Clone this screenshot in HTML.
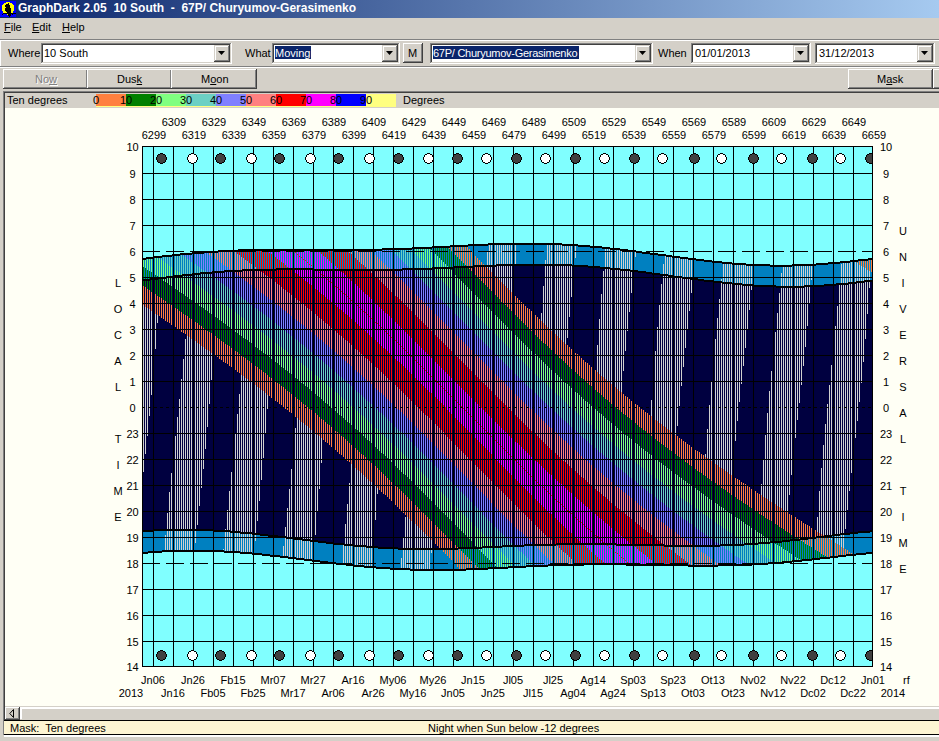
<!DOCTYPE html><html><head><meta charset="utf-8"><style>
html,body{margin:0;padding:0;width:939px;height:741px;overflow:hidden;background:#d4d0c8}
.c{width:40px;text-align:center}
.t{position:absolute;font-family:"Liberation Sans", sans-serif;font-size:11px;line-height:11px;white-space:nowrap}
u{text-decoration:underline}
</style></head><body>
<div style="position:absolute;left:0;top:0;width:939px;height:741px;background:#d4d0c8"></div><div style="position:absolute;left:0;top:0;width:939px;height:18px;background:linear-gradient(to right,#0a246a,#a6caf0)"></div><svg style="position:absolute;left:0;top:0" width="16" height="18" shape-rendering="crispEdges"><rect y="1" width="16" height="16" fill="#0000ff"/><path fill="#ffff00" d="M6 2h4v1h-4zM4 3h8v1h-8zM3 4h10v1h-10zM2 5h12v1h-12zM2 6h12v1h-12zM2 7h12v1h-12zM2 8h12v1h-12zM2 9h12v1h-12zM2 10h12v1h-12zM3 11h10v1h-10zM3 12h10v1h-10zM7 14h1v1h-1z"/><path fill="#000" d="M8 3h1v1h-1zM6 4h3v1h-3zM5 5h5v1h-5zM5 6h5v1h-5zM6 7h4v1h-4zM5 8h6v1h-6zM5 9h6v1h-6zM5 10h6v1h-6zM6 11h5v1h-5zM7 12h4v1h-4zM3 13h13v1h-13zM2 14h1v1h-1zM8 14h3v1h-3zM12 14h1v1h-1zM8 15h3v1h-3zM9 16h1v1h-1z"/></svg><div class="t" style="left:18px;top:3px;font-size:12px;color:#fff;font-weight:bold;">GraphDark 2.05&nbsp; 10 South&nbsp; -&nbsp; 67P/ Churyumov-Gerasimenko</div><div class="t" style="left:4px;top:22px;font-size:11px;color:#000;font-weight:normal;"><u>F</u>ile</div><div class="t" style="left:32px;top:22px;font-size:11px;color:#000;font-weight:normal;"><u>E</u>dit</div><div class="t" style="left:62px;top:22px;font-size:11px;color:#000;font-weight:normal;"><u>H</u>elp</div><div style="position:absolute;left:0px;top:39px;width:939px;height:1px;background:#808080;"></div><div style="position:absolute;left:0px;top:40px;width:939px;height:1px;background:#ffffff;"></div><div style="position:absolute;left:0px;top:41px;width:1px;height:25px;background:#ffffff;"></div><div class="t" style="left:8px;top:48px;font-size:11px;color:#000;font-weight:normal;">Where</div><div style="position:absolute;left:41px;top:43px;width:191px;height:21px;background:#fff;"></div><div style="position:absolute;left:41px;top:43px;width:191px;height:1px;background:#808080;"></div><div style="position:absolute;left:41px;top:43px;width:1px;height:21px;background:#808080;"></div><div style="position:absolute;left:42px;top:44px;width:189px;height:1px;background:#404040;"></div><div style="position:absolute;left:42px;top:44px;width:1px;height:19px;background:#404040;"></div><div style="position:absolute;left:41px;top:63px;width:191px;height:1px;background:#ffffff;"></div><div style="position:absolute;left:231px;top:43px;width:1px;height:21px;background:#ffffff;"></div><div style="position:absolute;left:42px;top:62px;width:189px;height:1px;background:#d4d0c8;"></div><div style="position:absolute;left:230px;top:44px;width:1px;height:19px;background:#d4d0c8;"></div><div style="position:absolute;left:214px;top:45px;width:16px;height:17px;background:#d4d0c8;"></div><div style="position:absolute;left:214px;top:45px;width:16px;height:1px;background:#d4d0c8;"></div><div style="position:absolute;left:214px;top:45px;width:1px;height:17px;background:#d4d0c8;"></div><div style="position:absolute;left:215px;top:46px;width:14px;height:1px;background:#ffffff;"></div><div style="position:absolute;left:215px;top:46px;width:1px;height:15px;background:#ffffff;"></div><div style="position:absolute;left:214px;top:61px;width:16px;height:1px;background:#404040;"></div><div style="position:absolute;left:229px;top:45px;width:1px;height:17px;background:#404040;"></div><div style="position:absolute;left:215px;top:60px;width:14px;height:1px;background:#808080;"></div><div style="position:absolute;left:228px;top:46px;width:1px;height:15px;background:#808080;"></div><svg style="position:absolute;left:218px;top:51px" width="7" height="4"><path d="M0 0h7l-3.5 4z" fill="#000"/></svg><div class="t" style="left:44px;top:48px;font-size:11px;color:#000;font-weight:normal;">10 South</div><div class="t" style="left:245px;top:48px;font-size:11px;color:#000;font-weight:normal;">What</div><div style="position:absolute;left:272px;top:43px;width:128px;height:21px;background:#fff;"></div><div style="position:absolute;left:272px;top:43px;width:128px;height:1px;background:#808080;"></div><div style="position:absolute;left:272px;top:43px;width:1px;height:21px;background:#808080;"></div><div style="position:absolute;left:273px;top:44px;width:126px;height:1px;background:#404040;"></div><div style="position:absolute;left:273px;top:44px;width:1px;height:19px;background:#404040;"></div><div style="position:absolute;left:272px;top:63px;width:128px;height:1px;background:#ffffff;"></div><div style="position:absolute;left:399px;top:43px;width:1px;height:21px;background:#ffffff;"></div><div style="position:absolute;left:273px;top:62px;width:126px;height:1px;background:#d4d0c8;"></div><div style="position:absolute;left:398px;top:44px;width:1px;height:19px;background:#d4d0c8;"></div><div style="position:absolute;left:382px;top:45px;width:16px;height:17px;background:#d4d0c8;"></div><div style="position:absolute;left:382px;top:45px;width:16px;height:1px;background:#d4d0c8;"></div><div style="position:absolute;left:382px;top:45px;width:1px;height:17px;background:#d4d0c8;"></div><div style="position:absolute;left:383px;top:46px;width:14px;height:1px;background:#ffffff;"></div><div style="position:absolute;left:383px;top:46px;width:1px;height:15px;background:#ffffff;"></div><div style="position:absolute;left:382px;top:61px;width:16px;height:1px;background:#404040;"></div><div style="position:absolute;left:397px;top:45px;width:1px;height:17px;background:#404040;"></div><div style="position:absolute;left:383px;top:60px;width:14px;height:1px;background:#808080;"></div><div style="position:absolute;left:396px;top:46px;width:1px;height:15px;background:#808080;"></div><svg style="position:absolute;left:386px;top:51px" width="7" height="4"><path d="M0 0h7l-3.5 4z" fill="#000"/></svg><div style="position:absolute;left:275px;top:46px;width:36px;height:13px;background:#0a246a;"></div><div class="t" style="left:275px;top:48px;font-size:11px;color:#fff;font-weight:normal;">Moving</div><div style="position:absolute;left:403px;top:43px;width:20px;height:20px;background:#d4d0c8;"></div><div style="position:absolute;left:403px;top:43px;width:20px;height:1px;background:#ffffff;"></div><div style="position:absolute;left:403px;top:43px;width:1px;height:20px;background:#ffffff;"></div><div style="position:absolute;left:404px;top:44px;width:18px;height:1px;background:#d4d0c8;"></div><div style="position:absolute;left:404px;top:44px;width:1px;height:18px;background:#d4d0c8;"></div><div style="position:absolute;left:403px;top:62px;width:20px;height:1px;background:#404040;"></div><div style="position:absolute;left:422px;top:43px;width:1px;height:20px;background:#404040;"></div><div style="position:absolute;left:404px;top:61px;width:18px;height:1px;background:#808080;"></div><div style="position:absolute;left:421px;top:44px;width:1px;height:18px;background:#808080;"></div><div class="t" style="left:408px;top:48px;font-size:11px;color:#000;font-weight:normal;">M</div><div style="position:absolute;left:430px;top:43px;width:223px;height:21px;background:#fff;"></div><div style="position:absolute;left:430px;top:43px;width:223px;height:1px;background:#808080;"></div><div style="position:absolute;left:430px;top:43px;width:1px;height:21px;background:#808080;"></div><div style="position:absolute;left:431px;top:44px;width:221px;height:1px;background:#404040;"></div><div style="position:absolute;left:431px;top:44px;width:1px;height:19px;background:#404040;"></div><div style="position:absolute;left:430px;top:63px;width:223px;height:1px;background:#ffffff;"></div><div style="position:absolute;left:652px;top:43px;width:1px;height:21px;background:#ffffff;"></div><div style="position:absolute;left:431px;top:62px;width:221px;height:1px;background:#d4d0c8;"></div><div style="position:absolute;left:651px;top:44px;width:1px;height:19px;background:#d4d0c8;"></div><div style="position:absolute;left:635px;top:45px;width:16px;height:17px;background:#d4d0c8;"></div><div style="position:absolute;left:635px;top:45px;width:16px;height:1px;background:#d4d0c8;"></div><div style="position:absolute;left:635px;top:45px;width:1px;height:17px;background:#d4d0c8;"></div><div style="position:absolute;left:636px;top:46px;width:14px;height:1px;background:#ffffff;"></div><div style="position:absolute;left:636px;top:46px;width:1px;height:15px;background:#ffffff;"></div><div style="position:absolute;left:635px;top:61px;width:16px;height:1px;background:#404040;"></div><div style="position:absolute;left:650px;top:45px;width:1px;height:17px;background:#404040;"></div><div style="position:absolute;left:636px;top:60px;width:14px;height:1px;background:#808080;"></div><div style="position:absolute;left:649px;top:46px;width:1px;height:15px;background:#808080;"></div><svg style="position:absolute;left:639px;top:51px" width="7" height="4"><path d="M0 0h7l-3.5 4z" fill="#000"/></svg><div style="position:absolute;left:433px;top:46px;width:146px;height:13px;background:#0a246a;"></div><div class="t" style="left:433px;top:48px;font-size:11px;color:#fff;font-weight:normal;letter-spacing:-0.26px">67P/ Churyumov-Gerasimenko</div><div class="t" style="left:658px;top:48px;font-size:11px;color:#000;font-weight:normal;">When</div><div style="position:absolute;left:691px;top:43px;width:120px;height:21px;background:#fff;"></div><div style="position:absolute;left:691px;top:43px;width:120px;height:1px;background:#808080;"></div><div style="position:absolute;left:691px;top:43px;width:1px;height:21px;background:#808080;"></div><div style="position:absolute;left:692px;top:44px;width:118px;height:1px;background:#404040;"></div><div style="position:absolute;left:692px;top:44px;width:1px;height:19px;background:#404040;"></div><div style="position:absolute;left:691px;top:63px;width:120px;height:1px;background:#ffffff;"></div><div style="position:absolute;left:810px;top:43px;width:1px;height:21px;background:#ffffff;"></div><div style="position:absolute;left:692px;top:62px;width:118px;height:1px;background:#d4d0c8;"></div><div style="position:absolute;left:809px;top:44px;width:1px;height:19px;background:#d4d0c8;"></div><div style="position:absolute;left:793px;top:45px;width:16px;height:17px;background:#d4d0c8;"></div><div style="position:absolute;left:793px;top:45px;width:16px;height:1px;background:#d4d0c8;"></div><div style="position:absolute;left:793px;top:45px;width:1px;height:17px;background:#d4d0c8;"></div><div style="position:absolute;left:794px;top:46px;width:14px;height:1px;background:#ffffff;"></div><div style="position:absolute;left:794px;top:46px;width:1px;height:15px;background:#ffffff;"></div><div style="position:absolute;left:793px;top:61px;width:16px;height:1px;background:#404040;"></div><div style="position:absolute;left:808px;top:45px;width:1px;height:17px;background:#404040;"></div><div style="position:absolute;left:794px;top:60px;width:14px;height:1px;background:#808080;"></div><div style="position:absolute;left:807px;top:46px;width:1px;height:15px;background:#808080;"></div><svg style="position:absolute;left:797px;top:51px" width="7" height="4"><path d="M0 0h7l-3.5 4z" fill="#000"/></svg><div class="t" style="left:695px;top:48px;font-size:11px;color:#000;font-weight:normal;">01/01/2013</div><div style="position:absolute;left:815px;top:43px;width:120px;height:21px;background:#fff;"></div><div style="position:absolute;left:815px;top:43px;width:120px;height:1px;background:#808080;"></div><div style="position:absolute;left:815px;top:43px;width:1px;height:21px;background:#808080;"></div><div style="position:absolute;left:816px;top:44px;width:118px;height:1px;background:#404040;"></div><div style="position:absolute;left:816px;top:44px;width:1px;height:19px;background:#404040;"></div><div style="position:absolute;left:815px;top:63px;width:120px;height:1px;background:#ffffff;"></div><div style="position:absolute;left:934px;top:43px;width:1px;height:21px;background:#ffffff;"></div><div style="position:absolute;left:816px;top:62px;width:118px;height:1px;background:#d4d0c8;"></div><div style="position:absolute;left:933px;top:44px;width:1px;height:19px;background:#d4d0c8;"></div><div style="position:absolute;left:917px;top:45px;width:16px;height:17px;background:#d4d0c8;"></div><div style="position:absolute;left:917px;top:45px;width:16px;height:1px;background:#d4d0c8;"></div><div style="position:absolute;left:917px;top:45px;width:1px;height:17px;background:#d4d0c8;"></div><div style="position:absolute;left:918px;top:46px;width:14px;height:1px;background:#ffffff;"></div><div style="position:absolute;left:918px;top:46px;width:1px;height:15px;background:#ffffff;"></div><div style="position:absolute;left:917px;top:61px;width:16px;height:1px;background:#404040;"></div><div style="position:absolute;left:932px;top:45px;width:1px;height:17px;background:#404040;"></div><div style="position:absolute;left:918px;top:60px;width:14px;height:1px;background:#808080;"></div><div style="position:absolute;left:931px;top:46px;width:1px;height:15px;background:#808080;"></div><svg style="position:absolute;left:921px;top:51px" width="7" height="4"><path d="M0 0h7l-3.5 4z" fill="#000"/></svg><div class="t" style="left:819px;top:48px;font-size:11px;color:#000;font-weight:normal;">31/12/2013</div><div style="position:absolute;left:0px;top:66px;width:939px;height:1px;background:#808080;"></div><div style="position:absolute;left:0px;top:67px;width:939px;height:1px;background:#ffffff;"></div><div style="position:absolute;left:3px;top:69px;width:85px;height:20px;background:#d4d0c8;"></div><div style="position:absolute;left:3px;top:69px;width:85px;height:1px;background:#ffffff;"></div><div style="position:absolute;left:3px;top:69px;width:1px;height:20px;background:#ffffff;"></div><div style="position:absolute;left:4px;top:70px;width:83px;height:1px;background:#d4d0c8;"></div><div style="position:absolute;left:4px;top:70px;width:1px;height:18px;background:#d4d0c8;"></div><div style="position:absolute;left:3px;top:88px;width:85px;height:1px;background:#404040;"></div><div style="position:absolute;left:87px;top:69px;width:1px;height:20px;background:#404040;"></div><div style="position:absolute;left:4px;top:87px;width:83px;height:1px;background:#808080;"></div><div style="position:absolute;left:86px;top:70px;width:1px;height:18px;background:#808080;"></div><div class="t" style="left:35px;top:74px;font-size:11px;color:#808080;font-weight:normal;text-shadow:1px 1px 0 #fff">No<span style="text-decoration:underline">w</span></div><div style="position:absolute;left:87px;top:69px;width:85px;height:20px;background:#d4d0c8;"></div><div style="position:absolute;left:87px;top:69px;width:85px;height:1px;background:#ffffff;"></div><div style="position:absolute;left:87px;top:69px;width:1px;height:20px;background:#ffffff;"></div><div style="position:absolute;left:88px;top:70px;width:83px;height:1px;background:#d4d0c8;"></div><div style="position:absolute;left:88px;top:70px;width:1px;height:18px;background:#d4d0c8;"></div><div style="position:absolute;left:87px;top:88px;width:85px;height:1px;background:#404040;"></div><div style="position:absolute;left:171px;top:69px;width:1px;height:20px;background:#404040;"></div><div style="position:absolute;left:88px;top:87px;width:83px;height:1px;background:#808080;"></div><div style="position:absolute;left:170px;top:70px;width:1px;height:18px;background:#808080;"></div><div class="t" style="left:117px;top:74px;font-size:11px;color:#000;font-weight:normal;">Dus<u>k</u></div><div style="position:absolute;left:171px;top:69px;width:86px;height:20px;background:#d4d0c8;"></div><div style="position:absolute;left:171px;top:69px;width:86px;height:1px;background:#ffffff;"></div><div style="position:absolute;left:171px;top:69px;width:1px;height:20px;background:#ffffff;"></div><div style="position:absolute;left:172px;top:70px;width:84px;height:1px;background:#d4d0c8;"></div><div style="position:absolute;left:172px;top:70px;width:1px;height:18px;background:#d4d0c8;"></div><div style="position:absolute;left:171px;top:88px;width:86px;height:1px;background:#404040;"></div><div style="position:absolute;left:256px;top:69px;width:1px;height:20px;background:#404040;"></div><div style="position:absolute;left:172px;top:87px;width:84px;height:1px;background:#808080;"></div><div style="position:absolute;left:255px;top:70px;width:1px;height:18px;background:#808080;"></div><div class="t" style="left:201px;top:74px;font-size:11px;color:#000;font-weight:normal;">M<u>o</u>on</div><div style="position:absolute;left:848px;top:69px;width:85px;height:20px;background:#d4d0c8;"></div><div style="position:absolute;left:848px;top:69px;width:85px;height:1px;background:#ffffff;"></div><div style="position:absolute;left:848px;top:69px;width:1px;height:20px;background:#ffffff;"></div><div style="position:absolute;left:849px;top:70px;width:83px;height:1px;background:#d4d0c8;"></div><div style="position:absolute;left:849px;top:70px;width:1px;height:18px;background:#d4d0c8;"></div><div style="position:absolute;left:848px;top:88px;width:85px;height:1px;background:#404040;"></div><div style="position:absolute;left:932px;top:69px;width:1px;height:20px;background:#404040;"></div><div style="position:absolute;left:849px;top:87px;width:83px;height:1px;background:#808080;"></div><div style="position:absolute;left:931px;top:70px;width:1px;height:18px;background:#808080;"></div><div class="t" style="left:877px;top:74px;font-size:11px;color:#000;font-weight:normal;">M<u>a</u>sk</div><div style="position:absolute;left:933px;top:69px;width:85px;height:20px;background:#d4d0c8;"></div><div style="position:absolute;left:933px;top:69px;width:85px;height:1px;background:#ffffff;"></div><div style="position:absolute;left:933px;top:69px;width:1px;height:20px;background:#ffffff;"></div><div style="position:absolute;left:934px;top:70px;width:83px;height:1px;background:#d4d0c8;"></div><div style="position:absolute;left:934px;top:70px;width:1px;height:18px;background:#d4d0c8;"></div><div style="position:absolute;left:933px;top:88px;width:85px;height:1px;background:#404040;"></div><div style="position:absolute;left:1017px;top:69px;width:1px;height:20px;background:#404040;"></div><div style="position:absolute;left:934px;top:87px;width:83px;height:1px;background:#808080;"></div><div style="position:absolute;left:1016px;top:70px;width:1px;height:18px;background:#808080;"></div><div style="position:absolute;left:3px;top:91px;width:936px;height:1px;background:#808080;"></div><div style="position:absolute;left:3px;top:91px;width:1px;height:644px;background:#808080;"></div><div style="position:absolute;left:4px;top:92px;width:935px;height:1px;background:#404040;"></div><div style="position:absolute;left:4px;top:92px;width:1px;height:642px;background:#404040;"></div><div style="position:absolute;left:5px;top:93px;width:934px;height:14px;background:#d4d0c8;"></div><div class="t" style="left:7px;top:95px;font-size:11px;color:#000;font-weight:normal;">Ten degrees</div><div style="position:absolute;left:96px;top:94px;width:30px;height:12px;background:#ff8040;"></div><div style="position:absolute;left:126px;top:94px;width:30px;height:12px;background:#008000;"></div><div style="position:absolute;left:156px;top:94px;width:30px;height:12px;background:#80ff80;"></div><div style="position:absolute;left:186px;top:94px;width:30px;height:12px;background:#6cd0c4;"></div><div style="position:absolute;left:216px;top:94px;width:30px;height:12px;background:#8080ff;"></div><div style="position:absolute;left:246px;top:94px;width:30px;height:12px;background:#ff8080;"></div><div style="position:absolute;left:276px;top:94px;width:30px;height:12px;background:#ff0000;"></div><div style="position:absolute;left:306px;top:94px;width:30px;height:12px;background:#ff00ff;"></div><div style="position:absolute;left:336px;top:94px;width:30px;height:12px;background:#0000ff;"></div><div style="position:absolute;left:366px;top:94px;width:30px;height:12px;background:#ffff80;"></div><div style="position:absolute;left:96px;top:106px;width:300px;height:1px;background:#ffff80;"></div><div class="t" style="left:93px;top:95px;font-size:11px;color:#000;font-weight:normal;">0</div><div class="t" style="left:120px;top:95px;font-size:11px;color:#000;font-weight:normal;">10</div><div class="t" style="left:150px;top:95px;font-size:11px;color:#000;font-weight:normal;">20</div><div class="t" style="left:180px;top:95px;font-size:11px;color:#000;font-weight:normal;">30</div><div class="t" style="left:210px;top:95px;font-size:11px;color:#000;font-weight:normal;">40</div><div class="t" style="left:240px;top:95px;font-size:11px;color:#000;font-weight:normal;">50</div><div class="t" style="left:270px;top:95px;font-size:11px;color:#000;font-weight:normal;">60</div><div class="t" style="left:300px;top:95px;font-size:11px;color:#000;font-weight:normal;">70</div><div class="t" style="left:330px;top:95px;font-size:11px;color:#000;font-weight:normal;">80</div><div class="t" style="left:360px;top:95px;font-size:11px;color:#000;font-weight:normal;">90</div><div class="t" style="left:403px;top:95px;font-size:11px;color:#000;font-weight:normal;">Degrees</div><div style="position:absolute;left:5px;top:108px;width:934px;height:598px;background:#fffff5;"></div><svg style="position:absolute;left:142px;top:146px" width="731" height="521" shape-rendering="crispEdges"><rect x="0" y="0" width="730" height="520" fill="#80ffff"/><path fill="#000000" d="M0 27h11v1h-11zM12 27h19v1h-19zM32 27h19v1h-19zM52 27h19v1h-19zM72 27h19v1h-19zM92 27h19v1h-19zM112 27h19v1h-19zM132 27h19v1h-19zM152 27h19v1h-19zM172 27h19v1h-19zM192 27h19v1h-19zM212 27h19v1h-19zM232 27h19v1h-19zM252 27h19v1h-19zM272 27h19v1h-19zM292 27h19v1h-19zM312 27h19v1h-19zM332 27h19v1h-19zM352 27h19v1h-19zM372 27h19v1h-19zM392 27h19v1h-19zM412 27h19v1h-19zM432 27h19v1h-19zM452 27h19v1h-19zM472 27h19v1h-19zM492 27h19v1h-19zM512 27h19v1h-19zM532 27h19v1h-19zM552 27h19v1h-19zM572 27h19v1h-19zM592 27h19v1h-19zM612 27h19v1h-19zM632 27h19v1h-19zM652 27h19v1h-19zM672 27h19v1h-19zM692 27h19v1h-19zM712 27h18v1h-18zM0 53h11v1h-11zM12 53h19v1h-19zM32 53h19v1h-19zM52 53h19v1h-19zM72 53h19v1h-19zM92 53h19v1h-19zM112 53h19v1h-19zM132 53h19v1h-19zM152 53h19v1h-19zM172 53h19v1h-19zM192 53h19v1h-19zM212 53h19v1h-19zM232 53h19v1h-19zM252 53h19v1h-19zM272 53h19v1h-19zM292 53h19v1h-19zM312 53h19v1h-19zM332 53h19v1h-19zM352 53h19v1h-19zM372 53h19v1h-19zM392 53h19v1h-19zM412 53h19v1h-19zM432 53h19v1h-19zM452 53h19v1h-19zM472 53h19v1h-19zM492 53h19v1h-19zM512 53h19v1h-19zM532 53h19v1h-19zM552 53h19v1h-19zM572 53h19v1h-19zM592 53h19v1h-19zM612 53h19v1h-19zM632 53h19v1h-19zM652 53h19v1h-19zM672 53h19v1h-19zM692 53h19v1h-19zM712 53h18v1h-18zM0 79h11v1h-11zM12 79h19v1h-19zM32 79h19v1h-19zM52 79h19v1h-19zM72 79h19v1h-19zM92 79h19v1h-19zM112 79h19v1h-19zM132 79h19v1h-19zM152 79h19v1h-19zM172 79h19v1h-19zM192 79h19v1h-19zM212 79h19v1h-19zM232 79h19v1h-19zM252 79h19v1h-19zM272 79h19v1h-19zM292 79h19v1h-19zM312 79h19v1h-19zM332 79h19v1h-19zM352 79h19v1h-19zM372 79h19v1h-19zM392 79h19v1h-19zM412 79h19v1h-19zM432 79h19v1h-19zM452 79h19v1h-19zM472 79h19v1h-19zM492 79h19v1h-19zM512 79h19v1h-19zM532 79h19v1h-19zM552 79h19v1h-19zM572 79h19v1h-19zM592 79h19v1h-19zM612 79h19v1h-19zM632 79h19v1h-19zM652 79h19v1h-19zM672 79h19v1h-19zM692 79h19v1h-19zM712 79h18v1h-18zM0 105h11v1h-11zM12 105h6v1h-6zM24 105h7v1h-7zM32 105h10v1h-10zM48 105h2v1h-2zM240 105h11v1h-11zM252 105h6v1h-6zM264 105h7v1h-7zM272 105h10v1h-10zM288 105h3v1h-3zM292 105h14v1h-14zM312 105h18v1h-18zM336 105h15v1h-15zM352 105h2v1h-2zM360 105h11v1h-11zM372 105h6v1h-6zM384 105h7v1h-7zM392 105h10v1h-10zM408 105h3v1h-3zM412 105h14v1h-14zM432 105h18v1h-18zM456 105h15v1h-15zM472 105h2v1h-2zM508 105h3v1h-3zM512 105h10v1h-10zM528 105h3v1h-3zM532 105h14v1h-14zM552 105h18v1h-18zM576 105h15v1h-15zM592 105h2v1h-2zM600 105h11v1h-11zM612 105h6v1h-6zM624 105h7v1h-7zM632 105h10v1h-10zM648 105h3v1h-3zM652 105h14v1h-14zM672 105h18v1h-18zM696 105h15v1h-15zM712 105h2v1h-2zM720 105h10v1h-10zM0 112h4v2h-4zM546 112h5v2h-5zM552 112h2v2h-2zM726 112h4v2h-4zM0 131h8v1h-8zM40 131h11v1h-11zM52 131h19v1h-19zM72 131h19v1h-19zM92 131h19v1h-19zM112 131h19v1h-19zM132 131h19v1h-19zM152 131h19v1h-19zM172 131h19v1h-19zM192 131h19v1h-19zM212 131h19v1h-19zM232 131h19v1h-19zM252 131h19v1h-19zM272 131h19v1h-19zM292 131h19v1h-19zM312 131h19v1h-19zM332 131h19v1h-19zM352 131h19v1h-19zM372 131h19v1h-19zM392 131h19v1h-19zM412 131h19v1h-19zM432 131h19v1h-19zM452 131h19v1h-19zM472 131h19v1h-19zM492 131h19v1h-19zM512 131h14v1h-14zM556 131h15v1h-15zM572 131h19v1h-19zM592 131h19v1h-19zM612 131h19v1h-19zM632 131h19v1h-19zM652 131h19v1h-19zM672 131h19v1h-19zM692 131h19v1h-19zM712 131h18v1h-18zM0 133h8v2h-8zM556 133h6v2h-6zM0 157h11v1h-11zM12 157h19v1h-19zM32 157h19v1h-19zM52 157h19v1h-19zM72 157h19v1h-19zM92 157h19v1h-19zM112 157h19v1h-19zM132 157h19v1h-19zM152 157h19v1h-19zM172 157h19v1h-19zM192 157h19v1h-19zM212 157h19v1h-19zM232 157h19v1h-19zM252 157h19v1h-19zM272 157h19v1h-19zM292 157h19v1h-19zM312 157h19v1h-19zM332 157h19v1h-19zM352 157h19v1h-19zM372 157h19v1h-19zM392 157h19v1h-19zM412 157h19v1h-19zM432 157h19v1h-19zM452 157h19v1h-19zM472 157h19v1h-19zM492 157h19v1h-19zM512 157h19v1h-19zM532 157h19v1h-19zM552 157h19v1h-19zM572 157h19v1h-19zM592 157h19v1h-19zM612 157h19v1h-19zM632 157h19v1h-19zM652 157h19v1h-19zM672 157h19v1h-19zM692 157h19v1h-19zM712 157h18v1h-18zM0 183h11v1h-11zM12 183h19v1h-19zM32 183h19v1h-19zM52 183h19v1h-19zM72 183h19v1h-19zM92 183h19v1h-19zM112 183h19v1h-19zM132 183h19v1h-19zM152 183h19v1h-19zM172 183h19v1h-19zM192 183h19v1h-19zM212 183h19v1h-19zM232 183h19v1h-19zM252 183h19v1h-19zM272 183h19v1h-19zM292 183h19v1h-19zM312 183h19v1h-19zM332 183h19v1h-19zM352 183h19v1h-19zM372 183h19v1h-19zM392 183h19v1h-19zM412 183h19v1h-19zM432 183h19v1h-19zM452 183h19v1h-19zM472 183h19v1h-19zM492 183h19v1h-19zM512 183h19v1h-19zM532 183h19v1h-19zM552 183h19v1h-19zM572 183h19v1h-19zM592 183h19v1h-19zM612 183h19v1h-19zM632 183h19v1h-19zM652 183h19v1h-19zM672 183h19v1h-19zM692 183h19v1h-19zM712 183h18v1h-18zM0 209h11v1h-11zM12 209h19v1h-19zM32 209h19v1h-19zM52 209h19v1h-19zM72 209h19v1h-19zM92 209h19v1h-19zM112 209h19v1h-19zM132 209h19v1h-19zM152 209h19v1h-19zM172 209h19v1h-19zM192 209h19v1h-19zM212 209h19v1h-19zM232 209h19v1h-19zM252 209h19v1h-19zM272 209h19v1h-19zM292 209h19v1h-19zM312 209h19v1h-19zM332 209h19v1h-19zM352 209h19v1h-19zM372 209h19v1h-19zM392 209h19v1h-19zM412 209h19v1h-19zM432 209h19v1h-19zM452 209h19v1h-19zM472 209h19v1h-19zM492 209h19v1h-19zM512 209h19v1h-19zM532 209h19v1h-19zM552 209h19v1h-19zM572 209h19v1h-19zM592 209h19v1h-19zM612 209h19v1h-19zM632 209h19v1h-19zM652 209h19v1h-19zM672 209h19v1h-19zM692 209h19v1h-19zM712 209h18v1h-18zM0 235h11v1h-11zM12 235h19v1h-19zM32 235h19v1h-19zM52 235h19v1h-19zM72 235h19v1h-19zM92 235h19v1h-19zM112 235h19v1h-19zM132 235h19v1h-19zM152 235h19v1h-19zM172 235h19v1h-19zM192 235h19v1h-19zM212 235h19v1h-19zM232 235h19v1h-19zM252 235h19v1h-19zM272 235h19v1h-19zM292 235h19v1h-19zM312 235h19v1h-19zM332 235h19v1h-19zM352 235h19v1h-19zM372 235h19v1h-19zM392 235h19v1h-19zM412 235h19v1h-19zM432 235h19v1h-19zM452 235h19v1h-19zM472 235h19v1h-19zM492 235h19v1h-19zM512 235h19v1h-19zM532 235h19v1h-19zM552 235h19v1h-19zM572 235h19v1h-19zM592 235h19v1h-19zM612 235h19v1h-19zM632 235h19v1h-19zM652 235h19v1h-19zM672 235h19v1h-19zM692 235h19v1h-19zM712 235h18v1h-18zM0 261h3v1h-3zM6 261h3v1h-3zM12 261h3v1h-3zM18 261h3v1h-3zM24 261h3v1h-3zM30 261h1v1h-1zM32 261h1v1h-1zM36 261h3v1h-3zM42 261h3v1h-3zM48 261h3v1h-3zM54 261h3v1h-3zM60 261h3v1h-3zM66 261h3v1h-3zM72 261h3v1h-3zM78 261h3v1h-3zM84 261h3v1h-3zM90 261h1v1h-1zM92 261h1v1h-1zM96 261h3v1h-3zM102 261h3v1h-3zM108 261h3v1h-3zM114 261h3v1h-3zM120 261h3v1h-3zM126 261h3v1h-3zM132 261h3v1h-3zM138 261h3v1h-3zM144 261h3v1h-3zM150 261h1v1h-1zM152 261h1v1h-1zM156 261h3v1h-3zM162 261h3v1h-3zM168 261h3v1h-3zM174 261h3v1h-3zM180 261h3v1h-3zM186 261h3v1h-3zM192 261h3v1h-3zM198 261h3v1h-3zM204 261h3v1h-3zM210 261h1v1h-1zM212 261h1v1h-1zM216 261h3v1h-3zM222 261h3v1h-3zM228 261h3v1h-3zM234 261h3v1h-3zM240 261h3v1h-3zM246 261h3v1h-3zM252 261h3v1h-3zM258 261h3v1h-3zM264 261h3v1h-3zM270 261h1v1h-1zM272 261h1v1h-1zM276 261h3v1h-3zM282 261h3v1h-3zM288 261h3v1h-3zM294 261h3v1h-3zM300 261h3v1h-3zM306 261h3v1h-3zM312 261h3v1h-3zM318 261h3v1h-3zM324 261h3v1h-3zM330 261h1v1h-1zM332 261h1v1h-1zM336 261h3v1h-3zM342 261h3v1h-3zM348 261h3v1h-3zM354 261h3v1h-3zM360 261h3v1h-3zM366 261h3v1h-3zM372 261h3v1h-3zM378 261h3v1h-3zM384 261h3v1h-3zM390 261h1v1h-1zM392 261h1v1h-1zM396 261h3v1h-3zM402 261h3v1h-3zM408 261h3v1h-3zM414 261h3v1h-3zM420 261h3v1h-3zM426 261h3v1h-3zM432 261h3v1h-3zM438 261h3v1h-3zM444 261h3v1h-3zM450 261h1v1h-1zM452 261h1v1h-1zM456 261h3v1h-3zM462 261h3v1h-3zM468 261h3v1h-3zM474 261h3v1h-3zM480 261h3v1h-3zM486 261h3v1h-3zM492 261h3v1h-3zM498 261h3v1h-3zM504 261h3v1h-3zM510 261h1v1h-1zM512 261h1v1h-1zM516 261h3v1h-3zM522 261h3v1h-3zM528 261h3v1h-3zM534 261h3v1h-3zM540 261h3v1h-3zM546 261h3v1h-3zM552 261h3v1h-3zM558 261h3v1h-3zM564 261h3v1h-3zM570 261h1v1h-1zM572 261h1v1h-1zM576 261h3v1h-3zM582 261h3v1h-3zM588 261h3v1h-3zM594 261h3v1h-3zM600 261h3v1h-3zM606 261h3v1h-3zM612 261h3v1h-3zM618 261h3v1h-3zM624 261h3v1h-3zM630 261h1v1h-1zM632 261h1v1h-1zM636 261h3v1h-3zM642 261h3v1h-3zM648 261h3v1h-3zM654 261h3v1h-3zM660 261h3v1h-3zM666 261h3v1h-3zM672 261h3v1h-3zM678 261h3v1h-3zM684 261h3v1h-3zM690 261h1v1h-1zM692 261h1v1h-1zM696 261h3v1h-3zM702 261h3v1h-3zM708 261h3v1h-3zM714 261h3v1h-3zM720 261h3v1h-3zM726 261h3v1h-3zM0 287h11v1h-11zM12 287h19v1h-19zM32 287h19v1h-19zM52 287h19v1h-19zM72 287h19v1h-19zM92 287h19v1h-19zM112 287h19v1h-19zM132 287h19v1h-19zM152 287h19v1h-19zM172 287h19v1h-19zM192 287h19v1h-19zM212 287h19v1h-19zM232 287h19v1h-19zM252 287h19v1h-19zM272 287h19v1h-19zM292 287h19v1h-19zM312 287h19v1h-19zM332 287h19v1h-19zM352 287h19v1h-19zM372 287h19v1h-19zM392 287h19v1h-19zM412 287h19v1h-19zM432 287h19v1h-19zM452 287h19v1h-19zM472 287h19v1h-19zM492 287h19v1h-19zM512 287h19v1h-19zM532 287h19v1h-19zM552 287h19v1h-19zM572 287h19v1h-19zM592 287h19v1h-19zM612 287h19v1h-19zM632 287h19v1h-19zM652 287h19v1h-19zM672 287h19v1h-19zM692 287h19v1h-19zM712 287h18v1h-18zM0 313h11v1h-11zM12 313h19v1h-19zM32 313h19v1h-19zM52 313h19v1h-19zM72 313h19v1h-19zM92 313h19v1h-19zM112 313h19v1h-19zM132 313h19v1h-19zM152 313h19v1h-19zM172 313h19v1h-19zM192 313h19v1h-19zM212 313h19v1h-19zM232 313h19v1h-19zM252 313h19v1h-19zM272 313h19v1h-19zM292 313h19v1h-19zM312 313h19v1h-19zM332 313h19v1h-19zM352 313h19v1h-19zM372 313h19v1h-19zM392 313h19v1h-19zM412 313h19v1h-19zM432 313h19v1h-19zM452 313h19v1h-19zM472 313h19v1h-19zM492 313h19v1h-19zM512 313h19v1h-19zM532 313h19v1h-19zM552 313h19v1h-19zM572 313h19v1h-19zM592 313h19v1h-19zM612 313h19v1h-19zM632 313h19v1h-19zM652 313h19v1h-19zM672 313h19v1h-19zM692 313h19v1h-19zM712 313h18v1h-18zM0 339h11v1h-11zM12 339h19v1h-19zM32 339h19v1h-19zM52 339h19v1h-19zM72 339h19v1h-19zM92 339h19v1h-19zM112 339h19v1h-19zM132 339h19v1h-19zM152 339h19v1h-19zM172 339h19v1h-19zM192 339h19v1h-19zM212 339h19v1h-19zM232 339h19v1h-19zM252 339h19v1h-19zM272 339h19v1h-19zM292 339h19v1h-19zM312 339h19v1h-19zM332 339h19v1h-19zM352 339h19v1h-19zM372 339h19v1h-19zM392 339h19v1h-19zM412 339h19v1h-19zM432 339h19v1h-19zM452 339h19v1h-19zM472 339h19v1h-19zM492 339h19v1h-19zM512 339h19v1h-19zM532 339h19v1h-19zM552 339h19v1h-19zM572 339h19v1h-19zM592 339h19v1h-19zM612 339h19v1h-19zM632 339h19v1h-19zM652 339h19v1h-19zM672 339h19v1h-19zM692 339h19v1h-19zM712 339h18v1h-18zM0 365h11v1h-11zM12 365h19v1h-19zM32 365h19v1h-19zM52 365h19v1h-19zM72 365h19v1h-19zM92 365h19v1h-19zM112 365h19v1h-19zM132 365h19v1h-19zM152 365h19v1h-19zM172 365h19v1h-19zM192 365h19v1h-19zM212 365h19v1h-19zM232 365h19v1h-19zM252 365h19v1h-19zM272 365h19v1h-19zM292 365h19v1h-19zM312 365h19v1h-19zM332 365h19v1h-19zM352 365h19v1h-19zM372 365h19v1h-19zM392 365h19v1h-19zM412 365h19v1h-19zM432 365h19v1h-19zM452 365h19v1h-19zM472 365h19v1h-19zM492 365h19v1h-19zM512 365h19v1h-19zM532 365h19v1h-19zM552 365h19v1h-19zM572 365h19v1h-19zM592 365h19v1h-19zM612 365h19v1h-19zM632 365h19v1h-19zM652 365h19v1h-19zM672 365h19v1h-19zM692 365h19v1h-19zM712 365h18v1h-18zM0 384h11v2h-11zM72 384h16v2h-16zM728 384h2v2h-2zM0 391h11v1h-11zM12 391h19v1h-19zM32 391h19v1h-19zM52 391h19v1h-19zM72 391h19v1h-19zM92 391h19v1h-19zM112 391h14v1h-14zM160 391h11v1h-11zM172 391h19v1h-19zM192 391h19v1h-19zM212 391h19v1h-19zM232 391h19v1h-19zM252 391h19v1h-19zM272 391h19v1h-19zM292 391h19v1h-19zM312 391h19v1h-19zM332 391h19v1h-19zM352 391h19v1h-19zM372 391h19v1h-19zM392 391h19v1h-19zM412 391h19v1h-19zM432 391h19v1h-19zM452 391h19v1h-19zM472 391h19v1h-19zM492 391h19v1h-19zM512 391h19v1h-19zM532 391h19v1h-19zM552 391h19v1h-19zM572 391h19v1h-19zM592 391h19v1h-19zM612 391h19v1h-19zM632 391h19v1h-19zM652 391h6v1h-6zM690 391h1v1h-1zM692 391h19v1h-19zM712 391h18v1h-18zM0 406h6v2h-6zM98 406h12v2h-12zM724 406h6v2h-6zM0 417h11v1h-11zM12 417h6v1h-6zM24 417h7v1h-7zM32 417h10v1h-10zM48 417h3v1h-3zM52 417h14v1h-14zM72 417h18v1h-18zM96 417h15v1h-15zM112 417h2v1h-2zM120 417h11v1h-11zM132 417h6v1h-6zM144 417h7v1h-7zM152 417h10v1h-10zM168 417h3v1h-3zM172 417h6v1h-6zM216 417h15v1h-15zM232 417h2v1h-2zM240 417h11v1h-11zM252 417h6v1h-6zM264 417h7v1h-7zM272 417h10v1h-10zM288 417h3v1h-3zM292 417h14v1h-14zM312 417h18v1h-18zM336 417h15v1h-15zM352 417h2v1h-2zM360 417h11v1h-11zM372 417h6v1h-6zM384 417h7v1h-7zM392 417h10v1h-10zM552 417h18v1h-18zM650 417h1v1h-1zM652 417h14v1h-14zM672 417h18v1h-18zM696 417h15v1h-15zM712 417h2v1h-2zM720 417h10v1h-10zM0 443h11v1h-11zM12 443h19v1h-19zM32 443h19v1h-19zM52 443h19v1h-19zM72 443h19v1h-19zM92 443h19v1h-19zM112 443h19v1h-19zM132 443h19v1h-19zM152 443h19v1h-19zM172 443h19v1h-19zM192 443h19v1h-19zM212 443h19v1h-19zM232 443h19v1h-19zM252 443h19v1h-19zM272 443h19v1h-19zM292 443h19v1h-19zM312 443h19v1h-19zM332 443h19v1h-19zM352 443h19v1h-19zM372 443h19v1h-19zM392 443h19v1h-19zM412 443h19v1h-19zM432 443h19v1h-19zM452 443h19v1h-19zM472 443h19v1h-19zM492 443h19v1h-19zM512 443h19v1h-19zM532 443h19v1h-19zM552 443h19v1h-19zM572 443h19v1h-19zM592 443h19v1h-19zM612 443h19v1h-19zM632 443h19v1h-19zM652 443h19v1h-19zM672 443h19v1h-19zM692 443h19v1h-19zM712 443h18v1h-18zM0 469h11v1h-11zM12 469h19v1h-19zM32 469h19v1h-19zM52 469h19v1h-19zM72 469h19v1h-19zM92 469h19v1h-19zM112 469h19v1h-19zM132 469h19v1h-19zM152 469h19v1h-19zM172 469h19v1h-19zM192 469h19v1h-19zM212 469h19v1h-19zM232 469h19v1h-19zM252 469h19v1h-19zM272 469h19v1h-19zM292 469h19v1h-19zM312 469h19v1h-19zM332 469h19v1h-19zM352 469h19v1h-19zM372 469h19v1h-19zM392 469h19v1h-19zM412 469h19v1h-19zM432 469h19v1h-19zM452 469h19v1h-19zM472 469h19v1h-19zM492 469h19v1h-19zM512 469h19v1h-19zM532 469h19v1h-19zM552 469h19v1h-19zM572 469h19v1h-19zM592 469h19v1h-19zM612 469h19v1h-19zM632 469h19v1h-19zM652 469h19v1h-19zM672 469h19v1h-19zM692 469h19v1h-19zM712 469h18v1h-18zM0 495h11v1h-11zM12 495h19v1h-19zM32 495h19v1h-19zM52 495h19v1h-19zM72 495h19v1h-19zM92 495h19v1h-19zM112 495h19v1h-19zM132 495h19v1h-19zM152 495h19v1h-19zM172 495h19v1h-19zM192 495h19v1h-19zM212 495h19v1h-19zM232 495h19v1h-19zM252 495h19v1h-19zM272 495h19v1h-19zM292 495h19v1h-19zM312 495h19v1h-19zM332 495h19v1h-19zM352 495h19v1h-19zM372 495h19v1h-19zM392 495h19v1h-19zM412 495h19v1h-19zM432 495h19v1h-19zM452 495h19v1h-19zM472 495h19v1h-19zM492 495h19v1h-19zM512 495h19v1h-19zM532 495h19v1h-19zM552 495h19v1h-19zM572 495h19v1h-19zM592 495h19v1h-19zM612 495h19v1h-19zM632 495h19v1h-19zM652 495h19v1h-19zM672 495h19v1h-19zM692 495h19v1h-19zM712 495h18v1h-18zM4 111h7v2h-7zM538 111h8v2h-8zM6 405h5v2h-5zM12 405h8v2h-8zM82 405h9v2h-9zM92 405h6v2h-6zM8 131h3v3h-3zM12 131h4v3h-4zM548 131h3v3h-3zM552 131h4v3h-4zM11 0h1v520h-1zM31 0h1v520h-1zM71 0h1v520h-1zM91 0h1v520h-1zM131 0h1v520h-1zM151 0h1v520h-1zM191 0h1v520h-1zM211 0h1v520h-1zM251 0h1v520h-1zM271 0h1v520h-1zM291 0h1v520h-1zM331 0h1v520h-1zM351 0h1v520h-1zM391 0h1v520h-1zM411 0h1v520h-1zM451 0h1v520h-1zM471 0h1v520h-1zM511 0h1v520h-1zM531 0h1v520h-1zM571 0h1v520h-1zM591 0h1v520h-1zM631 0h1v520h-1zM651 0h1v520h-1zM691 0h1v520h-1zM711 0h1v520h-1zM12 110h8v2h-8zM530 110h1v2h-1zM532 110h6v2h-6zM12 383h19v2h-19zM32 383h19v2h-19zM52 383h19v2h-19zM14 11h1v3h-1zM24 11h1v3h-1zM45 11h1v3h-1zM55 11h1v3h-1zM73 11h1v3h-1zM83 11h1v3h-1zM104 11h1v3h-1zM114 11h1v3h-1zM132 11h1v3h-1zM142 11h1v3h-1zM163 11h1v3h-1zM173 11h1v3h-1zM201 11h1v3h-1zM222 11h1v3h-1zM232 11h1v3h-1zM261 11h1v3h-1zM281 11h1v3h-1zM310 11h1v3h-1zM320 11h1v3h-1zM339 11h1v3h-1zM349 11h1v3h-1zM369 11h1v3h-1zM379 11h1v3h-1zM398 11h1v3h-1zM408 11h1v3h-1zM428 11h1v3h-1zM438 11h1v3h-1zM457 11h1v3h-1zM467 11h1v3h-1zM487 11h1v3h-1zM497 11h1v3h-1zM515 11h1v3h-1zM525 11h1v3h-1zM547 11h1v3h-1zM557 11h1v3h-1zM574 11h1v3h-1zM584 11h1v3h-1zM606 11h1v3h-1zM616 11h1v3h-1zM634 11h1v3h-1zM644 11h1v3h-1zM665 11h1v3h-1zM675 11h1v3h-1zM693 11h1v3h-1zM703 11h1v3h-1zM723 11h1v3h-1zM14 508h1v3h-1zM24 508h1v3h-1zM45 508h1v3h-1zM55 508h1v3h-1zM73 508h1v3h-1zM83 508h1v3h-1zM104 508h1v3h-1zM114 508h1v3h-1zM132 508h1v3h-1zM142 508h1v3h-1zM163 508h1v3h-1zM173 508h1v3h-1zM201 508h1v3h-1zM222 508h1v3h-1zM232 508h1v3h-1zM261 508h1v3h-1zM281 508h1v3h-1zM310 508h1v3h-1zM320 508h1v3h-1zM339 508h1v3h-1zM349 508h1v3h-1zM369 508h1v3h-1zM379 508h1v3h-1zM398 508h1v3h-1zM408 508h1v3h-1zM428 508h1v3h-1zM438 508h1v3h-1zM457 508h1v3h-1zM467 508h1v3h-1zM487 508h1v3h-1zM497 508h1v3h-1zM515 508h1v3h-1zM525 508h1v3h-1zM547 508h1v3h-1zM557 508h1v3h-1zM574 508h1v3h-1zM584 508h1v3h-1zM606 508h1v3h-1zM616 508h1v3h-1zM634 508h1v3h-1zM644 508h1v3h-1zM665 508h1v3h-1zM675 508h1v3h-1zM693 508h1v3h-1zM703 508h1v3h-1zM723 508h1v3h-1zM15 9h1v2h-1zM23 9h1v2h-1zM46 9h1v2h-1zM54 9h1v2h-1zM74 9h1v2h-1zM82 9h1v2h-1zM105 9h1v2h-1zM113 9h1v2h-1zM133 9h1v2h-1zM141 9h1v2h-1zM164 9h1v2h-1zM172 9h1v2h-1zM192 9h1v2h-1zM200 9h1v2h-1zM223 9h1v2h-1zM252 9h1v2h-1zM260 9h1v2h-1zM282 9h1v2h-1zM290 9h1v2h-1zM319 9h1v2h-1zM340 9h1v2h-1zM348 9h1v2h-1zM370 9h1v2h-1zM378 9h1v2h-1zM399 9h1v2h-1zM407 9h1v2h-1zM429 9h1v2h-1zM437 9h1v2h-1zM458 9h1v2h-1zM466 9h1v2h-1zM488 9h1v2h-1zM496 9h1v2h-1zM516 9h1v2h-1zM524 9h1v2h-1zM548 9h1v2h-1zM556 9h1v2h-1zM575 9h1v2h-1zM583 9h1v2h-1zM607 9h1v2h-1zM615 9h1v2h-1zM635 9h1v2h-1zM643 9h1v2h-1zM666 9h1v2h-1zM674 9h1v2h-1zM694 9h1v2h-1zM702 9h1v2h-1zM724 9h1v2h-1zM15 14h1v2h-1zM23 14h1v2h-1zM46 14h1v2h-1zM54 14h1v2h-1zM74 14h1v2h-1zM82 14h1v2h-1zM105 14h1v2h-1zM113 14h1v2h-1zM133 14h1v2h-1zM141 14h1v2h-1zM164 14h1v2h-1zM172 14h1v2h-1zM192 14h1v2h-1zM200 14h1v2h-1zM223 14h1v2h-1zM252 14h1v2h-1zM260 14h1v2h-1zM282 14h1v2h-1zM290 14h1v2h-1zM319 14h1v2h-1zM340 14h1v2h-1zM348 14h1v2h-1zM370 14h1v2h-1zM378 14h1v2h-1zM399 14h1v2h-1zM407 14h1v2h-1zM429 14h1v2h-1zM437 14h1v2h-1zM458 14h1v2h-1zM466 14h1v2h-1zM488 14h1v2h-1zM496 14h1v2h-1zM516 14h1v2h-1zM524 14h1v2h-1zM548 14h1v2h-1zM556 14h1v2h-1zM575 14h1v2h-1zM583 14h1v2h-1zM607 14h1v2h-1zM615 14h1v2h-1zM635 14h1v2h-1zM643 14h1v2h-1zM666 14h1v2h-1zM674 14h1v2h-1zM694 14h1v2h-1zM702 14h1v2h-1zM724 14h1v2h-1zM15 506h1v2h-1zM23 506h1v2h-1zM46 506h1v2h-1zM54 506h1v2h-1zM74 506h1v2h-1zM82 506h1v2h-1zM105 506h1v2h-1zM113 506h1v2h-1zM133 506h1v2h-1zM141 506h1v2h-1zM164 506h1v2h-1zM172 506h1v2h-1zM192 506h1v2h-1zM200 506h1v2h-1zM223 506h1v2h-1zM252 506h1v2h-1zM260 506h1v2h-1zM282 506h1v2h-1zM290 506h1v2h-1zM319 506h1v2h-1zM340 506h1v2h-1zM348 506h1v2h-1zM370 506h1v2h-1zM378 506h1v2h-1zM399 506h1v2h-1zM407 506h1v2h-1zM429 506h1v2h-1zM437 506h1v2h-1zM458 506h1v2h-1zM466 506h1v2h-1zM488 506h1v2h-1zM496 506h1v2h-1zM516 506h1v2h-1zM524 506h1v2h-1zM548 506h1v2h-1zM556 506h1v2h-1zM575 506h1v2h-1zM583 506h1v2h-1zM607 506h1v2h-1zM615 506h1v2h-1zM635 506h1v2h-1zM643 506h1v2h-1zM666 506h1v2h-1zM674 506h1v2h-1zM694 506h1v2h-1zM702 506h1v2h-1zM724 506h1v2h-1zM15 511h1v2h-1zM23 511h1v2h-1zM46 511h1v2h-1zM54 511h1v2h-1zM74 511h1v2h-1zM82 511h1v2h-1zM105 511h1v2h-1zM113 511h1v2h-1zM133 511h1v2h-1zM141 511h1v2h-1zM164 511h1v2h-1zM172 511h1v2h-1zM192 511h1v2h-1zM200 511h1v2h-1zM223 511h1v2h-1zM252 511h1v2h-1zM260 511h1v2h-1zM282 511h1v2h-1zM290 511h1v2h-1zM319 511h1v2h-1zM340 511h1v2h-1zM348 511h1v2h-1zM370 511h1v2h-1zM378 511h1v2h-1zM399 511h1v2h-1zM407 511h1v2h-1zM429 511h1v2h-1zM437 511h1v2h-1zM458 511h1v2h-1zM466 511h1v2h-1zM488 511h1v2h-1zM496 511h1v2h-1zM516 511h1v2h-1zM524 511h1v2h-1zM548 511h1v2h-1zM556 511h1v2h-1zM575 511h1v2h-1zM583 511h1v2h-1zM607 511h1v2h-1zM615 511h1v2h-1zM635 511h1v2h-1zM643 511h1v2h-1zM666 511h1v2h-1zM674 511h1v2h-1zM694 511h1v2h-1zM702 511h1v2h-1zM724 511h1v2h-1zM16 8h2v1h-2zM21 8h2v1h-2zM47 8h2v1h-2zM52 8h2v1h-2zM75 8h2v1h-2zM80 8h2v1h-2zM106 8h2v1h-2zM112 8h1v1h-1zM134 8h2v1h-2zM139 8h2v1h-2zM165 8h2v1h-2zM170 8h1v1h-1zM193 8h2v1h-2zM198 8h2v1h-2zM224 8h2v1h-2zM229 8h2v1h-2zM253 8h2v1h-2zM258 8h2v1h-2zM283 8h2v1h-2zM288 8h2v1h-2zM312 8h2v1h-2zM317 8h2v1h-2zM341 8h2v1h-2zM346 8h2v1h-2zM372 8h1v1h-1zM376 8h2v1h-2zM400 8h2v1h-2zM405 8h2v1h-2zM430 8h1v1h-1zM435 8h2v1h-2zM459 8h2v1h-2zM464 8h2v1h-2zM489 8h2v1h-2zM494 8h2v1h-2zM517 8h2v1h-2zM522 8h2v1h-2zM549 8h2v1h-2zM554 8h2v1h-2zM576 8h2v1h-2zM581 8h2v1h-2zM608 8h2v1h-2zM613 8h2v1h-2zM636 8h2v1h-2zM641 8h2v1h-2zM667 8h2v1h-2zM672 8h2v1h-2zM695 8h2v1h-2zM700 8h2v1h-2zM725 8h2v1h-2zM16 16h2v1h-2zM21 16h2v1h-2zM47 16h2v1h-2zM52 16h2v1h-2zM75 16h2v1h-2zM80 16h2v1h-2zM106 16h2v1h-2zM112 16h1v1h-1zM134 16h2v1h-2zM139 16h2v1h-2zM165 16h2v1h-2zM170 16h1v1h-1zM193 16h2v1h-2zM198 16h2v1h-2zM224 16h2v1h-2zM229 16h2v1h-2zM253 16h2v1h-2zM258 16h2v1h-2zM283 16h2v1h-2zM288 16h2v1h-2zM312 16h2v1h-2zM317 16h2v1h-2zM341 16h2v1h-2zM346 16h2v1h-2zM372 16h1v1h-1zM376 16h2v1h-2zM400 16h2v1h-2zM405 16h2v1h-2zM430 16h1v1h-1zM435 16h2v1h-2zM459 16h2v1h-2zM464 16h2v1h-2zM489 16h2v1h-2zM494 16h2v1h-2zM517 16h2v1h-2zM522 16h2v1h-2zM549 16h2v1h-2zM554 16h2v1h-2zM576 16h2v1h-2zM581 16h2v1h-2zM608 16h2v1h-2zM613 16h2v1h-2zM636 16h2v1h-2zM641 16h2v1h-2zM667 16h2v1h-2zM672 16h2v1h-2zM695 16h2v1h-2zM700 16h2v1h-2zM725 16h2v1h-2zM16 131h8v2h-8zM540 131h8v2h-8zM16 505h2v1h-2zM21 505h2v1h-2zM47 505h2v1h-2zM52 505h2v1h-2zM75 505h2v1h-2zM80 505h2v1h-2zM106 505h2v1h-2zM112 505h1v1h-1zM134 505h2v1h-2zM139 505h2v1h-2zM165 505h2v1h-2zM170 505h1v1h-1zM193 505h2v1h-2zM198 505h2v1h-2zM224 505h2v1h-2zM229 505h2v1h-2zM253 505h2v1h-2zM258 505h2v1h-2zM283 505h2v1h-2zM288 505h2v1h-2zM312 505h2v1h-2zM317 505h2v1h-2zM341 505h2v1h-2zM346 505h2v1h-2zM372 505h1v1h-1zM376 505h2v1h-2zM400 505h2v1h-2zM405 505h2v1h-2zM430 505h1v1h-1zM435 505h2v1h-2zM459 505h2v1h-2zM464 505h2v1h-2zM489 505h2v1h-2zM494 505h2v1h-2zM517 505h2v1h-2zM522 505h2v1h-2zM549 505h2v1h-2zM554 505h2v1h-2zM576 505h2v1h-2zM581 505h2v1h-2zM608 505h2v1h-2zM613 505h2v1h-2zM636 505h2v1h-2zM641 505h2v1h-2zM667 505h2v1h-2zM672 505h2v1h-2zM695 505h2v1h-2zM700 505h2v1h-2zM725 505h2v1h-2zM16 513h2v1h-2zM21 513h2v1h-2zM47 513h2v1h-2zM52 513h2v1h-2zM75 513h2v1h-2zM80 513h2v1h-2zM106 513h2v1h-2zM112 513h1v1h-1zM134 513h2v1h-2zM139 513h2v1h-2zM165 513h2v1h-2zM170 513h1v1h-1zM193 513h2v1h-2zM198 513h2v1h-2zM224 513h2v1h-2zM229 513h2v1h-2zM253 513h2v1h-2zM258 513h2v1h-2zM283 513h2v1h-2zM288 513h2v1h-2zM312 513h2v1h-2zM317 513h2v1h-2zM341 513h2v1h-2zM346 513h2v1h-2zM372 513h1v1h-1zM376 513h2v1h-2zM400 513h2v1h-2zM405 513h2v1h-2zM430 513h1v1h-1zM435 513h2v1h-2zM459 513h2v1h-2zM464 513h2v1h-2zM489 513h2v1h-2zM494 513h2v1h-2zM517 513h2v1h-2zM522 513h2v1h-2zM549 513h2v1h-2zM554 513h2v1h-2zM576 513h2v1h-2zM581 513h2v1h-2zM608 513h2v1h-2zM613 513h2v1h-2zM636 513h2v1h-2zM641 513h2v1h-2zM667 513h2v1h-2zM672 513h2v1h-2zM695 513h2v1h-2zM700 513h2v1h-2zM725 513h2v1h-2zM18 7h3v1h-3zM49 7h2v1h-2zM77 7h3v1h-3zM108 7h3v1h-3zM136 7h3v1h-3zM167 7h3v1h-3zM195 7h3v1h-3zM226 7h3v1h-3zM255 7h3v1h-3zM285 7h3v1h-3zM314 7h3v1h-3zM343 7h3v1h-3zM373 7h3v1h-3zM402 7h3v1h-3zM432 7h3v1h-3zM461 7h3v1h-3zM492 7h2v1h-2zM519 7h3v1h-3zM552 7h2v1h-2zM578 7h3v1h-3zM610 7h1v1h-1zM612 7h1v1h-1zM638 7h3v1h-3zM669 7h2v1h-2zM697 7h3v1h-3zM727 7h3v1h-3zM18 17h3v1h-3zM49 17h2v1h-2zM77 17h3v1h-3zM108 17h3v1h-3zM136 17h3v1h-3zM167 17h3v1h-3zM195 17h3v1h-3zM226 17h3v1h-3zM255 17h3v1h-3zM285 17h3v1h-3zM314 17h3v1h-3zM343 17h3v1h-3zM373 17h3v1h-3zM402 17h3v1h-3zM432 17h3v1h-3zM461 17h3v1h-3zM492 17h2v1h-2zM519 17h3v1h-3zM552 17h2v1h-2zM578 17h3v1h-3zM610 17h1v1h-1zM612 17h1v1h-1zM638 17h3v1h-3zM669 17h2v1h-2zM697 17h3v1h-3zM727 17h3v1h-3zM18 504h3v1h-3zM49 504h2v1h-2zM77 504h3v1h-3zM108 504h3v1h-3zM136 504h3v1h-3zM167 504h3v1h-3zM195 504h3v1h-3zM226 504h3v1h-3zM255 504h3v1h-3zM285 504h3v1h-3zM314 504h3v1h-3zM343 504h3v1h-3zM373 504h3v1h-3zM402 504h3v1h-3zM432 504h3v1h-3zM461 504h3v1h-3zM492 504h2v1h-2zM519 504h3v1h-3zM552 504h2v1h-2zM578 504h3v1h-3zM610 504h1v1h-1zM612 504h1v1h-1zM638 504h3v1h-3zM669 504h2v1h-2zM697 504h3v1h-3zM727 504h3v1h-3zM18 514h3v1h-3zM49 514h2v1h-2zM77 514h3v1h-3zM108 514h3v1h-3zM136 514h3v1h-3zM167 514h3v1h-3zM195 514h3v1h-3zM226 514h3v1h-3zM255 514h3v1h-3zM285 514h3v1h-3zM314 514h3v1h-3zM343 514h3v1h-3zM373 514h3v1h-3zM402 514h3v1h-3zM432 514h3v1h-3zM461 514h3v1h-3zM492 514h2v1h-2zM519 514h3v1h-3zM552 514h2v1h-2zM578 514h3v1h-3zM610 514h1v1h-1zM612 514h1v1h-1zM638 514h3v1h-3zM669 514h2v1h-2zM697 514h3v1h-3zM727 514h3v1h-3zM20 109h10v2h-10zM524 109h6v2h-6zM20 404h11v2h-11zM32 404h19v2h-19zM52 404h19v2h-19zM72 404h10v2h-10zM24 130h7v2h-7zM532 130h8v2h-8zM30 108h1v2h-1zM32 108h6v2h-6zM516 108h8v2h-8zM32 129h8v3h-8zM526 129h5v3h-5zM38 107h12v2h-12zM508 107h3v2h-3zM512 107h4v2h-4zM40 128h10v2h-10zM518 128h8v2h-8zM50 105h1v3h-1zM52 105h10v3h-10zM504 105h4v3h-4zM50 127h1v2h-1zM52 127h6v2h-6zM510 127h1v2h-1zM512 127h6v2h-6zM51 0h1v8h-1zM491 0h1v8h-1zM551 0h1v8h-1zM611 0h1v8h-1zM671 0h1v8h-1zM51 17h1v488h-1zM491 17h1v488h-1zM551 17h1v488h-1zM611 17h1v488h-1zM671 17h1v488h-1zM51 514h1v6h-1zM491 514h1v6h-1zM551 514h1v6h-1zM611 514h1v6h-1zM671 514h1v6h-1zM58 126h12v2h-12zM504 126h6v2h-6zM62 105h9v2h-9zM72 105h4v2h-4zM494 105h6v2h-6zM70 125h1v2h-1zM72 125h10v2h-10zM496 125h8v2h-8zM76 104h15v2h-15zM92 104h4v2h-4zM486 104h5v2h-5zM492 104h2v2h-2zM82 124h9v2h-9zM92 124h8v2h-8zM488 124h3v2h-3zM492 124h4v2h-4zM88 385h3v2h-3zM92 385h6v2h-6zM716 385h12v2h-12zM96 103h15v3h-15zM112 103h2v3h-2zM120 103h11v3h-11zM132 103h6v3h-6zM144 103h7v3h-7zM152 103h10v3h-10zM168 103h3v3h-3zM172 103h14v3h-14zM192 103h18v3h-18zM216 103h15v3h-15zM232 103h2v3h-2zM480 103h6v3h-6zM98 386h12v2h-12zM708 386h3v2h-3zM712 386h4v2h-4zM100 123h11v2h-11zM112 123h19v2h-19zM132 123h2v2h-2zM172 123h19v2h-19zM192 123h19v2h-19zM212 123h19v2h-19zM232 123h19v2h-19zM252 123h8v2h-8zM478 123h10v2h-10zM110 387h1v2h-1zM112 387h6v2h-6zM698 387h10v2h-10zM110 407h1v2h-1zM112 407h8v2h-8zM714 407h10v2h-10zM111 0h1v9h-1zM171 0h1v9h-1zM371 0h1v9h-1zM431 0h1v9h-1zM111 16h1v490h-1zM171 16h1v490h-1zM371 16h1v490h-1zM431 16h1v490h-1zM111 513h1v7h-1zM171 513h1v7h-1zM371 513h1v7h-1zM431 513h1v7h-1zM114 103h6v2h-6zM138 103h6v2h-6zM162 103h6v2h-6zM186 103h5v2h-5zM210 103h1v2h-1zM212 103h4v2h-4zM234 103h6v2h-6zM478 103h2v2h-2zM118 388h8v2h-8zM690 388h1v2h-1zM692 388h6v2h-6zM120 408h8v2h-8zM704 408h7v2h-7zM712 408h2v2h-2zM126 389h5v3h-5zM132 389h4v3h-4zM682 389h8v3h-8zM128 409h3v2h-3zM132 409h6v2h-6zM696 409h8v2h-8zM134 122h17v2h-17zM152 122h19v2h-19zM260 122h11v2h-11zM272 122h18v2h-18zM468 122h3v2h-3zM472 122h6v2h-6zM136 390h8v2h-8zM674 390h8v2h-8zM138 410h8v2h-8zM688 410h3v2h-3zM692 410h4v2h-4zM144 391h7v2h-7zM666 391h5v2h-5zM672 391h2v2h-2zM146 411h5v2h-5zM152 411h2v2h-2zM678 411h10v2h-10zM152 391h8v3h-8zM658 391h8v3h-8zM154 412h8v2h-8zM670 412h1v2h-1zM672 412h6v2h-6zM160 393h8v2h-8zM648 393h3v2h-3zM652 393h6v2h-6zM162 413h8v2h-8zM660 413h10v2h-10zM168 394h3v2h-3zM172 394h4v2h-4zM640 394h8v2h-8zM170 414h1v2h-1zM172 414h6v2h-6zM650 414h1v2h-1zM652 414h8v2h-8zM176 395h8v2h-8zM628 395h3v2h-3zM632 395h8v2h-8zM178 415h8v3h-8zM640 415h2v3h-2zM648 415h2v3h-2zM184 396h7v2h-7zM616 396h12v2h-12zM186 416h5v2h-5zM192 416h2v2h-2zM626 416h5v2h-5zM632 416h8v2h-8zM192 397h10v2h-10zM414 397h17v2h-17zM432 397h19v2h-19zM452 397h19v2h-19zM472 397h2v2h-2zM602 397h9v2h-9zM612 397h4v2h-4zM194 417h10v2h-10zM442 417h9v2h-9zM452 417h19v2h-19zM472 417h12v2h-12zM610 417h1v2h-1zM612 417h14v2h-14zM202 398h9v2h-9zM382 398h9v2h-9zM392 398h19v2h-19zM412 398h2v2h-2zM474 398h17v2h-17zM492 398h19v2h-19zM512 398h10v2h-10zM578 398h13v2h-13zM592 398h10v2h-10zM204 417h6v3h-6zM408 417h3v3h-3zM412 417h14v3h-14zM432 417h10v3h-10zM484 417h7v3h-7zM492 417h6v3h-6zM504 417h7v3h-7zM512 417h10v3h-10zM528 417h3v3h-3zM532 417h14v3h-14zM576 417h15v3h-15zM592 417h2v3h-2zM600 417h10v3h-10zM210 418h1v2h-1zM406 418h2v2h-2zM426 418h5v2h-5zM498 418h6v2h-6zM522 418h6v2h-6zM594 418h6v2h-6zM212 399h12v2h-12zM360 399h11v2h-11zM372 399h10v2h-10zM522 399h9v2h-9zM532 399h19v2h-19zM552 399h19v2h-19zM572 399h6v2h-6zM212 419h10v2h-10zM384 419h7v2h-7zM392 419h14v2h-14zM546 419h5v2h-5zM552 419h19v2h-19zM572 419h4v2h-4zM222 420h9v2h-9zM232 420h2v2h-2zM366 420h5v2h-5zM372 420h12v2h-12zM224 400h7v2h-7zM232 400h4v2h-4zM340 400h11v2h-11zM352 400h8v2h-8zM231 0h1v11h-1zM311 0h1v11h-1zM231 14h1v494h-1zM311 14h1v494h-1zM231 511h1v9h-1zM311 511h1v9h-1zM234 421h14v2h-14zM346 421h5v2h-5zM352 421h14v2h-14zM236 401h15v2h-15zM252 401h4v2h-4zM316 401h15v2h-15zM332 401h8v2h-8zM240 102h11v2h-11zM252 102h18v2h-18zM468 102h3v2h-3zM472 102h6v2h-6zM248 422h3v2h-3zM252 422h16v2h-16zM324 422h7v2h-7zM332 422h14v2h-14zM256 402h15v2h-15zM272 402h19v2h-19zM292 402h19v2h-19zM312 402h4v2h-4zM268 423h3v2h-3zM272 423h19v2h-19zM292 423h19v2h-19zM312 423h12v2h-12zM270 101h1v2h-1zM272 101h18v2h-18zM460 101h8v2h-8zM290 100h1v2h-1zM292 100h16v2h-16zM448 100h3v2h-3zM452 100h8v2h-8zM290 121h1v2h-1zM292 121h19v2h-19zM458 121h10v2h-10zM308 99h3v2h-3zM312 99h14v2h-14zM436 99h12v2h-12zM312 120h19v2h-19zM446 120h5v2h-5zM452 120h6v2h-6zM326 98h5v2h-5zM332 98h14v2h-14zM420 98h11v2h-11zM432 98h4v2h-4zM332 119h19v2h-19zM352 119h2v2h-2zM430 119h1v2h-1zM432 119h14v2h-14zM628 119h3v2h-3zM632 119h18v2h-18zM346 97h5v2h-5zM352 97h19v2h-19zM372 97h19v2h-19zM392 97h19v2h-19zM412 97h8v2h-8zM354 118h17v2h-17zM372 118h19v2h-19zM392 118h19v2h-19zM412 118h18v2h-18zM604 118h7v2h-7zM612 118h16v2h-16zM650 118h1v2h-1zM652 118h19v2h-19zM672 118h2v2h-2zM500 106h4v2h-4zM554 113h8v2h-8zM716 113h10v2h-10zM562 114h8v2h-8zM708 114h3v2h-3zM712 114h4v2h-4zM562 134h9v2h-9zM722 134h8v2h-8zM570 115h1v2h-1zM572 115h8v2h-8zM698 115h10v2h-10zM572 135h8v2h-8zM714 135h8v2h-8zM580 116h10v2h-10zM686 116h5v2h-5zM692 116h6v2h-6zM580 136h10v2h-10zM706 136h5v2h-5zM712 136h2v2h-2zM590 117h1v2h-1zM592 117h12v2h-12zM674 117h12v2h-12zM590 137h1v2h-1zM592 137h8v2h-8zM694 137h12v2h-12zM600 138h11v2h-11zM682 138h9v2h-9zM692 138h2v2h-2zM612 139h19v2h-19zM632 139h2v2h-2zM662 139h9v2h-9zM672 139h10v2h-10zM634 140h17v2h-17zM652 140h10v2h-10zM642 415h6v2h-6z"/>
<path fill="#0080c0" d="M0 114h1v17h-1zM2 114h1v17h-1zM546 114h1v17h-1zM548 114h1v17h-1zM550 114h1v17h-1zM552 114h2v17h-2zM726 114h1v17h-1zM728 114h1v17h-1zM0 132h1v1h-1zM2 132h1v1h-1zM4 132h1v1h-1zM6 132h1v1h-1zM556 132h6v1h-6zM579 132h1v1h-1zM0 386h11v5h-11zM72 386h11v5h-11zM84 386h1v5h-1zM86 386h1v5h-1zM728 386h2v5h-2zM0 392h6v14h-6zM98 392h1v14h-1zM100 392h1v14h-1zM102 392h1v14h-1zM104 392h1v14h-1zM106 392h1v14h-1zM108 392h1v14h-1zM707 392h1v14h-1zM724 392h6v14h-6zM4 113h1v18h-1zM6 113h1v18h-1zM8 113h1v18h-1zM10 113h1v18h-1zM540 113h1v18h-1zM542 113h1v18h-1zM544 113h1v18h-1zM6 392h5v13h-5zM12 392h8v13h-8zM82 392h1v13h-1zM84 392h1v13h-1zM86 392h1v13h-1zM88 392h1v13h-1zM90 392h1v13h-1zM92 392h1v13h-1zM94 392h1v13h-1zM96 392h1v13h-1zM12 112h1v19h-1zM14 112h1v19h-1zM16 112h1v19h-1zM18 112h1v19h-1zM12 385h11v6h-11zM24 385h1v6h-1zM26 385h1v6h-1zM28 385h1v6h-1zM30 385h1v6h-1zM32 385h1v6h-1zM34 385h1v6h-1zM36 385h1v6h-1zM38 385h1v6h-1zM40 385h1v6h-1zM42 385h1v6h-1zM44 385h1v6h-1zM46 385h1v6h-1zM48 385h1v6h-1zM50 385h1v6h-1zM52 385h1v6h-1zM54 385h17v6h-17zM20 111h1v20h-1zM22 111h1v20h-1zM20 392h3v12h-3zM24 392h1v12h-1zM26 392h1v12h-1zM28 392h1v12h-1zM30 392h1v12h-1zM32 392h1v12h-1zM34 392h1v12h-1zM36 392h1v12h-1zM38 392h1v12h-1zM40 392h1v12h-1zM42 392h1v12h-1zM44 392h1v12h-1zM46 392h1v12h-1zM48 392h1v12h-1zM50 392h1v12h-1zM52 392h1v12h-1zM54 392h17v12h-17zM72 392h9v12h-9zM705 392h1v12h-1zM23 385h1v4h-1zM24 111h1v19h-1zM26 111h1v19h-1zM28 111h1v19h-1zM30 110h1v20h-1zM32 110h1v19h-1zM34 110h1v19h-1zM36 110h1v19h-1zM38 109h1v20h-1zM40 109h1v19h-1zM42 109h1v19h-1zM44 109h1v19h-1zM46 109h1v19h-1zM48 109h1v19h-1zM50 108h1v19h-1zM52 108h1v19h-1zM54 108h1v19h-1zM56 108h1v19h-1zM53 397h1v7h-1zM58 108h1v18h-1zM60 108h1v18h-1zM504 108h4v18h-4zM62 107h1v19h-1zM64 107h1v19h-1zM66 107h1v19h-1zM68 107h1v19h-1zM70 107h1v18h-1zM72 107h1v18h-1zM74 107h1v18h-1zM496 107h4v18h-4zM76 106h1v19h-1zM78 106h1v19h-1zM80 106h1v19h-1zM81 392h1v11h-1zM703 392h1v11h-1zM82 106h1v18h-1zM84 106h1v18h-1zM86 106h1v18h-1zM88 106h1v18h-1zM90 106h1v18h-1zM92 106h1v18h-1zM94 106h1v18h-1zM96 106h1v18h-1zM98 106h1v18h-1zM488 106h1v18h-1zM490 106h1v18h-1zM492 106h1v18h-1zM88 387h1v4h-1zM90 387h1v4h-1zM92 387h1v4h-1zM94 387h1v4h-1zM96 387h1v4h-1zM716 387h12v4h-12zM98 388h1v3h-1zM100 388h1v3h-1zM102 388h1v3h-1zM104 388h1v3h-1zM106 388h1v3h-1zM108 388h1v3h-1zM708 388h3v3h-3zM712 388h4v3h-4zM100 106h1v17h-1zM102 106h1v17h-1zM104 106h1v17h-1zM106 106h1v17h-1zM108 106h1v17h-1zM110 106h1v17h-1zM112 106h1v17h-1zM120 106h1v17h-1zM122 106h1v17h-1zM124 106h1v17h-1zM126 106h1v17h-1zM128 106h1v17h-1zM130 106h1v17h-1zM132 106h1v17h-1zM172 106h1v17h-1zM174 106h1v17h-1zM176 106h1v17h-1zM178 106h1v17h-1zM180 106h1v17h-1zM182 106h1v17h-1zM184 106h1v17h-1zM192 106h1v17h-1zM194 106h1v17h-1zM196 106h1v17h-1zM198 106h1v17h-1zM200 106h1v17h-1zM202 106h1v17h-1zM204 106h1v17h-1zM206 106h1v17h-1zM208 106h1v17h-1zM216 106h1v17h-1zM218 106h1v17h-1zM220 106h1v17h-1zM222 106h1v17h-1zM224 106h1v17h-1zM226 106h1v17h-1zM228 106h1v17h-1zM230 106h1v17h-1zM232 106h1v17h-1zM240 106h1v17h-1zM242 106h1v17h-1zM244 106h1v17h-1zM246 106h1v17h-1zM248 106h1v17h-1zM250 106h1v17h-1zM252 106h1v17h-1zM254 106h1v17h-1zM256 106h1v17h-1zM480 106h1v17h-1zM482 106h1v17h-1zM484 106h1v17h-1zM486 106h1v17h-1zM110 389h1v2h-1zM112 389h1v2h-1zM114 389h4v2h-4zM698 389h1v2h-1zM700 389h1v2h-1zM702 389h6v2h-6zM110 392h1v15h-1zM112 392h1v15h-1zM114 392h6v15h-6zM709 392h1v15h-1zM714 392h10v15h-10zM113 395h1v12h-1zM114 105h1v18h-1zM116 105h1v18h-1zM118 105h1v18h-1zM186 105h1v18h-1zM188 105h1v18h-1zM190 105h1v18h-1zM210 105h1v18h-1zM212 105h1v18h-1zM214 105h1v18h-1zM234 105h1v18h-1zM236 105h1v18h-1zM238 105h1v18h-1zM478 105h1v18h-1zM118 390h8v1h-8zM690 390h1v1h-1zM692 390h1v1h-1zM694 390h1v1h-1zM696 390h1v1h-1zM120 392h8v16h-8zM704 392h1v16h-1zM706 392h1v16h-1zM708 392h1v16h-1zM710 392h1v16h-1zM712 392h2v16h-2zM128 392h3v17h-3zM132 392h6v17h-6zM696 392h1v17h-1zM698 392h1v17h-1zM700 392h1v17h-1zM702 392h1v17h-1zM134 106h1v16h-1zM136 106h1v16h-1zM144 106h1v16h-1zM146 106h1v16h-1zM148 106h1v16h-1zM150 106h1v16h-1zM152 106h1v16h-1zM154 106h1v16h-1zM156 106h1v16h-1zM158 106h1v16h-1zM160 106h1v16h-1zM168 106h1v16h-1zM170 106h1v16h-1zM264 106h1v16h-1zM266 106h1v16h-1zM268 106h1v16h-1zM270 106h1v16h-1zM272 106h1v16h-1zM274 106h1v16h-1zM276 106h1v16h-1zM278 106h1v16h-1zM280 106h1v16h-1zM288 106h1v16h-1zM468 106h1v16h-1zM470 106h1v16h-1zM472 106h1v16h-1zM138 105h1v17h-1zM140 105h1v17h-1zM142 105h1v17h-1zM162 105h1v17h-1zM164 105h1v17h-1zM166 105h1v17h-1zM138 392h3v18h-3zM142 392h1v18h-1zM688 392h1v18h-1zM690 392h1v18h-1zM692 392h1v18h-1zM694 392h1v18h-1zM141 392h1v8h-1zM144 393h1v17h-1zM146 393h1v18h-1zM148 393h1v18h-1zM150 393h1v18h-1zM152 394h1v17h-1zM154 394h1v18h-1zM156 394h1v18h-1zM158 394h1v18h-1zM160 395h1v17h-1zM162 395h1v18h-1zM164 395h1v18h-1zM166 395h1v18h-1zM168 396h1v17h-1zM170 396h1v18h-1zM172 396h4v18h-4zM176 397h2v17h-2zM178 397h6v18h-6zM184 398h2v17h-2zM186 398h5v18h-5zM626 398h1v18h-1zM192 399h2v17h-2zM194 399h7v18h-7zM414 399h1v18h-1zM416 399h1v18h-1zM418 399h1v18h-1zM420 399h1v18h-1zM422 399h1v18h-1zM424 399h1v18h-1zM432 399h1v18h-1zM434 399h1v18h-1zM436 399h1v18h-1zM438 399h1v18h-1zM440 399h1v18h-1zM442 399h1v18h-1zM444 399h1v18h-1zM446 399h1v18h-1zM448 399h1v18h-1zM450 399h1v18h-1zM452 399h1v18h-1zM454 399h1v18h-1zM456 399h1v18h-1zM458 399h1v18h-1zM460 399h1v18h-1zM462 399h1v18h-1zM464 399h1v18h-1zM466 399h1v18h-1zM468 399h1v18h-1zM470 399h1v18h-1zM472 399h1v18h-1zM602 399h1v18h-1zM604 399h1v18h-1zM606 399h1v18h-1zM608 399h1v18h-1zM610 399h1v18h-1zM612 399h1v18h-1zM614 399h1v18h-1zM202 400h1v17h-1zM204 400h1v17h-1zM206 400h1v17h-1zM208 400h1v17h-1zM384 400h1v17h-1zM386 400h1v17h-1zM388 400h1v17h-1zM390 400h1v17h-1zM392 400h1v17h-1zM394 400h1v17h-1zM396 400h1v17h-1zM398 400h1v17h-1zM400 400h1v17h-1zM408 400h1v17h-1zM410 400h1v17h-1zM412 400h1v17h-1zM474 400h1v17h-1zM476 400h1v17h-1zM478 400h1v17h-1zM480 400h1v17h-1zM482 400h1v17h-1zM484 400h1v17h-1zM486 400h1v17h-1zM488 400h1v17h-1zM490 400h1v17h-1zM492 400h1v17h-1zM494 400h1v17h-1zM496 400h1v17h-1zM504 400h1v17h-1zM506 400h1v17h-1zM508 400h1v17h-1zM510 400h1v17h-1zM512 400h1v17h-1zM514 400h1v17h-1zM516 400h1v17h-1zM518 400h1v17h-1zM520 400h1v17h-1zM578 400h1v17h-1zM580 400h1v17h-1zM582 400h1v17h-1zM584 400h1v17h-1zM586 400h1v17h-1zM588 400h1v17h-1zM590 400h1v17h-1zM592 400h1v17h-1zM600 400h1v17h-1zM210 400h1v18h-1zM406 400h1v18h-1zM498 400h1v18h-1zM500 400h1v18h-1zM502 400h1v18h-1zM594 400h1v18h-1zM596 400h1v18h-1zM598 400h1v18h-1zM212 401h1v18h-1zM214 401h1v18h-1zM546 401h1v18h-1zM548 401h1v18h-1zM550 401h1v18h-1zM570 401h1v18h-1zM572 401h1v18h-1zM574 401h1v18h-1zM216 401h1v16h-1zM218 401h1v16h-1zM220 401h1v16h-1zM222 401h1v16h-1zM360 401h1v16h-1zM362 401h1v16h-1zM364 401h1v16h-1zM366 401h1v16h-1zM368 401h1v16h-1zM370 401h1v16h-1zM372 401h1v16h-1zM374 401h1v16h-1zM376 401h1v16h-1zM528 401h1v16h-1zM530 401h1v16h-1zM532 401h1v16h-1zM534 401h1v16h-1zM536 401h1v16h-1zM538 401h1v16h-1zM540 401h1v16h-1zM542 401h1v16h-1zM544 401h1v16h-1zM552 401h1v16h-1zM554 401h1v16h-1zM556 401h1v16h-1zM558 401h1v16h-1zM560 401h1v16h-1zM562 401h1v16h-1zM564 401h1v16h-1zM566 401h1v16h-1zM568 401h1v16h-1zM576 401h1v16h-1zM216 418h1v1h-1zM218 418h1v1h-1zM220 418h1v1h-1zM384 418h1v1h-1zM386 418h1v1h-1zM388 418h1v1h-1zM390 418h1v1h-1zM392 418h1v1h-1zM394 418h1v1h-1zM396 418h1v1h-1zM398 418h1v1h-1zM400 418h1v1h-1zM552 418h1v1h-1zM554 418h1v1h-1zM556 418h1v1h-1zM558 418h1v1h-1zM560 418h1v1h-1zM562 418h1v1h-1zM564 418h1v1h-1zM566 418h1v1h-1zM568 418h1v1h-1zM222 418h1v2h-1zM224 418h1v2h-1zM226 418h1v2h-1zM228 418h1v2h-1zM230 418h1v2h-1zM232 418h2v2h-2zM366 418h1v2h-1zM368 418h1v2h-1zM370 418h1v2h-1zM372 418h1v2h-1zM374 418h1v2h-1zM376 418h1v2h-1zM224 402h1v15h-1zM226 402h1v15h-1zM228 402h1v15h-1zM230 402h1v15h-1zM232 402h2v15h-2zM340 402h1v15h-1zM342 402h1v15h-1zM344 402h1v15h-1zM346 402h1v15h-1zM348 402h1v15h-1zM350 402h1v15h-1zM352 402h1v15h-1zM234 402h2v19h-2zM354 402h1v19h-1zM356 402h1v19h-1zM358 402h1v19h-1zM236 403h4v18h-4zM240 104h1v1h-1zM242 104h1v1h-1zM244 104h1v1h-1zM246 104h1v1h-1zM248 104h1v1h-1zM250 104h1v1h-1zM252 104h1v1h-1zM254 104h1v1h-1zM256 104h1v1h-1zM264 104h1v1h-1zM266 104h1v1h-1zM268 104h1v1h-1zM468 104h1v1h-1zM470 104h1v1h-1zM472 104h1v1h-1zM240 403h11v14h-11zM252 403h4v14h-4zM316 403h1v14h-1zM318 403h1v14h-1zM320 403h1v14h-1zM322 403h1v14h-1zM324 403h1v14h-1zM326 403h1v14h-1zM328 403h1v14h-1zM336 403h1v14h-1zM338 403h1v14h-1zM240 418h8v3h-8zM346 418h1v3h-1zM348 418h1v3h-1zM350 418h1v3h-1zM352 418h1v3h-1zM360 418h1v3h-1zM362 418h1v3h-1zM364 418h1v3h-1zM248 418h3v4h-3zM252 418h6v4h-6zM264 418h1v4h-1zM266 418h1v4h-1zM324 418h1v4h-1zM326 418h1v4h-1zM328 418h1v4h-1zM336 418h1v4h-1zM338 418h1v4h-1zM340 418h1v4h-1zM342 418h1v4h-1zM344 418h1v4h-1zM256 404h2v13h-2zM264 404h1v13h-1zM266 404h1v13h-1zM268 404h1v13h-1zM270 404h1v13h-1zM272 404h1v13h-1zM274 404h1v13h-1zM276 404h1v13h-1zM278 404h1v13h-1zM280 404h1v13h-1zM288 404h1v13h-1zM290 404h1v13h-1zM292 404h9v13h-9zM302 404h1v13h-1zM304 404h1v13h-1zM312 404h1v13h-1zM314 404h1v13h-1zM258 104h1v19h-1zM258 404h1v18h-1zM260 404h1v18h-1zM262 404h1v18h-1zM259 404h1v8h-1zM260 104h1v18h-1zM262 104h1v18h-1zM474 104h1v18h-1zM476 104h1v18h-1zM268 418h1v5h-1zM270 418h1v5h-1zM272 418h1v5h-1zM274 418h1v5h-1zM276 418h1v5h-1zM278 418h1v5h-1zM280 418h1v5h-1zM288 418h3v5h-3zM292 418h14v5h-14zM312 418h3v5h-3zM316 418h1v5h-1zM318 418h1v5h-1zM320 418h1v5h-1zM322 418h1v5h-1zM270 103h1v2h-1zM272 103h1v2h-1zM274 103h1v2h-1zM276 103h1v2h-1zM278 103h1v2h-1zM280 103h1v2h-1zM288 103h1v2h-1zM460 103h3v2h-3zM464 103h1v2h-1zM466 103h1v2h-1zM282 103h1v19h-1zM284 103h1v19h-1zM286 103h1v19h-1zM282 404h1v19h-1zM284 404h1v19h-1zM286 404h1v19h-1zM306 404h1v19h-1zM308 404h1v19h-1zM310 404h1v19h-1zM289 407h1v10h-1zM290 102h1v3h-1zM292 102h1v3h-1zM294 102h1v3h-1zM296 102h1v3h-1zM298 102h1v3h-1zM300 102h1v3h-1zM302 102h1v3h-1zM304 102h1v3h-1zM448 102h2v3h-2zM456 102h4v3h-4zM290 106h1v15h-1zM292 106h1v15h-1zM294 106h1v15h-1zM296 106h1v15h-1zM298 106h1v15h-1zM300 106h1v15h-1zM302 106h1v15h-1zM304 106h1v15h-1zM458 106h5v15h-5zM464 106h1v15h-1zM466 106h1v15h-1zM301 406h1v11h-1zM303 408h1v9h-1zM305 410h1v7h-1zM306 102h1v19h-1zM307 412h1v11h-1zM308 101h1v20h-1zM310 101h1v20h-1zM309 414h1v9h-1zM312 101h1v4h-1zM314 101h1v4h-1zM316 101h1v4h-1zM318 101h1v4h-1zM320 101h1v4h-1zM322 101h1v4h-1zM324 101h1v4h-1zM436 101h12v4h-12zM312 106h1v14h-1zM314 106h1v14h-1zM316 106h1v14h-1zM318 106h1v14h-1zM320 106h1v14h-1zM322 106h1v14h-1zM324 106h1v14h-1zM326 106h1v14h-1zM328 106h1v14h-1zM446 106h4v14h-4zM456 106h2v14h-2zM315 421h1v2h-1zM326 100h1v5h-1zM328 100h2v5h-2zM336 100h10v5h-10zM420 100h1v5h-1zM422 100h1v5h-1zM424 100h1v5h-1zM432 100h1v5h-1zM434 100h2v5h-2zM327 100h1v3h-1zM330 100h1v20h-1zM330 403h1v19h-1zM332 403h1v19h-1zM334 403h1v19h-1zM332 100h1v19h-1zM334 100h1v19h-1zM430 100h1v19h-1zM333 100h1v10h-1zM335 100h1v12h-1zM336 106h1v13h-1zM338 106h1v13h-1zM340 106h1v13h-1zM342 106h3v13h-3zM346 106h1v13h-1zM348 106h1v13h-1zM350 106h1v13h-1zM352 106h1v13h-1zM432 106h1v13h-1zM434 106h12v13h-12zM337 106h1v8h-1zM339 106h1v10h-1zM341 106h1v12h-1zM360 106h1v12h-1zM362 106h1v12h-1zM364 106h1v12h-1zM366 106h1v12h-1zM368 106h1v12h-1zM370 106h1v12h-1zM372 106h1v12h-1zM374 106h4v12h-4zM384 106h7v12h-7zM392 106h10v12h-10zM408 106h1v12h-1zM410 106h1v12h-1zM412 106h1v12h-1zM414 106h1v12h-1zM416 106h1v12h-1zM418 106h1v12h-1zM420 106h1v12h-1zM422 106h1v12h-1zM424 106h1v12h-1zM346 99h1v6h-1zM348 99h1v6h-1zM350 99h1v6h-1zM352 99h1v6h-1zM360 99h1v6h-1zM362 99h1v6h-1zM364 99h1v6h-1zM366 99h1v6h-1zM368 99h1v6h-1zM370 99h1v6h-1zM372 99h1v6h-1zM374 99h4v6h-4zM384 99h7v6h-7zM392 99h10v6h-10zM408 99h1v6h-1zM410 99h1v6h-1zM412 99h1v6h-1zM414 99h1v6h-1zM416 99h1v6h-1zM418 99h1v6h-1zM354 99h1v19h-1zM356 99h1v19h-1zM358 99h1v19h-1zM378 99h6v19h-6zM402 99h1v19h-1zM404 99h1v19h-1zM406 99h1v19h-1zM378 401h1v19h-1zM380 401h1v19h-1zM382 400h1v20h-1zM402 400h1v19h-1zM404 400h1v19h-1zM403 99h1v15h-1zM426 100h1v18h-1zM428 100h1v18h-1zM426 399h1v19h-1zM428 399h1v19h-1zM430 399h1v19h-1zM433 112h1v7h-1zM450 102h1v18h-1zM452 102h4v18h-4zM493 111h1v13h-1zM494 107h2v17h-2zM500 108h4v17h-4zM508 109h2v17h-2zM510 109h1v18h-1zM512 109h4v18h-4zM516 110h2v17h-2zM518 110h3v18h-3zM522 110h1v18h-1zM521 110h1v8h-1zM522 401h1v17h-1zM524 401h1v17h-1zM526 401h1v17h-1zM524 111h1v17h-1zM526 111h1v18h-1zM528 111h1v18h-1zM530 112h1v17h-1zM532 112h1v18h-1zM534 112h1v18h-1zM536 112h1v18h-1zM538 113h1v17h-1zM554 115h8v16h-8zM716 115h1v16h-1zM718 115h1v16h-1zM720 115h1v16h-1zM722 115h1v16h-1zM724 115h1v16h-1zM562 116h8v15h-8zM708 116h1v15h-1zM710 116h1v15h-1zM712 116h1v15h-1zM714 116h1v15h-1zM562 132h9v2h-9zM722 132h1v2h-1zM724 132h1v2h-1zM726 132h1v2h-1zM728 132h2v2h-2zM570 117h1v14h-1zM572 117h8v14h-8zM698 117h1v14h-1zM700 117h1v14h-1zM702 117h1v14h-1zM704 117h1v14h-1zM706 117h1v14h-1zM572 132h7v3h-7zM714 132h1v3h-1zM716 132h1v3h-1zM718 132h1v3h-1zM720 132h1v3h-1zM580 118h1v13h-1zM582 118h1v13h-1zM584 118h1v13h-1zM586 118h1v13h-1zM588 118h1v13h-1zM686 118h5v13h-5zM692 118h6v13h-6zM580 132h1v4h-1zM582 132h1v4h-1zM584 132h1v4h-1zM586 132h1v4h-1zM588 132h1v4h-1zM706 132h1v4h-1zM708 132h1v4h-1zM710 132h1v4h-1zM712 132h1v4h-1zM590 119h1v12h-1zM592 119h1v12h-1zM594 119h1v12h-1zM596 119h1v12h-1zM598 119h1v12h-1zM600 119h1v12h-1zM602 119h1v12h-1zM674 119h12v12h-12zM590 132h1v5h-1zM592 132h1v5h-1zM594 132h1v5h-1zM596 132h1v5h-1zM598 132h1v5h-1zM694 132h5v5h-5zM700 132h1v5h-1zM702 132h1v5h-1zM704 132h1v5h-1zM600 132h1v6h-1zM602 132h1v6h-1zM604 132h1v6h-1zM606 132h1v6h-1zM608 132h1v6h-1zM610 132h1v6h-1zM682 132h9v6h-9zM692 132h2v6h-2zM604 120h1v11h-1zM606 120h1v11h-1zM608 120h1v11h-1zM610 120h1v11h-1zM612 120h16v11h-16zM650 120h1v11h-1zM652 120h1v11h-1zM654 120h1v11h-1zM656 120h1v11h-1zM658 120h1v11h-1zM660 120h1v11h-1zM662 120h1v11h-1zM664 120h1v11h-1zM666 120h1v11h-1zM668 120h1v11h-1zM670 120h1v11h-1zM672 120h2v11h-2zM612 132h19v7h-19zM632 132h2v7h-2zM662 132h1v7h-1zM664 132h1v7h-1zM666 132h1v7h-1zM668 132h1v7h-1zM670 132h1v7h-1zM672 132h10v7h-10zM616 398h1v19h-1zM618 398h1v19h-1zM620 398h1v19h-1zM622 398h1v19h-1zM624 398h1v19h-1zM628 121h3v10h-3zM632 121h7v10h-7zM640 121h1v10h-1zM642 121h1v10h-1zM644 121h1v10h-1zM646 121h1v10h-1zM648 121h1v10h-1zM628 397h1v19h-1zM630 397h1v19h-1zM632 397h1v19h-1zM634 397h1v19h-1zM636 397h1v19h-1zM638 397h1v19h-1zM634 132h5v8h-5zM640 132h1v8h-1zM642 132h1v8h-1zM644 132h1v8h-1zM646 132h1v8h-1zM648 132h1v8h-1zM650 132h1v8h-1zM652 132h1v8h-1zM654 132h1v8h-1zM656 132h1v8h-1zM658 132h1v8h-1zM660 132h1v8h-1zM639 121h1v6h-1zM640 396h1v19h-1zM642 396h1v19h-1zM644 396h1v19h-1zM646 396h1v19h-1zM648 395h1v20h-1zM650 395h1v19h-1zM652 395h1v19h-1zM654 395h1v19h-1zM656 395h1v19h-1zM658 394h1v20h-1zM660 394h1v19h-1zM662 394h1v19h-1zM664 394h1v19h-1zM666 393h1v20h-1zM668 393h1v20h-1zM669 134h1v5h-1zM670 393h1v19h-1zM672 393h1v19h-1zM674 392h1v20h-1zM676 392h1v20h-1zM678 392h1v19h-1zM680 392h1v19h-1zM682 392h1v19h-1zM684 392h1v19h-1zM686 392h1v19h-1zM699 117h1v1h-1zM729 126h1v5h-1z"/>
<path fill="#000040" d="M0 135h1v22h-1zM2 135h1v22h-1zM4 135h1v22h-1zM6 135h1v22h-1zM556 135h6v22h-6zM0 158h1v25h-1zM2 158h1v25h-1zM4 158h1v25h-1zM6 158h1v25h-1zM8 158h1v25h-1zM10 158h1v25h-1zM12 158h1v25h-1zM14 158h1v25h-1zM16 158h1v25h-1zM18 158h1v25h-1zM20 158h1v25h-1zM22 158h1v25h-1zM24 158h1v25h-1zM26 158h1v25h-1zM28 158h1v25h-1zM30 158h1v25h-1zM32 158h1v25h-1zM34 158h1v25h-1zM36 158h1v25h-1zM38 158h1v25h-1zM40 158h1v25h-1zM42 158h1v25h-1zM44 158h1v25h-1zM46 158h1v25h-1zM48 158h1v25h-1zM50 158h1v25h-1zM52 158h1v25h-1zM54 158h1v25h-1zM56 158h1v25h-1zM58 158h1v25h-1zM60 158h1v25h-1zM62 158h1v25h-1zM64 158h1v25h-1zM66 158h1v25h-1zM68 158h1v25h-1zM70 158h1v25h-1zM72 158h1v25h-1zM74 158h1v25h-1zM76 158h1v25h-1zM78 158h1v25h-1zM80 158h1v25h-1zM82 158h1v25h-1zM84 158h1v25h-1zM86 158h1v25h-1zM88 158h1v25h-1zM90 158h1v25h-1zM92 158h1v25h-1zM94 158h1v25h-1zM96 158h1v25h-1zM98 158h1v25h-1zM100 158h1v25h-1zM102 158h1v25h-1zM104 158h1v25h-1zM106 158h1v25h-1zM108 158h1v25h-1zM110 158h1v25h-1zM112 158h1v25h-1zM114 158h1v25h-1zM116 158h1v25h-1zM118 158h1v25h-1zM120 158h1v25h-1zM122 158h1v25h-1zM124 158h1v25h-1zM126 158h1v25h-1zM128 158h1v25h-1zM130 158h1v25h-1zM132 158h1v25h-1zM134 158h1v25h-1zM136 158h1v25h-1zM138 158h1v25h-1zM140 158h1v25h-1zM142 158h1v25h-1zM144 158h1v25h-1zM146 158h1v25h-1zM148 158h1v25h-1zM150 158h1v25h-1zM152 158h1v25h-1zM154 158h1v25h-1zM156 158h1v25h-1zM158 158h1v25h-1zM160 158h1v25h-1zM162 158h1v25h-1zM164 158h1v25h-1zM166 158h1v25h-1zM168 158h1v25h-1zM170 158h1v25h-1zM172 158h1v25h-1zM174 158h1v25h-1zM176 158h1v25h-1zM178 158h1v25h-1zM180 158h1v25h-1zM182 158h1v25h-1zM184 158h1v25h-1zM186 158h1v25h-1zM188 158h1v25h-1zM190 158h1v25h-1zM192 158h1v25h-1zM194 158h1v25h-1zM196 158h1v25h-1zM198 158h1v25h-1zM200 158h1v25h-1zM202 158h1v25h-1zM204 158h1v25h-1zM206 158h1v25h-1zM208 158h1v25h-1zM210 158h1v25h-1zM212 158h1v25h-1zM214 158h1v25h-1zM216 158h1v25h-1zM218 158h1v25h-1zM220 158h1v25h-1zM222 158h1v25h-1zM224 158h1v25h-1zM226 158h1v25h-1zM228 158h1v25h-1zM230 158h1v25h-1zM232 158h1v25h-1zM234 158h1v25h-1zM236 158h1v25h-1zM238 158h1v25h-1zM240 158h1v25h-1zM242 158h1v25h-1zM244 158h1v25h-1zM246 158h1v25h-1zM248 158h1v25h-1zM250 158h1v25h-1zM252 158h1v25h-1zM254 158h1v25h-1zM256 158h1v25h-1zM258 158h1v25h-1zM260 158h1v25h-1zM262 158h1v25h-1zM264 158h1v25h-1zM266 158h1v25h-1zM268 158h1v25h-1zM270 158h1v25h-1zM272 158h1v25h-1zM274 158h1v25h-1zM276 158h1v25h-1zM278 158h1v25h-1zM280 158h1v25h-1zM282 158h1v25h-1zM284 158h1v25h-1zM286 158h1v25h-1zM288 158h1v25h-1zM290 158h1v25h-1zM292 158h1v25h-1zM294 158h1v25h-1zM296 158h1v25h-1zM298 158h1v25h-1zM300 158h1v25h-1zM302 158h1v25h-1zM304 158h1v25h-1zM306 158h1v25h-1zM308 158h1v25h-1zM310 158h1v25h-1zM312 158h1v25h-1zM314 158h1v25h-1zM316 158h1v25h-1zM318 158h1v25h-1zM320 158h1v25h-1zM322 158h1v25h-1zM324 158h1v25h-1zM326 158h1v25h-1zM328 158h1v25h-1zM330 158h1v25h-1zM332 158h1v25h-1zM334 158h1v25h-1zM336 158h1v25h-1zM338 158h1v25h-1zM340 158h1v25h-1zM342 158h1v25h-1zM344 158h1v25h-1zM346 158h1v25h-1zM348 158h1v25h-1zM350 158h1v25h-1zM352 158h1v25h-1zM354 158h1v25h-1zM356 158h1v25h-1zM358 158h1v25h-1zM360 158h1v25h-1zM362 158h1v25h-1zM364 158h1v25h-1zM366 158h1v25h-1zM368 158h1v25h-1zM370 158h1v25h-1zM372 158h1v25h-1zM374 158h1v25h-1zM376 158h1v25h-1zM378 158h1v25h-1zM380 158h1v25h-1zM382 158h1v25h-1zM384 158h1v25h-1zM386 158h1v25h-1zM388 158h1v25h-1zM390 158h1v25h-1zM392 158h1v25h-1zM394 158h1v25h-1zM396 158h1v25h-1zM398 158h1v25h-1zM400 158h1v25h-1zM402 158h1v25h-1zM404 158h1v25h-1zM406 158h1v25h-1zM408 158h1v25h-1zM410 158h1v25h-1zM412 158h1v25h-1zM414 158h1v25h-1zM416 158h1v25h-1zM418 158h1v25h-1zM420 158h1v25h-1zM422 158h1v25h-1zM424 158h1v25h-1zM426 158h1v25h-1zM428 158h3v25h-3zM432 158h19v25h-19zM452 158h5v25h-5zM458 158h1v25h-1zM460 158h1v25h-1zM462 158h1v25h-1zM464 158h1v25h-1zM466 158h1v25h-1zM468 158h1v25h-1zM470 158h1v25h-1zM472 158h1v25h-1zM474 158h1v25h-1zM476 158h1v25h-1zM478 158h1v25h-1zM480 158h1v25h-1zM482 158h1v25h-1zM484 158h1v25h-1zM486 158h1v25h-1zM488 158h3v25h-3zM492 158h19v25h-19zM512 158h3v25h-3zM516 158h1v25h-1zM518 158h1v25h-1zM520 158h1v25h-1zM522 158h1v25h-1zM524 158h1v25h-1zM526 158h1v25h-1zM528 158h1v25h-1zM530 158h1v25h-1zM532 158h1v25h-1zM534 158h1v25h-1zM536 158h1v25h-1zM538 158h1v25h-1zM540 158h1v25h-1zM542 158h1v25h-1zM544 158h1v25h-1zM546 158h1v25h-1zM548 158h3v25h-3zM552 158h19v25h-19zM572 158h3v25h-3zM576 158h1v25h-1zM578 158h1v25h-1zM580 158h1v25h-1zM582 158h1v25h-1zM584 158h1v25h-1zM586 158h1v25h-1zM588 158h1v25h-1zM590 158h1v25h-1zM592 158h1v25h-1zM594 158h1v25h-1zM596 158h1v25h-1zM598 158h1v25h-1zM600 158h1v25h-1zM602 158h1v25h-1zM604 158h1v25h-1zM606 158h1v25h-1zM608 158h3v25h-3zM612 158h19v25h-19zM632 158h3v25h-3zM636 158h1v25h-1zM638 158h1v25h-1zM640 158h1v25h-1zM642 158h1v25h-1zM644 158h1v25h-1zM646 158h1v25h-1zM648 158h1v25h-1zM650 158h1v25h-1zM652 158h1v25h-1zM654 158h1v25h-1zM656 158h1v25h-1zM658 158h1v25h-1zM660 158h1v25h-1zM662 158h1v25h-1zM664 158h1v25h-1zM666 158h5v25h-5zM672 158h19v25h-19zM692 158h1v25h-1zM694 158h1v25h-1zM696 158h1v25h-1zM698 158h1v25h-1zM700 158h1v25h-1zM702 158h1v25h-1zM704 158h1v25h-1zM706 158h1v25h-1zM708 158h1v25h-1zM710 158h1v25h-1zM712 158h1v25h-1zM714 158h1v25h-1zM716 158h1v25h-1zM718 158h1v25h-1zM720 158h1v25h-1zM722 158h1v25h-1zM724 158h1v25h-1zM726 158h4v25h-4zM0 184h1v25h-1zM2 184h1v25h-1zM4 184h1v25h-1zM6 184h1v25h-1zM8 184h1v25h-1zM10 184h1v25h-1zM12 184h1v25h-1zM14 184h17v25h-17zM32 184h7v25h-7zM40 184h1v25h-1zM42 184h1v25h-1zM44 184h1v25h-1zM46 184h1v25h-1zM48 184h1v25h-1zM50 184h1v25h-1zM52 184h1v25h-1zM54 184h1v25h-1zM56 184h1v25h-1zM58 184h1v25h-1zM60 184h1v25h-1zM62 184h1v25h-1zM64 184h1v25h-1zM66 184h1v25h-1zM68 184h1v25h-1zM70 184h1v25h-1zM72 184h1v25h-1zM74 184h1v25h-1zM76 184h1v25h-1zM78 184h1v25h-1zM80 184h1v25h-1zM82 184h1v25h-1zM84 184h1v25h-1zM86 184h1v25h-1zM88 184h1v25h-1zM90 184h1v25h-1zM92 184h1v25h-1zM94 184h1v25h-1zM96 184h1v25h-1zM98 184h1v25h-1zM100 184h1v25h-1zM102 184h1v25h-1zM104 184h1v25h-1zM106 184h1v25h-1zM108 184h1v25h-1zM110 184h1v25h-1zM112 184h1v25h-1zM114 184h1v25h-1zM116 184h1v25h-1zM118 184h1v25h-1zM120 184h1v25h-1zM122 184h1v25h-1zM124 184h1v25h-1zM126 184h1v25h-1zM128 184h1v25h-1zM130 184h1v25h-1zM132 184h1v25h-1zM134 184h1v25h-1zM136 184h1v25h-1zM138 184h1v25h-1zM140 184h1v25h-1zM142 184h1v25h-1zM144 184h1v25h-1zM146 184h1v25h-1zM148 184h1v25h-1zM150 184h1v25h-1zM152 184h1v25h-1zM154 184h1v25h-1zM156 184h1v25h-1zM158 184h1v25h-1zM160 184h1v25h-1zM162 184h1v25h-1zM164 184h1v25h-1zM166 184h1v25h-1zM168 184h1v25h-1zM170 184h1v25h-1zM172 184h1v25h-1zM174 184h1v25h-1zM176 184h1v25h-1zM178 184h1v25h-1zM180 184h1v25h-1zM182 184h1v25h-1zM184 184h1v25h-1zM186 184h1v25h-1zM188 184h1v25h-1zM190 184h1v25h-1zM192 184h1v25h-1zM194 184h1v25h-1zM196 184h1v25h-1zM198 184h1v25h-1zM200 184h1v25h-1zM202 184h1v25h-1zM204 184h1v25h-1zM206 184h1v25h-1zM208 184h1v25h-1zM210 184h1v25h-1zM212 184h1v25h-1zM214 184h1v25h-1zM216 184h1v25h-1zM218 184h1v25h-1zM220 184h1v25h-1zM222 184h1v25h-1zM224 184h1v25h-1zM226 184h1v25h-1zM228 184h1v25h-1zM230 184h1v25h-1zM232 184h1v25h-1zM234 184h1v25h-1zM236 184h1v25h-1zM238 184h1v25h-1zM240 184h1v25h-1zM242 184h1v25h-1zM244 184h1v25h-1zM246 184h1v25h-1zM248 184h1v25h-1zM250 184h1v25h-1zM252 184h1v25h-1zM254 184h1v25h-1zM256 184h1v25h-1zM258 184h1v25h-1zM260 184h1v25h-1zM262 184h1v25h-1zM264 184h1v25h-1zM266 184h1v25h-1zM268 184h1v25h-1zM270 184h1v25h-1zM272 184h1v25h-1zM274 184h1v25h-1zM276 184h1v25h-1zM278 184h1v25h-1zM280 184h1v25h-1zM282 184h1v25h-1zM284 184h1v25h-1zM286 184h1v25h-1zM288 184h1v25h-1zM290 184h1v25h-1zM292 184h1v25h-1zM294 184h1v25h-1zM296 184h1v25h-1zM298 184h1v25h-1zM300 184h1v25h-1zM302 184h1v25h-1zM304 184h1v25h-1zM306 184h1v25h-1zM308 184h1v25h-1zM310 184h1v25h-1zM312 184h1v25h-1zM314 184h1v25h-1zM316 184h1v25h-1zM318 184h1v25h-1zM320 184h1v25h-1zM322 184h1v25h-1zM324 184h1v25h-1zM326 184h1v25h-1zM328 184h1v25h-1zM330 184h1v25h-1zM332 184h1v25h-1zM334 184h1v25h-1zM336 184h1v25h-1zM338 184h1v25h-1zM340 184h1v25h-1zM342 184h1v25h-1zM344 184h1v25h-1zM346 184h1v25h-1zM348 184h1v25h-1zM350 184h1v25h-1zM352 184h1v25h-1zM354 184h1v25h-1zM356 184h1v25h-1zM358 184h1v25h-1zM360 184h1v25h-1zM362 184h1v25h-1zM364 184h1v25h-1zM366 184h1v25h-1zM368 184h1v25h-1zM370 184h1v25h-1zM372 184h1v25h-1zM374 184h1v25h-1zM376 184h1v25h-1zM378 184h1v25h-1zM380 184h1v25h-1zM382 184h1v25h-1zM384 184h1v25h-1zM386 184h1v25h-1zM388 184h1v25h-1zM390 184h1v25h-1zM392 184h1v25h-1zM394 184h1v25h-1zM396 184h1v25h-1zM398 184h1v25h-1zM400 184h1v25h-1zM402 184h1v25h-1zM404 184h1v25h-1zM406 184h1v25h-1zM408 184h1v25h-1zM410 184h1v25h-1zM412 184h1v25h-1zM414 184h1v25h-1zM416 184h1v25h-1zM418 184h1v25h-1zM420 184h1v25h-1zM422 184h1v25h-1zM424 184h1v25h-1zM426 184h1v25h-1zM428 184h1v25h-1zM430 184h1v25h-1zM432 184h1v25h-1zM434 184h1v25h-1zM436 184h15v25h-15zM452 184h3v25h-3zM456 184h1v25h-1zM458 184h1v25h-1zM460 184h1v25h-1zM462 184h1v25h-1zM464 184h1v25h-1zM466 184h1v25h-1zM468 184h1v25h-1zM470 184h1v25h-1zM472 184h1v25h-1zM474 184h1v25h-1zM476 184h1v25h-1zM478 184h1v25h-1zM480 184h1v25h-1zM482 184h1v25h-1zM484 184h1v25h-1zM486 184h5v25h-5zM492 184h19v25h-19zM512 184h1v25h-1zM514 184h1v25h-1zM516 184h1v25h-1zM518 184h1v25h-1zM520 184h1v25h-1zM522 184h1v25h-1zM524 184h1v25h-1zM526 184h1v25h-1zM528 184h1v25h-1zM530 184h1v25h-1zM532 184h1v25h-1zM534 184h1v25h-1zM536 184h1v25h-1zM538 184h1v25h-1zM540 184h1v25h-1zM542 184h1v25h-1zM544 184h7v25h-7zM552 184h19v25h-19zM572 184h1v25h-1zM574 184h1v25h-1zM576 184h1v25h-1zM578 184h1v25h-1zM580 184h1v25h-1zM582 184h1v25h-1zM584 184h1v25h-1zM586 184h1v25h-1zM588 184h1v25h-1zM590 184h1v25h-1zM592 184h1v25h-1zM594 184h1v25h-1zM596 184h1v25h-1zM598 184h1v25h-1zM600 184h1v25h-1zM602 184h1v25h-1zM604 184h7v25h-7zM612 184h19v25h-19zM632 184h1v25h-1zM634 184h1v25h-1zM636 184h1v25h-1zM638 184h1v25h-1zM640 184h1v25h-1zM642 184h1v25h-1zM644 184h1v25h-1zM646 184h1v25h-1zM648 184h1v25h-1zM650 184h1v25h-1zM652 184h1v25h-1zM654 184h1v25h-1zM656 184h1v25h-1zM658 184h1v25h-1zM660 184h1v25h-1zM662 184h1v25h-1zM664 184h7v25h-7zM672 184h19v25h-19zM692 184h1v25h-1zM694 184h1v25h-1zM696 184h1v25h-1zM698 184h1v25h-1zM700 184h1v25h-1zM702 184h1v25h-1zM704 184h1v25h-1zM706 184h1v25h-1zM708 184h1v25h-1zM710 184h1v25h-1zM712 184h1v25h-1zM714 184h1v25h-1zM716 184h1v25h-1zM718 184h1v25h-1zM720 184h1v25h-1zM722 184h1v25h-1zM724 184h6v25h-6zM0 210h1v25h-1zM2 210h1v25h-1zM4 210h1v25h-1zM6 210h1v25h-1zM8 210h1v25h-1zM10 210h1v25h-1zM12 210h19v25h-19zM32 210h7v25h-7zM40 210h1v25h-1zM42 210h1v25h-1zM44 210h1v25h-1zM46 210h1v25h-1zM48 210h1v25h-1zM50 210h1v25h-1zM52 210h1v25h-1zM54 210h1v25h-1zM56 210h1v25h-1zM58 210h1v25h-1zM60 210h1v25h-1zM62 210h1v25h-1zM64 210h1v25h-1zM66 210h1v25h-1zM68 210h1v25h-1zM70 210h1v25h-1zM72 210h3v25h-3zM76 210h1v25h-1zM78 210h1v25h-1zM80 210h1v25h-1zM82 210h1v25h-1zM84 210h1v25h-1zM86 210h1v25h-1zM88 210h1v25h-1zM90 210h1v25h-1zM92 210h1v25h-1zM94 210h1v25h-1zM96 210h1v25h-1zM98 210h1v25h-1zM100 210h1v25h-1zM102 210h1v25h-1zM104 210h1v25h-1zM106 210h1v25h-1zM108 210h1v25h-1zM110 210h1v25h-1zM112 210h1v25h-1zM114 210h1v25h-1zM116 210h1v25h-1zM118 210h1v25h-1zM120 210h1v25h-1zM122 210h1v25h-1zM124 210h1v25h-1zM126 210h1v25h-1zM128 210h1v25h-1zM130 210h1v25h-1zM132 210h1v25h-1zM134 210h1v25h-1zM136 210h1v25h-1zM138 210h1v25h-1zM140 210h1v25h-1zM142 210h1v25h-1zM144 210h1v25h-1zM146 210h1v25h-1zM148 210h1v25h-1zM150 210h1v25h-1zM152 210h1v25h-1zM154 210h1v25h-1zM156 210h1v25h-1zM158 210h1v25h-1zM160 210h1v25h-1zM162 210h1v25h-1zM164 210h1v25h-1zM166 210h1v25h-1zM168 210h1v25h-1zM170 210h1v25h-1zM172 210h1v25h-1zM174 210h1v25h-1zM176 210h1v25h-1zM178 210h1v25h-1zM180 210h1v25h-1zM182 210h1v25h-1zM184 210h1v25h-1zM186 210h1v25h-1zM188 210h1v25h-1zM190 210h1v25h-1zM192 210h1v25h-1zM194 210h1v25h-1zM196 210h1v25h-1zM198 210h1v25h-1zM200 210h1v25h-1zM202 210h1v25h-1zM204 210h1v25h-1zM206 210h1v25h-1zM208 210h1v25h-1zM210 210h1v25h-1zM212 210h1v25h-1zM214 210h1v25h-1zM216 210h1v25h-1zM218 210h1v25h-1zM220 210h1v25h-1zM222 210h1v25h-1zM224 210h1v25h-1zM226 210h1v25h-1zM228 210h1v25h-1zM230 210h1v25h-1zM232 210h1v25h-1zM234 210h1v25h-1zM236 210h1v25h-1zM238 210h1v25h-1zM240 210h1v25h-1zM242 210h1v25h-1zM244 210h1v25h-1zM246 210h1v25h-1zM248 210h1v25h-1zM250 210h1v25h-1zM252 210h1v25h-1zM254 210h1v25h-1zM256 210h1v25h-1zM258 210h1v25h-1zM260 210h1v25h-1zM262 210h1v25h-1zM264 210h1v25h-1zM266 210h1v25h-1zM268 210h1v25h-1zM270 210h1v25h-1zM272 210h1v25h-1zM274 210h1v25h-1zM276 210h1v25h-1zM278 210h1v25h-1zM280 210h1v25h-1zM282 210h1v25h-1zM284 210h1v25h-1zM286 210h1v25h-1zM288 210h1v25h-1zM290 210h1v25h-1zM292 210h1v25h-1zM294 210h1v25h-1zM296 210h1v25h-1zM298 210h1v25h-1zM300 210h1v25h-1zM302 210h1v25h-1zM304 210h1v25h-1zM306 210h1v25h-1zM308 210h1v25h-1zM310 210h1v25h-1zM312 210h1v25h-1zM314 210h1v25h-1zM316 210h1v25h-1zM318 210h1v25h-1zM320 210h1v25h-1zM322 210h1v25h-1zM324 210h1v25h-1zM326 210h1v25h-1zM328 210h1v25h-1zM330 210h1v25h-1zM332 210h1v25h-1zM334 210h1v25h-1zM336 210h1v25h-1zM338 210h1v25h-1zM340 210h1v25h-1zM342 210h1v25h-1zM344 210h1v25h-1zM346 210h1v25h-1zM348 210h1v25h-1zM350 210h1v25h-1zM352 210h1v25h-1zM354 210h1v25h-1zM356 210h1v25h-1zM358 210h1v25h-1zM360 210h1v25h-1zM362 210h1v25h-1zM364 210h1v25h-1zM366 210h1v25h-1zM368 210h1v25h-1zM370 210h1v25h-1zM372 210h1v25h-1zM374 210h1v25h-1zM376 210h1v25h-1zM378 210h1v25h-1zM380 210h1v25h-1zM382 210h1v25h-1zM384 210h1v25h-1zM386 210h1v25h-1zM388 210h1v25h-1zM390 210h1v25h-1zM392 210h1v25h-1zM394 210h1v25h-1zM396 210h1v25h-1zM398 210h1v25h-1zM400 210h1v25h-1zM402 210h1v25h-1zM404 210h1v25h-1zM406 210h1v25h-1zM408 210h1v25h-1zM410 210h1v25h-1zM412 210h1v25h-1zM414 210h1v25h-1zM416 210h1v25h-1zM418 210h1v25h-1zM420 210h1v25h-1zM422 210h1v25h-1zM424 210h1v25h-1zM426 210h1v25h-1zM428 210h1v25h-1zM430 210h1v25h-1zM432 210h1v25h-1zM434 210h1v25h-1zM436 210h1v25h-1zM438 210h1v25h-1zM440 210h1v25h-1zM442 210h1v25h-1zM444 210h1v25h-1zM446 210h1v25h-1zM448 210h1v25h-1zM450 210h1v25h-1zM452 210h1v25h-1zM454 210h1v25h-1zM456 210h1v25h-1zM458 210h1v25h-1zM460 210h1v25h-1zM462 210h1v25h-1zM464 210h1v25h-1zM466 210h1v25h-1zM468 210h1v25h-1zM470 210h1v25h-1zM472 210h1v25h-1zM474 210h1v25h-1zM476 210h1v25h-1zM478 210h1v25h-1zM480 210h1v25h-1zM482 210h9v25h-9zM492 210h19v25h-19zM512 210h1v25h-1zM514 210h1v25h-1zM516 210h1v25h-1zM518 210h1v25h-1zM520 210h1v25h-1zM522 210h1v25h-1zM524 210h1v25h-1zM526 210h1v25h-1zM528 210h1v25h-1zM530 210h1v25h-1zM532 210h1v25h-1zM534 210h1v25h-1zM536 210h1v25h-1zM538 210h1v25h-1zM540 210h1v25h-1zM542 210h9v25h-9zM552 210h19v25h-19zM572 210h1v25h-1zM574 210h1v25h-1zM576 210h1v25h-1zM578 210h1v25h-1zM580 210h1v25h-1zM582 210h1v25h-1zM584 210h1v25h-1zM586 210h1v25h-1zM588 210h1v25h-1zM590 210h1v25h-1zM592 210h1v25h-1zM594 210h1v25h-1zM596 210h1v25h-1zM598 210h1v25h-1zM600 210h1v25h-1zM602 210h9v25h-9zM612 210h17v25h-17zM630 210h1v25h-1zM632 210h1v25h-1zM634 210h1v25h-1zM636 210h1v25h-1zM638 210h1v25h-1zM640 210h1v25h-1zM642 210h1v25h-1zM644 210h1v25h-1zM646 210h1v25h-1zM648 210h1v25h-1zM650 210h1v25h-1zM652 210h1v25h-1zM654 210h1v25h-1zM656 210h1v25h-1zM658 210h1v25h-1zM660 210h1v25h-1zM662 210h9v25h-9zM672 210h17v25h-17zM690 210h1v25h-1zM692 210h1v25h-1zM694 210h1v25h-1zM696 210h1v25h-1zM698 210h1v25h-1zM700 210h1v25h-1zM702 210h1v25h-1zM704 210h1v25h-1zM706 210h1v25h-1zM708 210h1v25h-1zM710 210h1v25h-1zM712 210h1v25h-1zM714 210h1v25h-1zM716 210h1v25h-1zM718 210h1v25h-1zM720 210h1v25h-1zM722 210h8v25h-8zM0 236h1v25h-1zM2 236h1v25h-1zM6 236h1v25h-1zM8 236h1v25h-1zM12 236h3v25h-3zM18 236h3v25h-3zM24 236h3v25h-3zM30 236h1v25h-1zM32 236h1v25h-1zM36 236h1v25h-1zM38 236h1v25h-1zM42 236h1v25h-1zM44 236h1v25h-1zM48 236h1v25h-1zM50 236h1v25h-1zM54 236h1v25h-1zM56 236h1v25h-1zM60 236h1v25h-1zM62 236h1v25h-1zM66 236h1v25h-1zM68 236h1v25h-1zM72 236h3v25h-3zM78 236h3v25h-3zM84 236h3v25h-3zM90 236h1v25h-1zM92 236h1v25h-1zM96 236h1v25h-1zM98 236h1v25h-1zM102 236h1v25h-1zM104 236h1v25h-1zM108 236h1v25h-1zM110 236h1v25h-1zM114 236h1v25h-1zM116 236h1v25h-1zM120 236h1v25h-1zM122 236h1v25h-1zM126 236h1v25h-1zM128 236h1v25h-1zM132 236h1v25h-1zM134 236h1v25h-1zM138 236h1v25h-1zM140 236h1v25h-1zM144 236h1v25h-1zM146 236h1v25h-1zM150 236h1v25h-1zM152 236h1v25h-1zM156 236h1v25h-1zM158 236h1v25h-1zM162 236h1v25h-1zM164 236h1v25h-1zM168 236h1v25h-1zM170 236h1v25h-1zM174 236h1v25h-1zM176 236h1v25h-1zM180 236h1v25h-1zM182 236h1v25h-1zM186 236h1v25h-1zM188 236h1v25h-1zM192 236h1v25h-1zM194 236h1v25h-1zM198 236h1v25h-1zM200 236h1v25h-1zM204 236h1v25h-1zM206 236h1v25h-1zM210 236h1v25h-1zM212 236h1v25h-1zM216 236h1v25h-1zM218 236h1v25h-1zM222 236h1v25h-1zM224 236h1v25h-1zM228 236h1v25h-1zM230 236h1v25h-1zM234 236h1v25h-1zM236 236h1v25h-1zM240 236h1v25h-1zM242 236h1v25h-1zM246 236h1v25h-1zM248 236h1v25h-1zM252 236h1v25h-1zM254 236h1v25h-1zM258 236h1v25h-1zM260 236h1v25h-1zM264 236h1v25h-1zM266 236h1v25h-1zM270 236h1v25h-1zM272 236h1v25h-1zM276 236h1v25h-1zM278 236h1v25h-1zM282 236h1v25h-1zM284 236h1v25h-1zM288 236h1v25h-1zM290 236h1v25h-1zM294 236h1v25h-1zM296 236h1v25h-1zM300 236h1v25h-1zM302 236h1v25h-1zM306 236h1v25h-1zM308 236h1v25h-1zM312 236h1v25h-1zM314 236h1v25h-1zM318 236h1v25h-1zM320 236h1v25h-1zM324 236h1v25h-1zM326 236h1v25h-1zM330 236h1v25h-1zM332 236h1v25h-1zM336 236h1v25h-1zM338 236h1v25h-1zM342 236h1v25h-1zM344 236h1v25h-1zM348 236h1v25h-1zM350 236h1v25h-1zM354 236h1v25h-1zM356 236h1v25h-1zM360 236h1v25h-1zM362 236h1v25h-1zM366 236h1v25h-1zM368 236h1v25h-1zM372 236h1v25h-1zM374 236h1v25h-1zM378 236h1v25h-1zM380 236h1v25h-1zM384 236h1v25h-1zM386 236h1v25h-1zM390 236h1v25h-1zM392 236h1v25h-1zM396 236h1v25h-1zM398 236h1v25h-1zM402 236h1v25h-1zM404 236h1v25h-1zM408 236h1v25h-1zM410 236h1v25h-1zM414 236h1v25h-1zM416 236h1v25h-1zM420 236h1v25h-1zM422 236h1v25h-1zM426 236h1v25h-1zM428 236h1v25h-1zM432 236h1v25h-1zM434 236h1v25h-1zM438 236h1v25h-1zM440 236h1v25h-1zM444 236h1v25h-1zM446 236h1v25h-1zM450 236h1v25h-1zM452 236h1v25h-1zM456 236h1v25h-1zM458 236h1v25h-1zM462 236h1v25h-1zM464 236h1v25h-1zM468 236h1v25h-1zM470 236h1v25h-1zM474 236h1v25h-1zM476 236h1v25h-1zM480 236h1v25h-1zM482 236h1v25h-1zM486 236h1v25h-1zM488 236h1v25h-1zM492 236h1v25h-1zM494 236h1v25h-1zM497 236h4v25h-4zM504 236h3v25h-3zM510 236h1v25h-1zM512 236h1v25h-1zM516 236h1v25h-1zM518 236h1v25h-1zM522 236h1v25h-1zM524 236h1v25h-1zM528 236h1v25h-1zM530 236h1v25h-1zM534 236h1v25h-1zM536 236h1v25h-1zM540 236h3v25h-3zM546 236h3v25h-3zM552 236h3v25h-3zM558 236h3v25h-3zM564 236h3v25h-3zM570 236h1v25h-1zM572 236h1v25h-1zM576 236h1v25h-1zM578 236h1v25h-1zM582 236h1v25h-1zM584 236h1v25h-1zM588 236h1v25h-1zM590 236h1v25h-1zM594 236h1v25h-1zM596 236h1v25h-1zM600 236h3v25h-3zM606 236h3v25h-3zM612 236h3v25h-3zM618 236h3v25h-3zM624 236h3v25h-3zM630 236h1v25h-1zM632 236h1v25h-1zM636 236h1v25h-1zM638 236h1v25h-1zM642 236h1v25h-1zM644 236h1v25h-1zM648 236h1v25h-1zM650 236h1v25h-1zM654 236h1v25h-1zM656 236h1v25h-1zM660 236h3v25h-3zM666 236h3v25h-3zM672 236h3v25h-3zM678 236h3v25h-3zM684 236h1v25h-1zM686 236h1v25h-1zM690 236h1v25h-1zM692 236h1v25h-1zM696 236h1v25h-1zM698 236h1v25h-1zM702 236h1v25h-1zM704 236h1v25h-1zM708 236h1v25h-1zM710 236h1v25h-1zM714 236h1v25h-1zM716 236h1v25h-1zM720 236h3v25h-3zM726 236h3v25h-3zM0 262h1v25h-1zM2 262h1v25h-1zM6 262h1v25h-1zM8 262h1v25h-1zM12 262h3v25h-3zM18 262h3v25h-3zM24 262h3v25h-3zM30 262h1v25h-1zM32 262h1v25h-1zM36 262h1v25h-1zM38 262h1v25h-1zM42 262h1v25h-1zM44 262h1v25h-1zM48 262h1v25h-1zM50 262h1v25h-1zM54 262h1v25h-1zM56 262h1v25h-1zM60 262h1v25h-1zM62 262h1v25h-1zM66 262h3v25h-3zM72 262h3v25h-3zM78 262h3v25h-3zM84 262h3v25h-3zM90 262h1v25h-1zM92 262h1v25h-1zM96 262h1v25h-1zM98 262h1v25h-1zM102 262h1v25h-1zM104 262h1v25h-1zM108 262h1v25h-1zM110 262h1v25h-1zM114 262h1v25h-1zM116 262h1v25h-1zM120 262h1v25h-1zM122 262h1v25h-1zM126 262h3v25h-3zM132 262h3v25h-3zM138 262h3v25h-3zM144 262h1v25h-1zM146 262h1v25h-1zM150 262h1v25h-1zM152 262h1v25h-1zM156 262h1v25h-1zM158 262h1v25h-1zM162 262h1v25h-1zM164 262h1v25h-1zM168 262h1v25h-1zM170 262h1v25h-1zM174 262h1v25h-1zM176 262h1v25h-1zM180 262h1v25h-1zM182 262h1v25h-1zM186 262h1v25h-1zM188 262h1v25h-1zM192 262h1v25h-1zM194 262h1v25h-1zM198 262h1v25h-1zM200 262h1v25h-1zM204 262h1v25h-1zM206 262h1v25h-1zM210 262h1v25h-1zM212 262h1v25h-1zM216 262h1v25h-1zM218 262h1v25h-1zM222 262h1v25h-1zM224 262h1v25h-1zM228 262h1v25h-1zM230 262h1v25h-1zM234 262h1v25h-1zM236 262h1v25h-1zM240 262h1v25h-1zM242 262h1v25h-1zM246 262h1v25h-1zM248 262h1v25h-1zM252 262h1v25h-1zM254 262h1v25h-1zM258 262h1v25h-1zM260 262h1v25h-1zM264 262h1v25h-1zM266 262h1v25h-1zM270 262h1v25h-1zM272 262h1v25h-1zM276 262h1v25h-1zM278 262h1v25h-1zM282 262h1v25h-1zM284 262h1v25h-1zM288 262h1v25h-1zM290 262h1v25h-1zM294 262h1v25h-1zM296 262h1v25h-1zM300 262h1v25h-1zM302 262h1v25h-1zM306 262h1v25h-1zM308 262h1v25h-1zM312 262h1v25h-1zM314 262h1v25h-1zM318 262h1v25h-1zM320 262h1v25h-1zM324 262h1v25h-1zM326 262h1v25h-1zM330 262h1v25h-1zM332 262h1v25h-1zM336 262h1v25h-1zM338 262h1v25h-1zM342 262h1v25h-1zM344 262h1v25h-1zM348 262h1v25h-1zM350 262h1v25h-1zM354 262h1v25h-1zM356 262h1v25h-1zM360 262h1v25h-1zM362 262h1v25h-1zM366 262h1v25h-1zM368 262h1v25h-1zM372 262h1v25h-1zM374 262h1v25h-1zM378 262h1v25h-1zM380 262h1v25h-1zM384 262h1v25h-1zM386 262h1v25h-1zM390 262h1v25h-1zM392 262h1v25h-1zM396 262h1v25h-1zM398 262h1v25h-1zM402 262h1v25h-1zM404 262h1v25h-1zM408 262h1v25h-1zM410 262h1v25h-1zM414 262h1v25h-1zM416 262h1v25h-1zM420 262h1v25h-1zM422 262h1v25h-1zM426 262h1v25h-1zM428 262h1v25h-1zM432 262h1v25h-1zM434 262h1v25h-1zM438 262h1v25h-1zM440 262h1v25h-1zM444 262h1v25h-1zM446 262h1v25h-1zM450 262h1v25h-1zM452 262h1v25h-1zM456 262h1v25h-1zM458 262h1v25h-1zM462 262h1v25h-1zM464 262h1v25h-1zM468 262h1v25h-1zM470 262h1v25h-1zM474 262h1v25h-1zM476 262h1v25h-1zM480 262h1v25h-1zM482 262h1v25h-1zM486 262h1v25h-1zM488 262h1v25h-1zM492 262h1v25h-1zM494 262h1v25h-1zM498 262h1v25h-1zM500 262h1v25h-1zM504 262h1v25h-1zM506 262h1v25h-1zM510 262h1v25h-1zM512 262h1v25h-1zM516 262h1v25h-1zM518 262h1v25h-1zM522 262h1v25h-1zM524 262h1v25h-1zM528 262h1v25h-1zM530 262h1v25h-1zM534 262h1v25h-1zM536 262h1v25h-1zM540 262h3v25h-3zM546 262h3v25h-3zM552 262h3v25h-3zM558 262h3v25h-3zM564 262h1v25h-1zM566 262h1v25h-1zM570 262h1v25h-1zM572 262h1v25h-1zM576 262h1v25h-1zM578 262h1v25h-1zM582 262h1v25h-1zM584 262h1v25h-1zM588 262h1v25h-1zM590 262h1v25h-1zM594 262h1v25h-1zM596 262h1v25h-1zM600 262h3v25h-3zM606 262h3v25h-3zM612 262h3v25h-3zM618 262h3v25h-3zM624 262h1v25h-1zM626 262h1v25h-1zM630 262h1v25h-1zM632 262h1v25h-1zM636 262h1v25h-1zM638 262h1v25h-1zM642 262h1v25h-1zM644 262h1v25h-1zM648 262h1v25h-1zM650 262h1v25h-1zM654 262h1v25h-1zM656 262h1v25h-1zM660 262h3v25h-3zM666 262h3v25h-3zM672 262h3v25h-3zM678 262h3v25h-3zM684 262h1v25h-1zM686 262h1v25h-1zM690 262h1v25h-1zM692 262h1v25h-1zM696 262h1v25h-1zM698 262h1v25h-1zM702 262h1v25h-1zM704 262h1v25h-1zM708 262h1v25h-1zM710 262h1v25h-1zM714 262h1v25h-1zM716 262h1v25h-1zM720 262h3v25h-3zM726 262h3v25h-3zM0 288h1v25h-1zM2 288h1v25h-1zM4 288h1v25h-1zM6 288h5v25h-5zM12 288h19v25h-19zM32 288h1v25h-1zM34 288h1v25h-1zM36 288h1v25h-1zM38 288h1v25h-1zM40 288h1v25h-1zM42 288h1v25h-1zM44 288h1v25h-1zM46 288h1v25h-1zM48 288h1v25h-1zM50 288h1v25h-1zM52 288h1v25h-1zM54 288h1v25h-1zM56 288h1v25h-1zM58 288h1v25h-1zM60 288h1v25h-1zM62 288h1v25h-1zM64 288h7v25h-7zM72 288h19v25h-19zM92 288h1v25h-1zM94 288h1v25h-1zM96 288h1v25h-1zM98 288h1v25h-1zM100 288h1v25h-1zM102 288h1v25h-1zM104 288h1v25h-1zM106 288h1v25h-1zM108 288h1v25h-1zM110 288h1v25h-1zM112 288h1v25h-1zM114 288h1v25h-1zM116 288h1v25h-1zM118 288h1v25h-1zM120 288h1v25h-1zM122 288h9v25h-9zM132 288h19v25h-19zM152 288h1v25h-1zM154 288h1v25h-1zM156 288h1v25h-1zM158 288h1v25h-1zM160 288h1v25h-1zM162 288h1v25h-1zM164 288h1v25h-1zM166 288h1v25h-1zM168 288h1v25h-1zM170 288h1v25h-1zM172 288h1v25h-1zM174 288h1v25h-1zM176 288h1v25h-1zM178 288h1v25h-1zM180 288h1v25h-1zM182 288h1v25h-1zM184 288h1v25h-1zM186 288h1v25h-1zM188 288h1v25h-1zM190 288h1v25h-1zM192 288h1v25h-1zM194 288h1v25h-1zM196 288h1v25h-1zM198 288h1v25h-1zM200 288h1v25h-1zM202 288h1v25h-1zM204 288h1v25h-1zM206 288h1v25h-1zM208 288h1v25h-1zM210 288h1v25h-1zM212 288h1v25h-1zM214 288h1v25h-1zM216 288h1v25h-1zM218 288h1v25h-1zM220 288h1v25h-1zM222 288h1v25h-1zM224 288h1v25h-1zM226 288h1v25h-1zM228 288h1v25h-1zM230 288h1v25h-1zM232 288h1v25h-1zM234 288h1v25h-1zM236 288h1v25h-1zM238 288h1v25h-1zM240 288h1v25h-1zM242 288h1v25h-1zM244 288h1v25h-1zM246 288h1v25h-1zM248 288h1v25h-1zM250 288h1v25h-1zM252 288h1v25h-1zM254 288h1v25h-1zM256 288h1v25h-1zM258 288h1v25h-1zM260 288h1v25h-1zM262 288h1v25h-1zM264 288h1v25h-1zM266 288h1v25h-1zM268 288h1v25h-1zM270 288h1v25h-1zM272 288h1v25h-1zM274 288h1v25h-1zM276 288h1v25h-1zM278 288h1v25h-1zM280 288h1v25h-1zM282 288h1v25h-1zM284 288h1v25h-1zM286 288h1v25h-1zM288 288h1v25h-1zM290 288h1v25h-1zM292 288h1v25h-1zM294 288h1v25h-1zM296 288h1v25h-1zM298 288h1v25h-1zM300 288h1v25h-1zM302 288h1v25h-1zM304 288h1v25h-1zM306 288h1v25h-1zM308 288h1v25h-1zM310 288h1v25h-1zM312 288h1v25h-1zM314 288h1v25h-1zM316 288h1v25h-1zM318 288h1v25h-1zM320 288h1v25h-1zM322 288h1v25h-1zM324 288h1v25h-1zM326 288h1v25h-1zM328 288h1v25h-1zM330 288h1v25h-1zM332 288h1v25h-1zM334 288h1v25h-1zM336 288h1v25h-1zM338 288h1v25h-1zM340 288h1v25h-1zM342 288h1v25h-1zM344 288h1v25h-1zM346 288h1v25h-1zM348 288h1v25h-1zM350 288h1v25h-1zM352 288h1v25h-1zM354 288h1v25h-1zM356 288h1v25h-1zM358 288h1v25h-1zM360 288h1v25h-1zM362 288h1v25h-1zM364 288h1v25h-1zM366 288h1v25h-1zM368 288h1v25h-1zM370 288h1v25h-1zM372 288h1v25h-1zM374 288h1v25h-1zM376 288h1v25h-1zM378 288h1v25h-1zM380 288h1v25h-1zM382 288h1v25h-1zM384 288h1v25h-1zM386 288h1v25h-1zM388 288h1v25h-1zM390 288h1v25h-1zM392 288h1v25h-1zM394 288h1v25h-1zM396 288h1v25h-1zM398 288h1v25h-1zM400 288h1v25h-1zM402 288h1v25h-1zM404 288h1v25h-1zM406 288h1v25h-1zM408 288h1v25h-1zM410 288h1v25h-1zM412 288h1v25h-1zM414 288h1v25h-1zM416 288h1v25h-1zM418 288h1v25h-1zM420 288h1v25h-1zM422 288h1v25h-1zM424 288h1v25h-1zM426 288h1v25h-1zM428 288h1v25h-1zM430 288h1v25h-1zM432 288h1v25h-1zM434 288h1v25h-1zM436 288h1v25h-1zM438 288h1v25h-1zM440 288h1v25h-1zM442 288h1v25h-1zM444 288h1v25h-1zM446 288h1v25h-1zM448 288h1v25h-1zM450 288h1v25h-1zM452 288h1v25h-1zM454 288h1v25h-1zM456 288h1v25h-1zM458 288h1v25h-1zM460 288h1v25h-1zM462 288h1v25h-1zM464 288h1v25h-1zM466 288h1v25h-1zM468 288h1v25h-1zM470 288h1v25h-1zM472 288h1v25h-1zM474 288h1v25h-1zM476 288h1v25h-1zM478 288h1v25h-1zM480 288h1v25h-1zM482 288h1v25h-1zM484 288h1v25h-1zM486 288h1v25h-1zM488 288h1v25h-1zM490 288h1v25h-1zM492 288h1v25h-1zM494 288h1v25h-1zM496 288h1v25h-1zM498 288h1v25h-1zM500 288h1v25h-1zM502 288h1v25h-1zM504 288h1v25h-1zM506 288h1v25h-1zM508 288h1v25h-1zM510 288h1v25h-1zM512 288h1v25h-1zM514 288h1v25h-1zM516 288h1v25h-1zM518 288h1v25h-1zM520 288h1v25h-1zM522 288h1v25h-1zM524 288h1v25h-1zM526 288h1v25h-1zM528 288h1v25h-1zM530 288h1v25h-1zM532 288h1v25h-1zM534 288h1v25h-1zM536 288h1v25h-1zM538 288h1v25h-1zM540 288h1v25h-1zM542 288h1v25h-1zM544 288h1v25h-1zM546 288h1v25h-1zM548 288h1v25h-1zM550 288h1v25h-1zM552 288h1v25h-1zM554 288h1v25h-1zM556 288h1v25h-1zM558 288h1v25h-1zM560 288h1v25h-1zM562 288h1v25h-1zM564 288h1v25h-1zM566 288h1v25h-1zM568 288h1v25h-1zM570 288h1v25h-1zM572 288h1v25h-1zM574 288h1v25h-1zM576 288h1v25h-1zM578 288h1v25h-1zM580 288h1v25h-1zM582 288h1v25h-1zM584 288h1v25h-1zM586 288h1v25h-1zM588 288h1v25h-1zM590 288h1v25h-1zM592 288h1v25h-1zM594 288h17v25h-17zM612 288h11v25h-11zM624 288h1v25h-1zM626 288h1v25h-1zM628 288h1v25h-1zM630 288h1v25h-1zM632 288h1v25h-1zM634 288h1v25h-1zM636 288h1v25h-1zM638 288h1v25h-1zM640 288h1v25h-1zM642 288h1v25h-1zM644 288h1v25h-1zM646 288h1v25h-1zM648 288h1v25h-1zM650 288h1v25h-1zM652 288h1v25h-1zM654 288h17v25h-17zM672 288h9v25h-9zM682 288h1v25h-1zM684 288h1v25h-1zM686 288h1v25h-1zM688 288h1v25h-1zM690 288h1v25h-1zM692 288h1v25h-1zM694 288h1v25h-1zM696 288h1v25h-1zM698 288h1v25h-1zM700 288h1v25h-1zM702 288h1v25h-1zM704 288h1v25h-1zM706 288h1v25h-1zM708 288h1v25h-1zM710 288h1v25h-1zM712 288h1v25h-1zM714 288h16v25h-16zM0 314h1v25h-1zM2 314h9v25h-9zM12 314h17v25h-17zM30 314h1v25h-1zM32 314h1v25h-1zM34 314h1v25h-1zM36 314h1v25h-1zM38 314h1v25h-1zM40 314h1v25h-1zM42 314h1v25h-1zM44 314h1v25h-1zM46 314h1v25h-1zM48 314h1v25h-1zM50 314h1v25h-1zM52 314h1v25h-1zM54 314h1v25h-1zM56 314h1v25h-1zM58 314h1v25h-1zM60 314h1v25h-1zM62 314h9v25h-9zM72 314h17v25h-17zM90 314h1v25h-1zM92 314h1v25h-1zM94 314h1v25h-1zM96 314h1v25h-1zM98 314h1v25h-1zM100 314h1v25h-1zM102 314h1v25h-1zM104 314h1v25h-1zM106 314h1v25h-1zM108 314h1v25h-1zM110 314h1v25h-1zM112 314h1v25h-1zM114 314h1v25h-1zM116 314h1v25h-1zM118 314h1v25h-1zM120 314h11v25h-11zM132 314h17v25h-17zM150 314h1v25h-1zM152 314h1v25h-1zM154 314h1v25h-1zM156 314h1v25h-1zM158 314h1v25h-1zM160 314h1v25h-1zM162 314h1v25h-1zM164 314h1v25h-1zM166 314h1v25h-1zM168 314h1v25h-1zM170 314h1v25h-1zM172 314h1v25h-1zM174 314h1v25h-1zM176 314h1v25h-1zM178 314h1v25h-1zM180 314h11v25h-11zM192 314h13v25h-13zM206 314h1v25h-1zM208 314h1v25h-1zM210 314h1v25h-1zM212 314h1v25h-1zM214 314h1v25h-1zM216 314h1v25h-1zM218 314h1v25h-1zM220 314h1v25h-1zM222 314h1v25h-1zM224 314h1v25h-1zM226 314h1v25h-1zM228 314h1v25h-1zM230 314h1v25h-1zM232 314h1v25h-1zM234 314h1v25h-1zM236 314h1v25h-1zM238 314h1v25h-1zM240 314h1v25h-1zM242 314h1v25h-1zM244 314h1v25h-1zM246 314h1v25h-1zM248 314h1v25h-1zM250 314h1v25h-1zM252 314h1v25h-1zM254 314h1v25h-1zM256 314h1v25h-1zM258 314h1v25h-1zM260 314h1v25h-1zM262 314h1v25h-1zM264 314h1v25h-1zM266 314h1v25h-1zM268 314h1v25h-1zM270 314h1v25h-1zM272 314h1v25h-1zM274 314h1v25h-1zM276 314h1v25h-1zM278 314h1v25h-1zM280 314h1v25h-1zM282 314h1v25h-1zM284 314h1v25h-1zM286 314h1v25h-1zM288 314h1v25h-1zM290 314h1v25h-1zM292 314h1v25h-1zM294 314h1v25h-1zM296 314h1v25h-1zM298 314h1v25h-1zM300 314h1v25h-1zM302 314h1v25h-1zM304 314h1v25h-1zM306 314h1v25h-1zM308 314h1v25h-1zM310 314h1v25h-1zM312 314h1v25h-1zM314 314h1v25h-1zM316 314h1v25h-1zM318 314h1v25h-1zM320 314h1v25h-1zM322 314h1v25h-1zM324 314h1v25h-1zM326 314h1v25h-1zM328 314h1v25h-1zM330 314h1v25h-1zM332 314h1v25h-1zM334 314h1v25h-1zM336 314h1v25h-1zM338 314h1v25h-1zM340 314h1v25h-1zM342 314h1v25h-1zM344 314h1v25h-1zM346 314h1v25h-1zM348 314h1v25h-1zM350 314h1v25h-1zM352 314h1v25h-1zM354 314h1v25h-1zM356 314h1v25h-1zM358 314h1v25h-1zM360 314h1v25h-1zM362 314h1v25h-1zM364 314h1v25h-1zM366 314h1v25h-1zM368 314h1v25h-1zM370 314h1v25h-1zM372 314h1v25h-1zM374 314h1v25h-1zM376 314h1v25h-1zM378 314h1v25h-1zM380 314h1v25h-1zM382 314h1v25h-1zM384 314h1v25h-1zM386 314h1v25h-1zM388 314h1v25h-1zM390 314h1v25h-1zM392 314h1v25h-1zM394 314h1v25h-1zM396 314h1v25h-1zM398 314h1v25h-1zM400 314h1v25h-1zM402 314h1v25h-1zM404 314h1v25h-1zM406 314h1v25h-1zM408 314h1v25h-1zM410 314h1v25h-1zM412 314h1v25h-1zM414 314h1v25h-1zM416 314h1v25h-1zM418 314h1v25h-1zM420 314h1v25h-1zM422 314h1v25h-1zM424 314h1v25h-1zM426 314h1v25h-1zM428 314h1v25h-1zM430 314h1v25h-1zM432 314h1v25h-1zM434 314h1v25h-1zM436 314h1v25h-1zM438 314h1v25h-1zM440 314h1v25h-1zM442 314h1v25h-1zM444 314h1v25h-1zM446 314h1v25h-1zM448 314h1v25h-1zM450 314h1v25h-1zM452 314h1v25h-1zM454 314h1v25h-1zM456 314h1v25h-1zM458 314h1v25h-1zM460 314h1v25h-1zM462 314h1v25h-1zM464 314h1v25h-1zM466 314h1v25h-1zM468 314h1v25h-1zM470 314h1v25h-1zM472 314h1v25h-1zM474 314h1v25h-1zM476 314h1v25h-1zM478 314h1v25h-1zM480 314h1v25h-1zM482 314h1v25h-1zM484 314h1v25h-1zM486 314h1v25h-1zM488 314h1v25h-1zM490 314h1v25h-1zM492 314h1v25h-1zM494 314h1v25h-1zM496 314h1v25h-1zM498 314h1v25h-1zM500 314h1v25h-1zM502 314h1v25h-1zM504 314h1v25h-1zM506 314h1v25h-1zM508 314h1v25h-1zM510 314h1v25h-1zM512 314h1v25h-1zM514 314h1v25h-1zM516 314h1v25h-1zM518 314h1v25h-1zM520 314h1v25h-1zM522 314h1v25h-1zM524 314h1v25h-1zM526 314h1v25h-1zM528 314h1v25h-1zM530 314h1v25h-1zM532 314h1v25h-1zM534 314h1v25h-1zM536 314h1v25h-1zM538 314h1v25h-1zM540 314h1v25h-1zM542 314h1v25h-1zM544 314h1v25h-1zM546 314h1v25h-1zM548 314h1v25h-1zM550 314h1v25h-1zM552 314h1v25h-1zM554 314h1v25h-1zM556 314h1v25h-1zM558 314h1v25h-1zM560 314h1v25h-1zM562 314h1v25h-1zM564 314h1v25h-1zM566 314h1v25h-1zM568 314h1v25h-1zM570 314h1v25h-1zM572 314h1v25h-1zM574 314h1v25h-1zM576 314h1v25h-1zM578 314h1v25h-1zM580 314h1v25h-1zM582 314h1v25h-1zM584 314h1v25h-1zM586 314h1v25h-1zM588 314h1v25h-1zM590 314h1v25h-1zM592 314h1v25h-1zM594 314h1v25h-1zM596 314h1v25h-1zM598 314h1v25h-1zM600 314h1v25h-1zM602 314h1v25h-1zM604 314h7v25h-7zM612 314h7v25h-7zM620 314h1v25h-1zM622 314h1v25h-1zM624 314h1v25h-1zM626 314h1v25h-1zM628 314h1v25h-1zM630 314h1v25h-1zM632 314h1v25h-1zM634 314h1v25h-1zM636 314h1v25h-1zM638 314h1v25h-1zM640 314h1v25h-1zM642 314h1v25h-1zM644 314h1v25h-1zM646 314h1v25h-1zM648 314h1v25h-1zM650 314h1v25h-1zM652 314h19v25h-19zM672 314h7v25h-7zM680 314h1v25h-1zM682 314h1v25h-1zM684 314h1v25h-1zM686 314h1v25h-1zM688 314h1v25h-1zM690 314h1v25h-1zM692 314h1v25h-1zM694 314h1v25h-1zM696 314h1v25h-1zM698 314h1v25h-1zM700 314h1v25h-1zM702 314h1v25h-1zM704 314h1v25h-1zM706 314h1v25h-1zM708 314h1v25h-1zM710 314h1v25h-1zM712 314h18v25h-18zM0 340h11v25h-11zM12 340h15v25h-15zM28 340h1v25h-1zM30 340h1v25h-1zM32 340h1v25h-1zM34 340h1v25h-1zM36 340h1v25h-1zM38 340h1v25h-1zM40 340h1v25h-1zM42 340h1v25h-1zM44 340h1v25h-1zM46 340h1v25h-1zM48 340h1v25h-1zM50 340h1v25h-1zM52 340h1v25h-1zM54 340h1v25h-1zM56 340h1v25h-1zM58 340h1v25h-1zM60 340h11v25h-11zM72 340h13v25h-13zM86 340h1v25h-1zM88 340h1v25h-1zM90 340h1v25h-1zM92 340h1v25h-1zM94 340h1v25h-1zM96 340h1v25h-1zM98 340h1v25h-1zM100 340h1v25h-1zM102 340h1v25h-1zM104 340h1v25h-1zM106 340h1v25h-1zM108 340h1v25h-1zM110 340h1v25h-1zM112 340h1v25h-1zM114 340h1v25h-1zM116 340h1v25h-1zM118 340h13v25h-13zM132 340h13v25h-13zM146 340h1v25h-1zM148 340h1v25h-1zM150 340h1v25h-1zM152 340h1v25h-1zM154 340h1v25h-1zM156 340h1v25h-1zM158 340h1v25h-1zM160 340h1v25h-1zM162 340h1v25h-1zM164 340h1v25h-1zM166 340h1v25h-1zM168 340h1v25h-1zM170 340h1v25h-1zM172 340h1v25h-1zM174 340h1v25h-1zM176 340h1v25h-1zM178 340h13v25h-13zM192 340h13v25h-13zM206 340h1v25h-1zM208 340h1v25h-1zM210 340h1v25h-1zM212 340h1v25h-1zM214 340h1v25h-1zM216 340h1v25h-1zM218 340h1v25h-1zM220 340h1v25h-1zM222 340h1v25h-1zM224 340h1v25h-1zM226 340h1v25h-1zM228 340h1v25h-1zM230 340h1v25h-1zM232 340h1v25h-1zM234 340h1v25h-1zM236 340h1v25h-1zM238 340h1v25h-1zM240 340h1v25h-1zM242 340h1v25h-1zM244 340h1v25h-1zM246 340h1v25h-1zM248 340h1v25h-1zM250 340h1v25h-1zM252 340h1v25h-1zM254 340h1v25h-1zM256 340h1v25h-1zM258 340h1v25h-1zM260 340h1v25h-1zM262 340h1v25h-1zM264 340h1v25h-1zM266 340h1v25h-1zM268 340h1v25h-1zM270 340h1v25h-1zM272 340h1v25h-1zM274 340h1v25h-1zM276 340h1v25h-1zM278 340h1v25h-1zM280 340h1v25h-1zM282 340h1v25h-1zM284 340h1v25h-1zM286 340h1v25h-1zM288 340h1v25h-1zM290 340h1v25h-1zM292 340h1v25h-1zM294 340h1v25h-1zM296 340h1v25h-1zM298 340h1v25h-1zM300 340h1v25h-1zM302 340h1v25h-1zM304 340h1v25h-1zM306 340h1v25h-1zM308 340h1v25h-1zM310 340h1v25h-1zM312 340h1v25h-1zM314 340h1v25h-1zM316 340h1v25h-1zM318 340h1v25h-1zM320 340h1v25h-1zM322 340h1v25h-1zM324 340h1v25h-1zM326 340h1v25h-1zM328 340h1v25h-1zM330 340h1v25h-1zM332 340h1v25h-1zM334 340h1v25h-1zM336 340h1v25h-1zM338 340h1v25h-1zM340 340h1v25h-1zM342 340h1v25h-1zM344 340h1v25h-1zM346 340h1v25h-1zM348 340h1v25h-1zM350 340h1v25h-1zM352 340h1v25h-1zM354 340h1v25h-1zM356 340h1v25h-1zM358 340h1v25h-1zM360 340h1v25h-1zM362 340h1v25h-1zM364 340h1v25h-1zM366 340h1v25h-1zM368 340h1v25h-1zM370 340h1v25h-1zM372 340h1v25h-1zM374 340h1v25h-1zM376 340h1v25h-1zM378 340h1v25h-1zM380 340h1v25h-1zM382 340h1v25h-1zM384 340h1v25h-1zM386 340h1v25h-1zM388 340h1v25h-1zM390 340h1v25h-1zM392 340h1v25h-1zM394 340h1v25h-1zM396 340h1v25h-1zM398 340h1v25h-1zM400 340h1v25h-1zM402 340h1v25h-1zM404 340h1v25h-1zM406 340h1v25h-1zM408 340h1v25h-1zM410 340h1v25h-1zM412 340h1v25h-1zM414 340h1v25h-1zM416 340h1v25h-1zM418 340h1v25h-1zM420 340h1v25h-1zM422 340h1v25h-1zM424 340h1v25h-1zM426 340h1v25h-1zM428 340h1v25h-1zM430 340h1v25h-1zM432 340h1v25h-1zM434 340h1v25h-1zM436 340h1v25h-1zM438 340h1v25h-1zM440 340h1v25h-1zM442 340h1v25h-1zM444 340h1v25h-1zM446 340h1v25h-1zM448 340h1v25h-1zM450 340h1v25h-1zM452 340h1v25h-1zM454 340h1v25h-1zM456 340h1v25h-1zM458 340h1v25h-1zM460 340h1v25h-1zM462 340h1v25h-1zM464 340h1v25h-1zM466 340h1v25h-1zM468 340h1v25h-1zM470 340h1v25h-1zM472 340h1v25h-1zM474 340h1v25h-1zM476 340h1v25h-1zM478 340h1v25h-1zM480 340h1v25h-1zM482 340h1v25h-1zM484 340h1v25h-1zM486 340h1v25h-1zM488 340h1v25h-1zM490 340h1v25h-1zM492 340h1v25h-1zM494 340h1v25h-1zM496 340h1v25h-1zM498 340h1v25h-1zM500 340h1v25h-1zM502 340h1v25h-1zM504 340h1v25h-1zM506 340h1v25h-1zM508 340h1v25h-1zM510 340h1v25h-1zM512 340h1v25h-1zM514 340h1v25h-1zM516 340h1v25h-1zM518 340h1v25h-1zM520 340h1v25h-1zM522 340h1v25h-1zM524 340h1v25h-1zM526 340h1v25h-1zM528 340h1v25h-1zM530 340h1v25h-1zM532 340h1v25h-1zM534 340h1v25h-1zM536 340h1v25h-1zM538 340h1v25h-1zM540 340h1v25h-1zM542 340h1v25h-1zM544 340h1v25h-1zM546 340h1v25h-1zM548 340h1v25h-1zM550 340h1v25h-1zM552 340h1v25h-1zM554 340h1v25h-1zM556 340h1v25h-1zM558 340h1v25h-1zM560 340h1v25h-1zM562 340h1v25h-1zM564 340h1v25h-1zM566 340h1v25h-1zM568 340h1v25h-1zM570 340h1v25h-1zM572 340h1v25h-1zM574 340h1v25h-1zM576 340h1v25h-1zM578 340h1v25h-1zM580 340h1v25h-1zM582 340h1v25h-1zM584 340h1v25h-1zM586 340h1v25h-1zM588 340h1v25h-1zM590 340h1v25h-1zM592 340h1v25h-1zM594 340h1v25h-1zM596 340h1v25h-1zM598 340h1v25h-1zM600 340h1v25h-1zM602 340h1v25h-1zM604 340h1v25h-1zM606 340h1v25h-1zM608 340h1v25h-1zM610 340h1v25h-1zM612 340h1v25h-1zM614 340h1v25h-1zM616 340h1v25h-1zM618 340h1v25h-1zM620 340h1v25h-1zM622 340h1v25h-1zM624 340h1v25h-1zM626 340h1v25h-1zM628 340h1v25h-1zM630 340h1v25h-1zM632 340h1v25h-1zM634 340h1v25h-1zM636 340h1v25h-1zM638 340h1v25h-1zM640 340h1v25h-1zM642 340h1v25h-1zM644 340h1v25h-1zM646 340h1v25h-1zM648 340h3v25h-3zM652 340h19v25h-19zM672 340h5v25h-5zM678 340h1v25h-1zM680 340h1v25h-1zM682 340h1v25h-1zM684 340h1v25h-1zM686 340h1v25h-1zM688 340h1v25h-1zM690 340h1v25h-1zM692 340h1v25h-1zM694 340h1v25h-1zM696 340h1v25h-1zM698 340h1v25h-1zM700 340h1v25h-1zM702 340h1v25h-1zM704 340h1v25h-1zM706 340h1v25h-1zM708 340h3v25h-3zM712 340h18v25h-18zM0 366h11v18h-11zM72 366h11v18h-11zM84 366h1v18h-1zM86 366h1v18h-1zM673 366h1v18h-1zM728 366h2v18h-2zM1 326h1v13h-1zM3 308h1v5h-1zM197 308h1v5h-1zM4 236h1v51h-1zM10 236h1v51h-1zM15 236h3v51h-3zM21 236h3v51h-3zM27 236h3v51h-3zM33 236h2v51h-2zM40 236h1v51h-1zM46 236h1v51h-1zM52 236h1v51h-1zM58 236h1v51h-1zM64 236h1v51h-1zM69 236h2v51h-2zM75 236h3v51h-3zM81 236h3v51h-3zM87 236h3v51h-3zM93 236h2v51h-2zM100 236h1v51h-1zM106 236h1v51h-1zM112 236h1v51h-1zM118 236h1v51h-1zM124 236h1v51h-1zM130 236h1v51h-1zM136 236h1v51h-1zM142 236h1v51h-1zM148 236h1v51h-1zM154 236h1v51h-1zM160 236h1v51h-1zM166 236h1v51h-1zM172 236h1v51h-1zM178 236h1v51h-1zM184 236h1v51h-1zM190 236h1v51h-1zM196 236h1v51h-1zM202 236h1v51h-1zM208 236h1v51h-1zM214 236h1v51h-1zM220 236h1v51h-1zM226 236h1v51h-1zM232 236h1v51h-1zM238 236h1v51h-1zM244 236h1v51h-1zM250 236h1v51h-1zM256 236h1v51h-1zM262 236h1v51h-1zM268 236h1v51h-1zM274 236h1v51h-1zM280 236h1v51h-1zM286 236h1v51h-1zM292 236h1v51h-1zM298 236h1v51h-1zM304 236h1v51h-1zM310 236h1v51h-1zM316 236h1v51h-1zM322 236h1v51h-1zM328 236h1v51h-1zM334 236h1v51h-1zM340 236h1v51h-1zM346 236h1v51h-1zM352 236h1v51h-1zM358 236h1v51h-1zM364 236h1v51h-1zM370 236h1v51h-1zM376 236h1v51h-1zM382 236h1v51h-1zM388 236h1v51h-1zM394 236h1v51h-1zM400 236h1v51h-1zM406 236h1v51h-1zM412 236h1v51h-1zM418 236h1v51h-1zM424 236h1v51h-1zM430 236h1v51h-1zM436 236h1v51h-1zM442 236h1v51h-1zM448 236h1v51h-1zM454 236h1v51h-1zM460 236h1v51h-1zM466 236h1v51h-1zM472 236h1v51h-1zM478 236h1v51h-1zM484 236h1v51h-1zM490 236h1v51h-1zM496 236h1v51h-1zM502 236h1v51h-1zM508 236h1v51h-1zM514 236h1v51h-1zM520 236h1v51h-1zM526 236h1v51h-1zM532 236h1v51h-1zM538 236h1v51h-1zM543 236h3v51h-3zM549 236h2v51h-2zM555 236h3v51h-3zM561 236h3v51h-3zM568 236h1v51h-1zM574 236h1v51h-1zM580 236h1v51h-1zM586 236h1v51h-1zM592 236h1v51h-1zM598 236h1v51h-1zM603 236h3v51h-3zM609 236h2v51h-2zM615 236h3v51h-3zM621 236h3v51h-3zM628 236h1v51h-1zM634 236h1v51h-1zM640 236h1v51h-1zM646 236h1v51h-1zM652 236h1v51h-1zM658 236h1v51h-1zM663 236h3v51h-3zM669 236h2v51h-2zM675 236h3v51h-3zM681 236h2v51h-2zM688 236h1v51h-1zM694 236h1v51h-1zM700 236h1v51h-1zM706 236h1v51h-1zM712 236h1v51h-1zM718 236h1v51h-1zM723 236h3v51h-3zM729 236h1v51h-1zM5 290h1v23h-1zM7 270h1v17h-1zM8 134h1v23h-1zM10 134h1v23h-1zM12 134h1v23h-1zM14 134h1v23h-1zM548 134h1v23h-1zM550 134h1v23h-1zM552 134h4v23h-4zM9 249h1v38h-1zM12 366h13v17h-13zM26 366h1v17h-1zM28 366h1v17h-1zM30 366h1v17h-1zM32 366h1v17h-1zM34 366h1v17h-1zM36 366h1v17h-1zM38 366h1v17h-1zM40 366h1v17h-1zM42 366h1v17h-1zM44 366h1v17h-1zM46 366h1v17h-1zM48 366h1v17h-1zM50 366h1v17h-1zM52 366h1v17h-1zM54 366h1v17h-1zM56 366h15v17h-15zM83 366h1v17h-1zM13 203h1v6h-1zM15 177h1v6h-1zM27 177h1v6h-1zM16 133h1v24h-1zM18 133h1v24h-1zM20 133h1v24h-1zM22 133h1v24h-1zM540 133h1v24h-1zM542 133h1v24h-1zM544 133h1v24h-1zM546 133h1v24h-1zM17 170h1v13h-1zM19 172h1v11h-1zM21 173h1v10h-1zM23 175h1v8h-1zM24 132h1v25h-1zM26 132h1v25h-1zM28 132h1v25h-1zM30 132h1v25h-1zM32 132h1v25h-1zM34 132h1v25h-1zM36 132h1v25h-1zM38 132h1v25h-1zM40 132h1v25h-1zM42 132h1v25h-1zM44 132h1v25h-1zM46 132h1v25h-1zM48 132h1v25h-1zM50 132h1v25h-1zM52 132h1v25h-1zM54 132h1v25h-1zM56 132h1v25h-1zM58 132h1v25h-1zM60 132h1v25h-1zM62 132h1v25h-1zM64 132h1v25h-1zM66 132h1v25h-1zM68 132h1v25h-1zM70 132h1v25h-1zM72 132h1v25h-1zM74 132h1v25h-1zM76 132h1v25h-1zM78 132h1v25h-1zM80 132h1v25h-1zM82 132h1v25h-1zM84 132h1v25h-1zM86 132h1v25h-1zM88 132h1v25h-1zM90 132h1v25h-1zM92 132h1v25h-1zM94 132h1v25h-1zM96 132h1v25h-1zM98 132h1v25h-1zM100 132h1v25h-1zM102 132h1v25h-1zM104 132h1v25h-1zM106 132h1v25h-1zM108 132h1v25h-1zM110 132h1v25h-1zM112 132h1v25h-1zM114 132h1v25h-1zM116 132h1v25h-1zM118 132h1v25h-1zM120 132h1v25h-1zM122 132h1v25h-1zM124 132h1v25h-1zM126 132h1v25h-1zM128 132h1v25h-1zM130 132h1v25h-1zM132 132h1v25h-1zM134 132h1v25h-1zM136 132h1v25h-1zM138 132h1v25h-1zM140 132h1v25h-1zM142 132h1v25h-1zM144 132h1v25h-1zM146 132h1v25h-1zM148 132h1v25h-1zM150 132h1v25h-1zM152 132h1v25h-1zM154 132h1v25h-1zM156 132h1v25h-1zM158 132h1v25h-1zM160 132h1v25h-1zM162 132h1v25h-1zM164 132h1v25h-1zM166 132h1v25h-1zM168 132h1v25h-1zM170 132h1v25h-1zM172 132h1v25h-1zM174 132h1v25h-1zM176 132h1v25h-1zM178 132h1v25h-1zM180 132h1v25h-1zM182 132h1v25h-1zM184 132h1v25h-1zM186 132h1v25h-1zM188 132h1v25h-1zM190 132h1v25h-1zM192 132h1v25h-1zM194 132h1v25h-1zM196 132h1v25h-1zM198 132h1v25h-1zM200 132h1v25h-1zM202 132h1v25h-1zM204 132h1v25h-1zM206 132h1v25h-1zM208 132h1v25h-1zM210 132h1v25h-1zM212 132h1v25h-1zM214 132h1v25h-1zM216 132h1v25h-1zM218 132h1v25h-1zM220 132h1v25h-1zM222 132h1v25h-1zM224 132h1v25h-1zM226 132h1v25h-1zM228 132h1v25h-1zM230 132h1v25h-1zM232 132h1v25h-1zM234 132h1v25h-1zM236 132h1v25h-1zM238 132h1v25h-1zM240 132h1v25h-1zM242 132h1v25h-1zM244 132h1v25h-1zM246 132h1v25h-1zM248 132h1v25h-1zM250 132h1v25h-1zM252 132h1v25h-1zM254 132h1v25h-1zM256 132h1v25h-1zM258 132h1v25h-1zM260 132h1v25h-1zM262 132h1v25h-1zM264 132h1v25h-1zM266 132h1v25h-1zM268 132h1v25h-1zM270 132h1v25h-1zM272 132h1v25h-1zM274 132h1v25h-1zM276 132h1v25h-1zM278 132h1v25h-1zM280 132h1v25h-1zM282 132h1v25h-1zM284 132h1v25h-1zM286 132h1v25h-1zM288 132h1v25h-1zM290 132h1v25h-1zM292 132h1v25h-1zM294 132h1v25h-1zM296 132h1v25h-1zM298 132h1v25h-1zM300 132h1v25h-1zM302 132h1v25h-1zM304 132h1v25h-1zM306 132h1v25h-1zM308 132h1v25h-1zM310 132h1v25h-1zM312 132h1v25h-1zM314 132h1v25h-1zM316 132h1v25h-1zM318 132h1v25h-1zM320 132h1v25h-1zM322 132h1v25h-1zM324 132h1v25h-1zM326 132h1v25h-1zM328 132h1v25h-1zM330 132h1v25h-1zM332 132h1v25h-1zM334 132h1v25h-1zM336 132h1v25h-1zM338 132h1v25h-1zM340 132h1v25h-1zM342 132h1v25h-1zM344 132h1v25h-1zM346 132h1v25h-1zM348 132h1v25h-1zM350 132h1v25h-1zM352 132h1v25h-1zM354 132h1v25h-1zM356 132h1v25h-1zM358 132h1v25h-1zM360 132h1v25h-1zM362 132h1v25h-1zM364 132h1v25h-1zM366 132h1v25h-1zM368 132h1v25h-1zM370 132h1v25h-1zM372 132h1v25h-1zM374 132h1v25h-1zM376 132h1v25h-1zM378 132h1v25h-1zM380 132h11v25h-11zM392 132h9v25h-9zM402 132h1v25h-1zM404 132h1v25h-1zM406 132h1v25h-1zM408 132h1v25h-1zM410 132h1v25h-1zM412 132h1v25h-1zM414 132h1v25h-1zM416 132h1v25h-1zM418 132h1v25h-1zM420 132h1v25h-1zM422 132h1v25h-1zM424 132h1v25h-1zM426 132h1v25h-1zM428 132h1v25h-1zM430 132h1v25h-1zM432 132h19v25h-19zM452 132h7v25h-7zM460 132h1v25h-1zM462 132h1v25h-1zM464 132h1v25h-1zM466 132h1v25h-1zM468 132h1v25h-1zM470 132h1v25h-1zM472 132h1v25h-1zM474 132h1v25h-1zM476 132h1v25h-1zM478 132h1v25h-1zM480 132h1v25h-1zM482 132h1v25h-1zM484 132h1v25h-1zM486 132h1v25h-1zM488 132h1v25h-1zM490 132h1v25h-1zM492 132h19v25h-19zM512 132h7v25h-7zM520 132h1v25h-1zM522 132h1v25h-1zM524 132h1v25h-1zM526 132h1v25h-1zM528 132h1v25h-1zM530 132h1v25h-1zM532 132h1v25h-1zM534 132h1v25h-1zM536 132h1v25h-1zM538 132h1v25h-1zM25 176h1v7h-1zM25 366h1v1h-1zM27 340h1v6h-1zM29 179h1v4h-1zM29 314h1v13h-1zM33 181h1v2h-1zM33 288h1v2h-1zM535 288h1v2h-1zM35 236h1v35h-1zM37 236h1v17h-1zM487 236h1v17h-1zM39 186h1v23h-1zM39 210h1v23h-1zM40 130h1v1h-1zM42 130h1v1h-1zM44 130h1v1h-1zM46 130h1v1h-1zM48 130h1v1h-1zM518 130h3v1h-3zM522 130h1v1h-1zM524 130h1v1h-1zM41 187h1v22h-1zM41 210h1v3h-1zM43 188h1v5h-1zM50 129h1v2h-1zM52 129h1v2h-1zM54 129h1v2h-1zM56 129h1v2h-1zM510 129h1v2h-1zM512 129h6v2h-6zM55 379h1v4h-1zM57 360h1v5h-1zM58 128h1v3h-1zM60 128h1v3h-1zM62 128h1v3h-1zM64 128h1v3h-1zM66 128h1v3h-1zM68 128h1v3h-1zM504 128h6v3h-6zM59 342h1v23h-1zM61 323h1v16h-1zM63 303h1v10h-1zM65 281h1v6h-1zM67 258h1v3h-1zM69 234h1v1h-1zM70 127h1v4h-1zM72 127h1v4h-1zM74 127h1v4h-1zM76 127h1v4h-1zM78 127h1v4h-1zM80 127h1v4h-1zM496 127h8v4h-8zM75 211h1v24h-1zM77 213h1v22h-1zM79 214h1v21h-1zM81 216h1v19h-1zM721 216h1v19h-1zM82 126h1v5h-1zM84 126h1v5h-1zM86 126h1v5h-1zM88 126h1v5h-1zM90 126h1v5h-1zM92 126h1v5h-1zM94 126h1v5h-1zM96 126h1v5h-1zM98 126h1v5h-1zM488 126h1v5h-1zM490 126h1v5h-1zM492 126h4v5h-4zM83 217h1v18h-1zM85 218h1v17h-1zM85 340h1v24h-1zM87 220h1v15h-1zM601 220h1v15h-1zM661 220h1v15h-1zM87 340h1v5h-1zM613 340h1v5h-1zM677 340h1v5h-1zM88 366h1v19h-1zM90 366h1v19h-1zM92 366h1v19h-1zM94 366h1v19h-1zM96 366h1v19h-1zM716 366h12v19h-12zM89 221h1v14h-1zM541 221h1v14h-1zM89 314h1v12h-1zM93 224h1v11h-1zM95 226h1v9h-1zM95 236h1v32h-1zM97 227h1v8h-1zM97 236h1v12h-1zM481 236h1v12h-1zM98 366h1v20h-1zM100 366h1v20h-1zM102 366h1v20h-1zM104 366h1v20h-1zM106 366h1v20h-1zM108 366h1v20h-1zM708 366h3v20h-3zM712 366h4v20h-4zM100 125h1v6h-1zM102 125h1v6h-1zM104 125h1v6h-1zM106 125h1v6h-1zM108 125h1v6h-1zM110 125h1v6h-1zM112 125h1v6h-1zM114 125h1v6h-1zM116 125h1v6h-1zM118 125h1v6h-1zM120 125h1v6h-1zM122 125h1v6h-1zM124 125h1v6h-1zM126 125h1v6h-1zM128 125h1v6h-1zM130 125h1v6h-1zM132 125h1v6h-1zM172 125h1v6h-1zM174 125h1v6h-1zM176 125h1v6h-1zM178 125h1v6h-1zM180 125h1v6h-1zM182 125h1v6h-1zM184 125h1v6h-1zM186 125h1v6h-1zM188 125h1v6h-1zM190 125h1v6h-1zM192 125h1v6h-1zM194 125h1v6h-1zM196 125h1v6h-1zM198 125h1v6h-1zM200 125h1v6h-1zM202 125h1v6h-1zM204 125h1v6h-1zM206 125h1v6h-1zM208 125h1v6h-1zM210 125h1v6h-1zM212 125h1v6h-1zM214 125h1v6h-1zM216 125h1v6h-1zM218 125h1v6h-1zM220 125h1v6h-1zM222 125h1v6h-1zM224 125h1v6h-1zM226 125h1v6h-1zM228 125h1v6h-1zM230 125h1v6h-1zM232 125h1v6h-1zM234 125h1v6h-1zM236 125h1v6h-1zM238 125h1v6h-1zM240 125h1v6h-1zM242 125h1v6h-1zM244 125h1v6h-1zM246 125h1v6h-1zM248 125h1v6h-1zM250 125h1v6h-1zM252 125h1v6h-1zM254 125h1v6h-1zM256 125h1v6h-1zM258 125h1v6h-1zM478 125h1v6h-1zM480 125h1v6h-1zM482 125h1v6h-1zM484 125h1v6h-1zM486 125h1v6h-1zM110 366h1v21h-1zM112 366h1v21h-1zM114 366h1v21h-1zM116 366h2v21h-2zM698 366h1v21h-1zM700 366h1v21h-1zM702 366h1v21h-1zM704 366h4v21h-4zM115 375h1v12h-1zM117 355h1v10h-1zM249 355h1v10h-1zM118 366h8v22h-8zM690 366h1v22h-1zM692 366h1v22h-1zM694 366h1v22h-1zM696 366h1v22h-1zM119 334h1v5h-1zM121 312h1v1h-1zM125 263h1v24h-1zM143 263h1v24h-1zM126 366h5v23h-5zM132 366h4v23h-4zM682 366h1v23h-1zM684 366h1v23h-1zM686 366h1v23h-1zM688 366h1v23h-1zM127 250h1v11h-1zM129 252h1v35h-1zM133 255h1v6h-1zM134 124h1v7h-1zM136 124h1v7h-1zM138 124h1v7h-1zM140 124h1v7h-1zM142 124h1v7h-1zM144 124h1v7h-1zM146 124h1v7h-1zM148 124h1v7h-1zM150 124h1v7h-1zM152 124h1v7h-1zM154 124h1v7h-1zM156 124h1v7h-1zM158 124h1v7h-1zM160 124h1v7h-1zM162 124h1v7h-1zM164 124h1v7h-1zM166 124h1v7h-1zM168 124h1v7h-1zM170 124h1v7h-1zM260 124h1v7h-1zM262 124h1v7h-1zM264 124h1v7h-1zM266 124h1v7h-1zM268 124h1v7h-1zM270 124h1v7h-1zM272 124h1v7h-1zM274 124h1v7h-1zM276 124h1v7h-1zM278 124h1v7h-1zM280 124h1v7h-1zM282 124h1v7h-1zM284 124h1v7h-1zM286 124h1v7h-1zM288 124h1v7h-1zM468 124h1v7h-1zM470 124h1v7h-1zM472 124h1v7h-1zM474 124h1v7h-1zM476 124h1v7h-1zM135 256h1v31h-1zM597 256h1v31h-1zM717 256h1v31h-1zM136 366h7v24h-7zM674 366h1v24h-1zM676 366h1v24h-1zM678 366h1v24h-1zM680 366h1v24h-1zM137 258h1v29h-1zM139 259h1v2h-1zM141 261h1v26h-1zM143 366h1v15h-1zM144 366h1v25h-1zM146 366h1v25h-1zM148 366h1v25h-1zM150 366h1v25h-1zM152 366h1v25h-1zM154 366h1v25h-1zM156 366h1v25h-1zM158 366h1v25h-1zM160 366h1v25h-1zM162 366h1v25h-1zM164 366h1v25h-1zM166 366h1v25h-1zM168 366h1v25h-1zM170 366h1v25h-1zM172 366h1v25h-1zM174 366h17v25h-17zM192 366h11v25h-11zM204 366h1v25h-1zM206 366h1v25h-1zM208 366h1v25h-1zM210 366h1v25h-1zM212 366h1v25h-1zM214 366h1v25h-1zM216 366h1v25h-1zM218 366h1v25h-1zM220 366h1v25h-1zM222 366h1v25h-1zM224 366h1v25h-1zM226 366h1v25h-1zM228 366h1v25h-1zM230 366h1v25h-1zM232 366h1v25h-1zM234 366h17v25h-17zM252 366h9v25h-9zM262 366h1v25h-1zM264 366h1v25h-1zM266 366h1v25h-1zM268 366h1v25h-1zM270 366h1v25h-1zM272 366h1v25h-1zM274 366h1v25h-1zM276 366h1v25h-1zM278 366h1v25h-1zM280 366h1v25h-1zM282 366h1v25h-1zM284 366h1v25h-1zM286 366h1v25h-1zM288 366h1v25h-1zM290 366h1v25h-1zM292 366h1v25h-1zM294 366h1v25h-1zM296 366h1v25h-1zM298 366h1v25h-1zM300 366h1v25h-1zM302 366h1v25h-1zM304 366h1v25h-1zM306 366h1v25h-1zM308 366h1v25h-1zM310 366h1v25h-1zM312 366h1v25h-1zM314 366h1v25h-1zM316 366h1v25h-1zM318 366h1v25h-1zM320 366h1v25h-1zM322 366h1v25h-1zM324 366h1v25h-1zM326 366h1v25h-1zM328 366h1v25h-1zM330 366h1v25h-1zM332 366h1v25h-1zM334 366h1v25h-1zM336 366h1v25h-1zM338 366h1v25h-1zM340 366h1v25h-1zM342 366h1v25h-1zM344 366h1v25h-1zM346 366h1v25h-1zM348 366h1v25h-1zM350 366h1v25h-1zM352 366h1v25h-1zM354 366h1v25h-1zM356 366h1v25h-1zM358 366h1v25h-1zM360 366h1v25h-1zM362 366h1v25h-1zM364 366h1v25h-1zM366 366h1v25h-1zM368 366h1v25h-1zM370 366h1v25h-1zM372 366h1v25h-1zM374 366h1v25h-1zM376 366h1v25h-1zM378 366h1v25h-1zM380 366h1v25h-1zM382 366h1v25h-1zM384 366h1v25h-1zM386 366h1v25h-1zM388 366h1v25h-1zM390 366h1v25h-1zM392 366h1v25h-1zM394 366h1v25h-1zM396 366h1v25h-1zM398 366h1v25h-1zM400 366h1v25h-1zM402 366h1v25h-1zM404 366h1v25h-1zM406 366h1v25h-1zM408 366h1v25h-1zM410 366h1v25h-1zM412 366h1v25h-1zM414 366h1v25h-1zM416 366h1v25h-1zM418 366h1v25h-1zM420 366h1v25h-1zM422 366h1v25h-1zM424 366h1v25h-1zM426 366h1v25h-1zM428 366h1v25h-1zM430 366h1v25h-1zM432 366h1v25h-1zM434 366h1v25h-1zM436 366h1v25h-1zM438 366h1v25h-1zM440 366h1v25h-1zM442 366h1v25h-1zM444 366h1v25h-1zM446 366h1v25h-1zM448 366h1v25h-1zM450 366h1v25h-1zM452 366h1v25h-1zM454 366h1v25h-1zM456 366h1v25h-1zM458 366h1v25h-1zM460 366h1v25h-1zM462 366h1v25h-1zM464 366h1v25h-1zM466 366h1v25h-1zM468 366h1v25h-1zM470 366h1v25h-1zM472 366h1v25h-1zM474 366h1v25h-1zM476 366h1v25h-1zM478 366h1v25h-1zM480 366h1v25h-1zM482 366h1v25h-1zM484 366h1v25h-1zM486 366h1v25h-1zM488 366h1v25h-1zM490 366h1v25h-1zM492 366h1v25h-1zM494 366h1v25h-1zM496 366h1v25h-1zM498 366h1v25h-1zM500 366h1v25h-1zM502 366h1v25h-1zM504 366h1v25h-1zM506 366h1v25h-1zM508 366h1v25h-1zM510 366h1v25h-1zM512 366h1v25h-1zM514 366h1v25h-1zM516 366h1v25h-1zM518 366h1v25h-1zM520 366h1v25h-1zM522 366h1v25h-1zM524 366h1v25h-1zM526 366h1v25h-1zM528 366h1v25h-1zM530 366h1v25h-1zM532 366h1v25h-1zM534 366h1v25h-1zM536 366h1v25h-1zM538 366h1v25h-1zM540 366h1v25h-1zM542 366h1v25h-1zM544 366h1v25h-1zM546 366h1v25h-1zM548 366h1v25h-1zM550 366h1v25h-1zM552 366h1v25h-1zM554 366h1v25h-1zM556 366h1v25h-1zM558 366h1v25h-1zM560 366h1v25h-1zM562 366h1v25h-1zM564 366h1v25h-1zM566 366h1v25h-1zM568 366h1v25h-1zM570 366h1v25h-1zM572 366h1v25h-1zM574 366h1v25h-1zM576 366h1v25h-1zM578 366h1v25h-1zM580 366h1v25h-1zM582 366h1v25h-1zM584 366h1v25h-1zM586 366h1v25h-1zM588 366h1v25h-1zM590 366h1v25h-1zM592 366h1v25h-1zM594 366h1v25h-1zM596 366h1v25h-1zM598 366h1v25h-1zM600 366h1v25h-1zM602 366h1v25h-1zM604 366h1v25h-1zM606 366h1v25h-1zM608 366h1v25h-1zM610 366h1v25h-1zM612 366h1v25h-1zM614 366h1v25h-1zM616 366h1v25h-1zM618 366h1v25h-1zM620 366h1v25h-1zM622 366h1v25h-1zM624 366h1v25h-1zM626 366h1v25h-1zM628 366h1v25h-1zM630 366h1v25h-1zM632 366h1v25h-1zM634 366h1v25h-1zM636 366h1v25h-1zM638 366h1v25h-1zM640 366h1v25h-1zM642 366h1v25h-1zM644 366h1v25h-1zM646 366h1v25h-1zM648 366h1v25h-1zM650 366h1v25h-1zM652 366h1v25h-1zM654 366h1v25h-1zM656 366h1v25h-1zM658 366h1v25h-1zM660 366h1v25h-1zM662 366h1v25h-1zM664 366h1v25h-1zM666 366h1v25h-1zM668 366h1v25h-1zM670 366h1v25h-1zM672 366h1v25h-1zM145 264h1v23h-1zM145 340h1v22h-1zM147 266h1v21h-1zM147 340h1v3h-1zM609 340h1v3h-1zM149 267h1v20h-1zM149 314h1v9h-1zM153 271h1v11h-1zM160 392h1v1h-1zM162 392h1v1h-1zM164 392h1v1h-1zM166 392h1v1h-1zM648 392h1v1h-1zM650 392h1v1h-1zM652 392h1v1h-1zM654 392h1v1h-1zM656 392h1v1h-1zM168 392h1v2h-1zM170 392h1v2h-1zM172 392h4v2h-4zM640 392h1v2h-1zM642 392h1v2h-1zM644 392h1v2h-1zM646 392h1v2h-1zM173 389h1v2h-1zM176 392h8v3h-8zM628 392h1v3h-1zM630 392h1v3h-1zM632 392h1v3h-1zM634 392h1v3h-1zM636 392h1v3h-1zM638 392h1v3h-1zM177 343h1v22h-1zM179 317h1v22h-1zM181 294h1v19h-1zM183 296h1v17h-1zM184 392h7v4h-7zM616 392h1v4h-1zM618 392h1v4h-1zM620 392h1v4h-1zM622 392h1v4h-1zM624 392h1v4h-1zM626 392h1v4h-1zM185 297h1v16h-1zM187 299h1v14h-1zM189 301h1v12h-1zM192 392h10v5h-10zM414 392h1v5h-1zM416 392h1v5h-1zM418 392h1v5h-1zM420 392h1v5h-1zM422 392h1v5h-1zM424 392h1v5h-1zM426 392h1v5h-1zM428 392h1v5h-1zM430 392h1v5h-1zM432 392h1v5h-1zM434 392h1v5h-1zM436 392h1v5h-1zM438 392h1v5h-1zM440 392h1v5h-1zM442 392h1v5h-1zM444 392h1v5h-1zM446 392h1v5h-1zM448 392h1v5h-1zM450 392h1v5h-1zM452 392h1v5h-1zM454 392h1v5h-1zM456 392h1v5h-1zM458 392h1v5h-1zM460 392h1v5h-1zM462 392h1v5h-1zM464 392h1v5h-1zM466 392h1v5h-1zM468 392h1v5h-1zM470 392h1v5h-1zM472 392h1v5h-1zM602 392h1v5h-1zM604 392h1v5h-1zM606 392h1v5h-1zM608 392h1v5h-1zM610 392h1v5h-1zM612 392h1v5h-1zM614 392h1v5h-1zM193 304h1v9h-1zM195 306h1v7h-1zM199 309h1v4h-1zM201 311h1v2h-1zM202 392h1v6h-1zM204 392h1v6h-1zM206 392h1v6h-1zM208 392h1v6h-1zM210 392h1v6h-1zM382 392h1v6h-1zM384 392h1v6h-1zM386 392h1v6h-1zM388 392h1v6h-1zM390 392h1v6h-1zM392 392h1v6h-1zM394 392h1v6h-1zM396 392h1v6h-1zM398 392h1v6h-1zM400 392h1v6h-1zM402 392h1v6h-1zM404 392h1v6h-1zM406 392h1v6h-1zM408 392h1v6h-1zM410 392h1v6h-1zM412 392h1v6h-1zM474 392h1v6h-1zM476 392h1v6h-1zM478 392h1v6h-1zM480 392h1v6h-1zM482 392h1v6h-1zM484 392h1v6h-1zM486 392h1v6h-1zM488 392h1v6h-1zM490 392h1v6h-1zM492 392h1v6h-1zM494 392h1v6h-1zM496 392h1v6h-1zM498 392h1v6h-1zM500 392h1v6h-1zM502 392h1v6h-1zM504 392h1v6h-1zM506 392h1v6h-1zM508 392h1v6h-1zM510 392h1v6h-1zM512 392h1v6h-1zM514 392h1v6h-1zM516 392h1v6h-1zM518 392h1v6h-1zM520 392h1v6h-1zM578 392h1v6h-1zM580 392h1v6h-1zM582 392h1v6h-1zM584 392h1v6h-1zM586 392h1v6h-1zM588 392h1v6h-1zM590 392h1v6h-1zM592 392h1v6h-1zM594 392h1v6h-1zM596 392h1v6h-1zM598 392h1v6h-1zM600 392h1v6h-1zM203 366h1v12h-1zM663 366h1v12h-1zM205 315h1v24h-1zM205 340h1v18h-1zM207 316h1v21h-1zM212 392h1v7h-1zM214 392h1v7h-1zM216 392h1v7h-1zM218 392h1v7h-1zM220 392h1v7h-1zM222 392h1v7h-1zM360 392h1v7h-1zM362 392h1v7h-1zM364 392h1v7h-1zM366 392h1v7h-1zM368 392h1v7h-1zM370 392h1v7h-1zM372 392h1v7h-1zM374 392h1v7h-1zM376 392h1v7h-1zM378 392h1v7h-1zM380 392h1v7h-1zM522 392h1v7h-1zM524 392h1v7h-1zM526 392h1v7h-1zM528 392h1v7h-1zM530 392h1v7h-1zM532 392h1v7h-1zM534 392h1v7h-1zM536 392h1v7h-1zM538 392h1v7h-1zM540 392h1v7h-1zM542 392h1v7h-1zM544 392h1v7h-1zM546 392h1v7h-1zM548 392h1v7h-1zM550 392h1v7h-1zM552 392h1v7h-1zM554 392h1v7h-1zM556 392h1v7h-1zM558 392h1v7h-1zM560 392h1v7h-1zM562 392h1v7h-1zM564 392h1v7h-1zM566 392h1v7h-1zM568 392h1v7h-1zM570 392h1v7h-1zM572 392h1v7h-1zM574 392h1v7h-1zM576 392h1v7h-1zM224 392h1v8h-1zM226 392h1v8h-1zM228 392h1v8h-1zM230 392h1v8h-1zM232 392h4v8h-4zM340 392h1v8h-1zM342 392h1v8h-1zM344 392h1v8h-1zM346 392h1v8h-1zM348 392h1v8h-1zM350 392h1v8h-1zM352 392h1v8h-1zM354 392h1v8h-1zM356 392h1v8h-1zM358 392h1v8h-1zM233 374h1v17h-1zM235 348h1v17h-1zM241 348h1v17h-1zM236 392h15v9h-15zM252 392h4v9h-4zM316 392h1v9h-1zM318 392h1v9h-1zM320 392h1v9h-1zM322 392h1v9h-1zM324 392h1v9h-1zM326 392h1v9h-1zM328 392h1v9h-1zM330 392h1v9h-1zM332 392h1v9h-1zM334 392h1v9h-1zM336 392h1v9h-1zM338 392h1v9h-1zM237 344h1v21h-1zM239 346h1v19h-1zM243 349h1v16h-1zM647 349h1v16h-1zM245 351h1v14h-1zM247 353h1v12h-1zM253 359h1v6h-1zM255 361h1v4h-1zM256 392h5v10h-5zM262 392h1v10h-1zM264 392h1v10h-1zM266 392h1v10h-1zM268 392h1v10h-1zM270 392h1v10h-1zM272 392h1v10h-1zM274 392h1v10h-1zM276 392h1v10h-1zM278 392h1v10h-1zM280 392h1v10h-1zM282 392h1v10h-1zM284 392h1v10h-1zM286 392h1v10h-1zM288 392h1v10h-1zM290 392h1v10h-1zM292 392h1v10h-1zM294 392h1v10h-1zM296 392h1v10h-1zM298 392h1v10h-1zM300 392h1v10h-1zM302 392h1v10h-1zM304 392h1v10h-1zM306 392h1v10h-1zM308 392h1v10h-1zM310 392h1v10h-1zM312 392h1v10h-1zM314 392h1v10h-1zM257 363h1v2h-1zM261 367h1v24h-1zM263 369h1v2h-1zM290 123h1v8h-1zM292 123h1v8h-1zM294 123h1v8h-1zM296 123h1v8h-1zM298 123h1v8h-1zM300 123h1v8h-1zM302 123h1v8h-1zM304 123h1v8h-1zM306 123h1v8h-1zM308 123h1v8h-1zM310 123h1v8h-1zM458 123h3v8h-3zM462 123h1v8h-1zM464 123h1v8h-1zM466 123h1v8h-1zM293 398h1v4h-1zM295 400h1v2h-1zM312 122h1v9h-1zM314 122h1v9h-1zM316 122h1v9h-1zM318 122h1v9h-1zM320 122h1v9h-1zM322 122h1v9h-1zM324 122h1v9h-1zM326 122h1v9h-1zM328 122h1v9h-1zM330 122h1v9h-1zM446 122h5v9h-5zM452 122h6v9h-6zM332 121h1v10h-1zM334 121h1v10h-1zM336 121h1v10h-1zM338 121h1v10h-1zM340 121h1v10h-1zM342 121h1v10h-1zM344 121h1v10h-1zM346 121h1v10h-1zM348 121h1v10h-1zM350 121h1v10h-1zM352 121h1v10h-1zM430 121h1v10h-1zM432 121h14v10h-14zM354 120h1v11h-1zM356 120h1v11h-1zM358 120h1v11h-1zM360 120h1v11h-1zM362 120h1v11h-1zM364 120h1v11h-1zM366 120h1v11h-1zM368 120h1v11h-1zM370 120h1v11h-1zM372 120h19v11h-19zM392 120h11v11h-11zM404 120h1v11h-1zM406 120h1v11h-1zM408 120h1v11h-1zM410 120h1v11h-1zM412 120h1v11h-1zM414 120h1v11h-1zM416 120h1v11h-1zM418 120h1v11h-1zM420 120h1v11h-1zM422 120h1v11h-1zM424 120h1v11h-1zM426 120h1v11h-1zM428 120h1v11h-1zM373 132h1v18h-1zM375 132h1v20h-1zM377 132h1v22h-1zM379 132h1v24h-1zM383 158h1v2h-1zM695 158h1v2h-1zM385 158h1v4h-1zM387 158h1v5h-1zM389 158h1v7h-1zM393 158h1v11h-1zM395 158h1v13h-1zM397 158h1v15h-1zM457 158h1v15h-1zM399 158h1v9h-1zM635 158h1v9h-1zM401 132h1v8h-1zM425 192h1v7h-1zM427 171h1v12h-1zM427 184h1v17h-1zM429 151h1v6h-1zM429 184h1v19h-1zM433 184h1v23h-1zM435 184h1v24h-1zM439 210h1v2h-1zM441 210h1v4h-1zM443 210h1v6h-1zM445 210h1v7h-1zM447 210h1v9h-1zM689 210h1v9h-1zM449 210h1v11h-1zM453 210h1v14h-1zM455 184h1v15h-1zM459 132h1v16h-1zM461 123h1v2h-1zM481 225h1v10h-1zM483 205h1v4h-1zM483 236h1v14h-1zM485 185h1v24h-1zM485 236h1v15h-1zM487 166h1v17h-1zM489 147h1v10h-1zM549 147h1v10h-1zM489 236h1v19h-1zM493 236h1v22h-1zM685 236h1v22h-1zM495 236h1v23h-1zM567 236h1v23h-1zM499 262h1v1h-1zM501 236h1v28h-1zM503 236h1v30h-1zM505 262h1v5h-1zM625 262h1v5h-1zM507 236h1v33h-1zM509 236h1v18h-1zM513 184h1v21h-1zM515 158h1v23h-1zM517 158h1v1h-1zM519 132h1v6h-1zM535 280h1v7h-1zM537 260h1v27h-1zM537 288h1v4h-1zM539 240h1v47h-1zM539 288h1v5h-1zM541 288h1v7h-1zM543 202h1v7h-1zM603 202h1v7h-1zM543 288h1v8h-1zM545 288h1v10h-1zM547 165h1v18h-1zM547 288h1v11h-1zM681 288h1v11h-1zM549 288h1v13h-1zM553 288h1v16h-1zM555 288h1v17h-1zM557 288h1v18h-1zM559 288h1v20h-1zM563 288h1v20h-1zM561 288h1v21h-1zM562 136h9v21h-9zM722 136h1v21h-1zM724 136h1v21h-1zM726 136h1v21h-1zM728 136h2v21h-2zM565 262h1v21h-1zM572 137h5v20h-5zM578 137h1v20h-1zM714 137h1v20h-1zM716 137h1v20h-1zM718 137h1v20h-1zM720 137h1v20h-1zM573 184h1v9h-1zM575 158h1v14h-1zM577 137h1v16h-1zM580 138h1v19h-1zM582 138h1v19h-1zM584 138h1v19h-1zM586 138h1v19h-1zM588 138h1v19h-1zM706 138h1v19h-1zM708 138h1v19h-1zM710 138h1v19h-1zM712 138h1v19h-1zM590 139h1v18h-1zM592 139h1v18h-1zM594 139h1v18h-1zM596 139h1v18h-1zM598 139h1v18h-1zM694 139h3v18h-3zM698 139h1v18h-1zM700 139h1v18h-1zM702 139h1v18h-1zM704 139h1v18h-1zM593 295h1v18h-1zM593 314h1v18h-1zM595 275h1v12h-1zM715 275h1v12h-1zM595 314h1v19h-1zM597 314h1v20h-1zM599 238h1v49h-1zM599 314h1v22h-1zM600 140h1v17h-1zM602 140h1v17h-1zM604 140h1v17h-1zM606 140h1v17h-1zM608 140h1v17h-1zM610 140h1v17h-1zM682 140h9v17h-9zM692 140h2v17h-2zM601 314h1v23h-1zM603 314h1v24h-1zM619 314h1v24h-1zM607 164h1v19h-1zM607 340h1v1h-1zM609 144h1v13h-1zM612 141h19v16h-19zM632 141h2v16h-2zM662 141h1v16h-1zM664 141h1v16h-1zM666 141h1v16h-1zM668 141h3v16h-3zM672 141h10v16h-10zM615 340h1v7h-1zM617 340h1v8h-1zM623 288h1v1h-1zM627 236h1v9h-1zM629 210h1v15h-1zM633 184h1v2h-1zM634 142h3v15h-3zM638 142h1v15h-1zM640 142h1v15h-1zM642 142h1v15h-1zM644 142h1v15h-1zM646 142h1v15h-1zM648 142h1v15h-1zM650 142h1v15h-1zM652 142h1v15h-1zM654 142h1v15h-1zM656 142h1v15h-1zM658 142h1v15h-1zM660 142h1v15h-1zM727 142h1v15h-1zM637 142h1v5h-1zM647 366h1v2h-1zM649 329h1v10h-1zM649 366h1v3h-1zM653 292h1v21h-1zM713 292h1v21h-1zM653 366h1v5h-1zM675 366h1v5h-1zM655 274h1v13h-1zM655 366h1v7h-1zM657 257h1v30h-1zM657 366h1v8h-1zM659 239h1v48h-1zM659 366h1v9h-1zM661 366h1v11h-1zM663 201h1v8h-1zM665 180h1v3h-1zM665 366h1v13h-1zM667 366h1v14h-1zM669 366h1v16h-1zM679 314h1v8h-1zM683 236h1v42h-1zM687 236h1v3h-1zM693 158h1v22h-1zM703 383h1v4h-1zM705 364h1v1h-1zM707 345h1v20h-1zM709 327h1v12h-1zM719 237h1v50h-1zM723 193h1v16h-1zM725 168h1v15h-1z"/>
<path fill="#80ff80" d="M1 114h1v7h-1zM299 114h1v7h-1zM3 114h1v8h-1zM5 113h1v11h-1zM7 113h1v12h-1zM9 113h1v13h-1zM13 112h1v17h-1zM15 112h1v18h-1zM17 113h1v18h-1zM19 114h1v17h-1zM21 115h1v16h-1zM21 133h1v2h-1zM23 117h1v14h-1zM23 133h1v3h-1zM25 118h1v12h-1zM25 132h1v5h-1zM27 120h1v10h-1zM27 132h1v7h-1zM29 121h1v9h-1zM29 132h1v8h-1zM305 132h1v8h-1zM33 124h1v5h-1zM33 132h1v11h-1zM35 125h1v4h-1zM35 132h1v12h-1zM309 132h1v12h-1zM37 126h1v3h-1zM37 132h1v14h-1zM39 128h1v1h-1zM39 132h1v15h-1zM41 130h1v1h-1zM41 132h1v16h-1zM313 132h1v16h-1zM43 132h1v18h-1zM315 132h1v18h-1zM45 132h1v19h-1zM47 133h1v20h-1zM49 135h1v19h-1zM319 135h1v19h-1zM53 138h1v19h-1zM55 139h1v18h-1zM323 139h1v18h-1zM57 140h1v17h-1zM57 158h1v2h-1zM325 158h1v2h-1zM59 142h1v15h-1zM59 158h1v3h-1zM61 143h1v14h-1zM327 143h1v14h-1zM61 158h1v4h-1zM327 158h1v4h-1zM63 145h1v12h-1zM329 145h1v12h-1zM63 158h1v6h-1zM329 158h1v6h-1zM65 146h1v11h-1zM65 158h1v7h-1zM67 148h1v9h-1zM67 158h1v9h-1zM69 149h1v8h-1zM333 149h1v8h-1zM69 158h1v10h-1zM333 158h1v10h-1zM73 152h1v5h-1zM73 158h1v13h-1zM75 153h1v4h-1zM337 153h1v4h-1zM75 158h1v14h-1zM337 158h1v14h-1zM77 155h1v2h-1zM339 155h1v2h-1zM77 158h1v16h-1zM339 158h1v16h-1zM79 156h1v1h-1zM79 158h1v17h-1zM81 158h1v19h-1zM83 159h1v19h-1zM343 159h1v19h-1zM85 160h1v20h-1zM87 162h1v19h-1zM89 163h1v20h-1zM93 166h1v17h-1zM93 184h1v2h-1zM95 168h1v15h-1zM95 184h1v3h-1zM97 169h1v14h-1zM353 169h1v14h-1zM97 184h1v5h-1zM99 171h1v12h-1zM355 171h1v12h-1zM99 184h1v6h-1zM355 184h1v6h-1zM101 172h1v11h-1zM101 184h1v8h-1zM357 184h1v8h-1zM103 174h1v9h-1zM103 184h1v9h-1zM105 175h1v8h-1zM359 175h1v8h-1zM105 184h1v10h-1zM359 184h1v10h-1zM107 177h1v6h-1zM361 177h1v6h-1zM107 184h1v12h-1zM361 184h1v12h-1zM109 178h1v5h-1zM109 184h1v13h-1zM113 181h1v2h-1zM365 181h1v2h-1zM113 184h1v17h-1zM115 184h1v18h-1zM367 184h1v18h-1zM117 184h1v20h-1zM119 186h1v19h-1zM121 187h1v20h-1zM123 189h1v19h-1zM373 189h1v19h-1zM125 190h1v19h-1zM127 192h1v17h-1zM127 210h1v1h-1zM129 193h1v16h-1zM377 193h1v16h-1zM129 210h1v3h-1zM133 197h1v12h-1zM381 197h1v12h-1zM133 210h1v6h-1zM381 210h1v6h-1zM135 198h1v11h-1zM135 210h1v7h-1zM137 200h1v9h-1zM137 210h1v9h-1zM139 201h1v8h-1zM385 201h1v8h-1zM139 210h1v11h-1zM141 203h1v6h-1zM387 203h1v6h-1zM141 210h1v12h-1zM387 210h1v12h-1zM143 204h1v5h-1zM143 210h1v14h-1zM389 210h1v14h-1zM145 206h1v3h-1zM145 210h1v15h-1zM147 208h1v1h-1zM393 208h1v1h-1zM147 210h1v17h-1zM149 210h1v18h-1zM393 210h1v18h-1zM153 212h1v20h-1zM397 212h1v20h-1zM155 214h1v19h-1zM157 216h1v19h-1zM401 216h1v19h-1zM159 217h1v18h-1zM159 236h1v1h-1zM403 236h1v1h-1zM161 219h1v16h-1zM161 236h1v2h-1zM163 220h1v15h-1zM405 220h1v15h-1zM163 236h1v4h-1zM165 222h1v13h-1zM407 222h1v13h-1zM165 236h1v5h-1zM407 236h1v5h-1zM167 224h1v11h-1zM409 224h1v11h-1zM167 236h1v7h-1zM409 236h1v7h-1zM169 225h1v10h-1zM169 236h1v9h-1zM173 229h1v6h-1zM415 229h1v6h-1zM173 236h1v12h-1zM175 230h1v5h-1zM175 236h1v14h-1zM417 236h1v14h-1zM177 232h1v3h-1zM177 236h1v15h-1zM179 234h1v1h-1zM179 236h1v17h-1zM181 236h1v19h-1zM183 237h1v20h-1zM185 239h1v19h-1zM187 241h1v19h-1zM189 242h1v20h-1zM193 246h1v15h-1zM433 246h1v15h-1zM193 262h1v3h-1zM433 262h1v3h-1zM195 247h1v20h-1zM435 247h1v20h-1zM197 249h1v20h-1zM437 249h1v20h-1zM199 251h1v10h-1zM439 251h1v10h-1zM199 262h1v8h-1zM439 262h1v8h-1zM201 253h1v19h-1zM441 253h1v19h-1zM203 254h1v20h-1zM205 256h1v5h-1zM445 256h1v5h-1zM205 262h1v14h-1zM445 262h1v14h-1zM207 258h1v19h-1zM447 258h1v19h-1zM209 260h1v19h-1zM449 260h1v19h-1zM213 263h1v20h-1zM453 263h1v20h-1zM215 265h1v19h-1zM455 265h1v19h-1zM217 267h1v19h-1zM457 267h1v19h-1zM219 269h1v18h-1zM221 270h1v17h-1zM461 270h1v17h-1zM221 288h1v2h-1zM461 288h1v2h-1zM223 272h1v15h-1zM463 272h1v15h-1zM223 288h1v4h-1zM225 274h1v13h-1zM465 274h1v13h-1zM225 288h1v6h-1zM227 276h1v11h-1zM227 288h1v7h-1zM467 288h1v7h-1zM229 278h1v9h-1zM229 288h1v9h-1zM233 282h1v5h-1zM475 282h1v5h-1zM233 288h1v13h-1zM475 288h1v13h-1zM235 283h1v4h-1zM235 288h1v15h-1zM477 288h1v15h-1zM237 285h1v2h-1zM479 285h1v2h-1zM237 288h1v17h-1zM479 288h1v17h-1zM239 288h1v19h-1zM241 289h1v19h-1zM483 289h1v19h-1zM243 291h1v19h-1zM245 293h1v19h-1zM247 295h1v18h-1zM249 297h1v16h-1zM493 297h1v16h-1zM249 314h1v2h-1zM493 314h1v2h-1zM253 300h1v13h-1zM497 300h1v13h-1zM253 314h1v6h-1zM255 302h1v11h-1zM499 302h1v11h-1zM255 314h1v8h-1zM501 314h1v8h-1zM257 304h1v9h-1zM257 314h1v10h-1zM503 314h1v10h-1zM259 306h1v7h-1zM505 306h1v7h-1zM259 314h1v12h-1zM505 314h1v12h-1zM261 308h1v5h-1zM507 308h1v5h-1zM261 314h1v14h-1zM263 310h1v3h-1zM263 314h1v15h-1zM509 314h1v15h-1zM265 312h1v1h-1zM265 314h1v17h-1zM267 314h1v19h-1zM515 314h1v19h-1zM269 316h1v19h-1zM517 316h1v19h-1zM273 103h1v2h-1zM275 103h1v2h-1zM277 103h1v2h-1zM279 103h1v2h-1zM281 103h1v2h-1zM273 106h1v2h-1zM273 320h1v19h-1zM523 320h1v19h-1zM275 106h1v4h-1zM275 322h1v17h-1zM525 322h1v17h-1zM275 340h1v1h-1zM525 340h1v1h-1zM277 106h1v6h-1zM277 324h1v15h-1zM277 340h1v3h-1zM527 340h1v3h-1zM279 106h1v8h-1zM279 326h1v13h-1zM279 340h1v5h-1zM281 106h1v10h-1zM281 328h1v11h-1zM533 328h1v11h-1zM281 340h1v7h-1zM533 340h1v7h-1zM283 103h1v15h-1zM283 330h1v9h-1zM283 340h1v9h-1zM535 340h1v9h-1zM285 103h1v17h-1zM285 332h1v7h-1zM539 332h1v7h-1zM285 340h1v11h-1zM287 103h1v19h-1zM287 334h1v5h-1zM541 334h1v5h-1zM287 340h1v13h-1zM541 340h1v13h-1zM289 104h1v1h-1zM289 106h1v16h-1zM289 336h1v3h-1zM289 340h1v15h-1zM543 340h1v15h-1zM293 108h1v13h-1zM293 123h1v5h-1zM293 340h1v19h-1zM549 340h1v19h-1zM295 110h1v11h-1zM295 123h1v7h-1zM295 342h1v19h-1zM297 112h1v9h-1zM297 123h1v8h-1zM299 123h1v8h-1zM301 123h1v8h-1zM303 123h1v8h-1zM305 123h1v8h-1zM307 123h1v8h-1zM297 344h1v19h-1zM555 344h1v19h-1zM299 132h1v2h-1zM299 346h1v19h-1zM301 116h1v5h-1zM301 132h1v4h-1zM301 348h1v17h-1zM561 348h1v17h-1zM301 366h1v1h-1zM303 118h1v3h-1zM303 132h1v6h-1zM303 350h1v15h-1zM563 350h1v15h-1zM303 366h1v3h-1zM563 366h1v3h-1zM305 120h1v1h-1zM305 352h1v13h-1zM305 366h1v5h-1zM307 132h1v10h-1zM307 354h1v11h-1zM569 354h1v11h-1zM307 366h1v7h-1zM569 366h1v7h-1zM309 124h1v7h-1zM309 356h1v9h-1zM309 366h1v9h-1zM313 129h1v2h-1zM313 360h1v5h-1zM577 360h1v5h-1zM313 366h1v13h-1zM577 366h1v13h-1zM315 362h1v3h-1zM581 362h1v3h-1zM315 366h1v15h-1zM317 133h1v19h-1zM317 364h1v1h-1zM583 364h1v1h-1zM317 366h1v17h-1zM583 366h1v17h-1zM319 366h1v19h-1zM585 366h1v19h-1zM321 137h1v19h-1zM321 368h1v19h-1zM589 368h1v19h-1zM323 370h1v19h-1zM325 141h1v16h-1zM325 372h1v19h-1zM595 372h1v19h-1zM327 374h1v17h-1zM327 392h1v1h-1zM597 392h1v1h-1zM329 376h1v15h-1zM601 376h1v15h-1zM329 392h1v3h-1zM333 380h1v11h-1zM607 380h1v11h-1zM333 392h1v8h-1zM341 392h1v8h-1zM343 392h1v8h-1zM345 392h1v8h-1zM335 151h1v6h-1zM335 158h1v12h-1zM335 382h1v9h-1zM609 382h1v9h-1zM335 392h1v9h-1zM337 392h1v9h-1zM339 392h1v9h-1zM337 384h1v7h-1zM613 384h1v7h-1zM337 403h1v1h-1zM339 386h1v5h-1zM615 386h1v5h-1zM339 403h1v3h-1zM341 158h1v18h-1zM341 388h1v3h-1zM619 388h1v3h-1zM341 402h1v6h-1zM343 390h1v1h-1zM621 390h1v1h-1zM343 402h1v8h-1zM345 161h1v19h-1zM345 402h1v10h-1zM347 163h1v19h-1zM347 394h1v6h-1zM347 402h1v12h-1zM349 165h1v18h-1zM349 396h1v4h-1zM349 402h1v14h-1zM353 184h1v4h-1zM353 402h1v15h-1zM353 418h1v2h-1zM367 418h1v2h-1zM369 418h1v2h-1zM355 402h1v19h-1zM357 173h1v10h-1zM357 404h1v17h-1zM359 406h1v15h-1zM361 408h1v9h-1zM361 418h1v3h-1zM363 418h1v3h-1zM365 418h1v3h-1zM363 179h1v4h-1zM363 184h1v14h-1zM363 410h1v7h-1zM365 184h1v16h-1zM365 412h1v5h-1zM367 414h1v3h-1zM369 185h1v19h-1zM369 416h1v1h-1zM375 191h1v18h-1zM377 210h1v2h-1zM379 195h1v14h-1zM379 210h1v4h-1zM383 199h1v10h-1zM383 210h1v8h-1zM385 210h1v10h-1zM389 205h1v4h-1zM395 210h1v20h-1zM399 214h1v20h-1zM403 218h1v17h-1zM405 236h1v3h-1zM413 227h1v8h-1zM413 236h1v11h-1zM415 236h1v13h-1zM417 231h1v4h-1zM419 233h1v2h-1zM419 236h1v16h-1zM421 236h1v18h-1zM423 237h1v19h-1zM425 238h1v20h-1zM427 240h1v20h-1zM429 242h1v19h-1zM443 255h1v19h-1zM459 268h1v19h-1zM463 288h1v3h-1zM465 288h1v5h-1zM467 275h1v12h-1zM469 277h1v10h-1zM469 288h1v8h-1zM473 280h1v7h-1zM473 288h1v12h-1zM477 284h1v3h-1zM481 288h1v18h-1zM485 290h1v20h-1zM487 292h1v19h-1zM489 293h1v20h-1zM495 298h1v15h-1zM495 314h1v4h-1zM497 314h1v5h-1zM499 314h1v7h-1zM501 303h1v10h-1zM503 305h1v8h-1zM507 314h1v13h-1zM509 309h1v4h-1zM513 314h1v18h-1zM519 317h1v19h-1zM521 319h1v19h-1zM527 323h1v16h-1zM529 325h1v14h-1zM529 340h1v4h-1zM535 329h1v10h-1zM537 331h1v8h-1zM537 340h1v10h-1zM539 340h1v12h-1zM543 335h1v4h-1zM545 337h1v2h-1zM545 340h1v16h-1zM547 338h1v1h-1zM547 340h1v17h-1zM553 342h1v20h-1zM557 345h1v20h-1zM559 347h1v18h-1zM561 366h1v2h-1zM565 351h1v14h-1zM565 366h1v4h-1zM567 353h1v12h-1zM567 366h1v6h-1zM573 357h1v8h-1zM573 366h1v10h-1zM575 358h1v7h-1zM575 366h1v12h-1zM579 361h1v4h-1zM579 366h1v14h-1zM581 366h1v16h-1zM587 367h1v19h-1zM593 371h1v19h-1zM597 373h1v18h-1zM599 375h1v16h-1zM599 392h1v2h-1zM601 392h1v4h-1zM617 392h1v4h-1zM619 392h1v4h-1zM621 392h1v4h-1zM623 392h1v4h-1zM625 392h1v4h-1zM603 378h1v13h-1zM603 392h1v5h-1zM605 392h1v5h-1zM607 392h1v5h-1zM609 392h1v5h-1zM613 392h1v5h-1zM615 392h1v5h-1zM605 379h1v12h-1zM607 399h1v1h-1zM609 399h1v2h-1zM613 399h1v5h-1zM615 399h1v6h-1zM617 387h1v4h-1zM617 398h1v8h-1zM619 398h1v10h-1zM621 398h1v11h-1zM623 398h1v12h-1zM625 398h1v14h-1zM627 394h1v2h-1zM627 398h1v15h-1zM629 397h1v17h-1zM633 398h1v18h-1zM635 399h1v17h-1zM637 400h1v16h-1zM639 401h1v15h-1zM641 403h1v12h-1zM643 404h1v11h-1zM645 405h1v10h-1zM647 407h1v8h-1zM649 408h1v7h-1zM653 411h1v3h-1zM655 412h1v2h-1zM657 413h1v1h-1z"/>
<path fill="#008000" d="M1 121h1v10h-1zM1 132h1v1h-1zM3 132h1v1h-1zM5 132h1v1h-1zM7 132h1v1h-1zM317 132h1v1h-1zM1 135h1v5h-1zM3 122h1v9h-1zM315 122h1v9h-1zM317 122h1v9h-1zM319 122h1v9h-1zM321 122h1v9h-1zM323 122h1v9h-1zM325 122h1v9h-1zM3 135h1v6h-1zM5 124h1v7h-1zM5 135h1v8h-1zM7 125h1v6h-1zM329 125h1v6h-1zM7 135h1v9h-1zM9 126h1v5h-1zM9 134h1v12h-1zM13 129h1v2h-1zM333 129h1v2h-1zM13 134h1v14h-1zM15 130h1v1h-1zM15 134h1v16h-1zM17 133h1v18h-1zM19 133h1v19h-1zM21 135h1v19h-1zM23 136h1v19h-1zM25 137h1v20h-1zM341 137h1v20h-1zM27 139h1v18h-1zM343 139h1v18h-1zM29 140h1v17h-1zM29 158h1v1h-1zM343 158h1v1h-1zM33 143h1v14h-1zM347 143h1v14h-1zM33 158h1v4h-1zM35 144h1v13h-1zM35 158h1v5h-1zM347 158h1v5h-1zM37 146h1v11h-1zM37 158h1v7h-1zM349 158h1v7h-1zM39 147h1v10h-1zM39 158h1v8h-1zM41 148h1v9h-1zM41 158h1v10h-1zM43 150h1v7h-1zM43 158h1v11h-1zM353 158h1v11h-1zM45 151h1v6h-1zM355 151h1v6h-1zM45 158h1v12h-1zM47 153h1v4h-1zM357 153h1v4h-1zM47 158h1v14h-1zM49 154h1v3h-1zM49 158h1v15h-1zM357 158h1v15h-1zM53 158h1v18h-1zM55 158h1v19h-1zM361 158h1v19h-1zM57 160h1v19h-1zM59 161h1v19h-1zM61 162h1v20h-1zM63 164h1v19h-1zM65 165h1v18h-1zM369 165h1v18h-1zM65 184h1v1h-1zM369 184h1v1h-1zM67 167h1v16h-1zM67 184h1v2h-1zM69 168h1v15h-1zM69 184h1v3h-1zM73 171h1v12h-1zM375 171h1v12h-1zM73 184h1v6h-1zM75 172h1v11h-1zM75 184h1v8h-1zM77 174h1v9h-1zM77 184h1v9h-1zM377 184h1v9h-1zM79 175h1v8h-1zM379 175h1v8h-1zM79 184h1v11h-1zM379 184h1v11h-1zM81 177h1v6h-1zM381 177h1v6h-1zM81 184h1v12h-1zM83 178h1v5h-1zM83 184h1v14h-1zM85 180h1v3h-1zM85 184h1v15h-1zM383 184h1v15h-1zM87 181h1v2h-1zM385 181h1v2h-1zM87 184h1v16h-1zM89 184h1v18h-1zM93 186h1v19h-1zM95 187h1v19h-1zM97 189h1v19h-1zM393 189h1v19h-1zM99 190h1v19h-1zM101 192h1v17h-1zM101 210h1v1h-1zM103 193h1v16h-1zM397 193h1v16h-1zM103 210h1v2h-1zM397 210h1v2h-1zM105 194h1v15h-1zM105 210h1v4h-1zM399 210h1v4h-1zM107 196h1v13h-1zM107 210h1v5h-1zM109 197h1v12h-1zM401 197h1v12h-1zM109 210h1v7h-1zM113 201h1v8h-1zM113 210h1v10h-1zM405 210h1v10h-1zM115 202h1v7h-1zM407 202h1v7h-1zM115 210h1v11h-1zM117 204h1v5h-1zM409 204h1v5h-1zM117 210h1v13h-1zM119 205h1v4h-1zM119 210h1v14h-1zM409 210h1v14h-1zM121 207h1v2h-1zM121 210h1v16h-1zM123 208h1v1h-1zM413 208h1v1h-1zM123 210h1v17h-1zM413 210h1v17h-1zM125 210h1v19h-1zM415 210h1v19h-1zM127 211h1v20h-1zM129 213h1v19h-1zM133 216h1v19h-1zM135 217h1v18h-1zM423 217h1v18h-1zM135 236h1v1h-1zM423 236h1v1h-1zM137 219h1v16h-1zM425 219h1v16h-1zM137 236h1v2h-1zM425 236h1v2h-1zM139 221h1v14h-1zM427 221h1v14h-1zM139 236h1v4h-1zM427 236h1v4h-1zM141 222h1v13h-1zM141 236h1v5h-1zM143 224h1v11h-1zM143 236h1v7h-1zM145 225h1v10h-1zM145 236h1v9h-1zM147 227h1v8h-1zM147 236h1v10h-1zM433 236h1v10h-1zM149 228h1v7h-1zM435 228h1v7h-1zM149 236h1v12h-1zM153 232h1v3h-1zM439 232h1v3h-1zM153 236h1v15h-1zM439 236h1v15h-1zM155 233h1v2h-1zM441 233h1v2h-1zM155 236h1v17h-1zM441 236h1v17h-1zM157 236h1v18h-1zM159 237h1v19h-1zM445 237h1v19h-1zM161 238h1v20h-1zM163 240h1v19h-1zM165 241h1v20h-1zM167 243h1v20h-1zM169 245h1v16h-1zM169 262h1v2h-1zM173 248h1v19h-1zM175 250h1v11h-1zM175 262h1v7h-1zM177 251h1v20h-1zM179 253h1v20h-1zM181 255h1v6h-1zM181 262h1v12h-1zM183 257h1v19h-1zM185 258h1v20h-1zM187 260h1v1h-1zM187 262h1v17h-1zM189 262h1v19h-1zM193 265h1v20h-1zM195 267h1v19h-1zM197 269h1v18h-1zM483 269h1v18h-1zM199 270h1v17h-1zM199 288h1v2h-1zM485 288h1v2h-1zM201 272h1v15h-1zM487 272h1v15h-1zM201 288h1v3h-1zM203 274h1v13h-1zM489 274h1v13h-1zM203 288h1v5h-1zM489 288h1v5h-1zM205 276h1v11h-1zM205 288h1v7h-1zM207 277h1v10h-1zM493 277h1v10h-1zM207 288h1v9h-1zM493 288h1v9h-1zM209 279h1v8h-1zM495 279h1v8h-1zM209 288h1v11h-1zM213 283h1v4h-1zM213 288h1v14h-1zM499 288h1v14h-1zM215 284h1v3h-1zM501 284h1v3h-1zM215 288h1v16h-1zM217 286h1v1h-1zM217 288h1v18h-1zM505 288h1v18h-1zM219 288h1v20h-1zM507 288h1v20h-1zM221 290h1v19h-1zM509 290h1v19h-1zM223 292h1v19h-1zM225 294h1v19h-1zM227 295h1v18h-1zM515 295h1v18h-1zM227 314h1v1h-1zM229 297h1v16h-1zM229 314h1v3h-1zM519 314h1v3h-1zM233 301h1v12h-1zM523 301h1v12h-1zM233 314h1v6h-1zM523 314h1v6h-1zM235 303h1v10h-1zM235 314h1v8h-1zM525 314h1v8h-1zM237 305h1v8h-1zM529 305h1v8h-1zM237 314h1v10h-1zM239 307h1v6h-1zM239 314h1v12h-1zM241 308h1v5h-1zM533 308h1v5h-1zM241 314h1v14h-1zM533 314h1v14h-1zM243 310h1v3h-1zM535 310h1v3h-1zM243 314h1v16h-1zM245 312h1v1h-1zM245 314h1v18h-1zM539 314h1v18h-1zM247 314h1v20h-1zM541 314h1v20h-1zM249 316h1v20h-1zM253 320h1v19h-1zM549 320h1v19h-1zM255 322h1v17h-1zM255 340h1v1h-1zM257 324h1v15h-1zM257 340h1v3h-1zM259 326h1v13h-1zM557 326h1v13h-1zM259 340h1v5h-1zM557 340h1v5h-1zM261 328h1v11h-1zM261 340h1v7h-1zM559 340h1v7h-1zM263 329h1v10h-1zM561 329h1v10h-1zM263 340h1v9h-1zM265 331h1v8h-1zM265 340h1v11h-1zM565 340h1v11h-1zM267 333h1v6h-1zM567 333h1v6h-1zM267 340h1v13h-1zM567 340h1v13h-1zM269 335h1v4h-1zM569 335h1v4h-1zM269 340h1v15h-1zM273 340h1v19h-1zM275 341h1v20h-1zM277 343h1v20h-1zM279 345h1v20h-1zM281 347h1v18h-1zM587 347h1v18h-1zM281 366h1v1h-1zM587 366h1v1h-1zM283 349h1v16h-1zM589 349h1v16h-1zM283 366h1v3h-1zM285 351h1v14h-1zM593 351h1v14h-1zM285 366h1v5h-1zM593 366h1v5h-1zM287 353h1v12h-1zM595 353h1v12h-1zM287 366h1v7h-1zM597 366h1v7h-1zM289 103h1v1h-1zM289 355h1v10h-1zM599 355h1v10h-1zM289 366h1v9h-1zM599 366h1v9h-1zM293 102h1v3h-1zM295 102h1v3h-1zM297 102h1v3h-1zM299 102h1v3h-1zM301 102h1v3h-1zM303 102h1v3h-1zM305 102h1v3h-1zM293 106h1v2h-1zM293 359h1v6h-1zM605 359h1v6h-1zM293 366h1v13h-1zM605 366h1v13h-1zM295 106h1v4h-1zM295 361h1v4h-1zM607 361h1v4h-1zM295 366h1v15h-1zM297 106h1v6h-1zM297 363h1v2h-1zM297 366h1v17h-1zM299 106h1v8h-1zM299 366h1v19h-1zM301 106h1v10h-1zM301 367h1v20h-1zM303 106h1v12h-1zM303 369h1v20h-1zM305 106h1v14h-1zM305 371h1v20h-1zM307 103h1v18h-1zM307 373h1v18h-1zM625 373h1v18h-1zM307 392h1v1h-1zM649 392h1v1h-1zM653 392h1v1h-1zM655 392h1v1h-1zM309 105h1v16h-1zM309 123h1v1h-1zM309 375h1v16h-1zM629 375h1v16h-1zM309 392h1v3h-1zM629 392h1v3h-1zM633 392h1v3h-1zM635 392h1v3h-1zM637 392h1v3h-1zM639 392h1v3h-1zM313 109h1v11h-1zM313 122h1v7h-1zM313 379h1v12h-1zM635 379h1v12h-1zM313 392h1v7h-1zM315 111h1v9h-1zM315 381h1v10h-1zM637 381h1v10h-1zM315 392h1v9h-1zM317 392h1v9h-1zM319 392h1v9h-1zM321 392h1v9h-1zM323 392h1v9h-1zM325 392h1v9h-1zM317 113h1v7h-1zM317 383h1v8h-1zM641 383h1v8h-1zM319 115h1v5h-1zM319 132h1v3h-1zM319 385h1v6h-1zM643 385h1v6h-1zM319 403h1v2h-1zM321 117h1v3h-1zM321 132h1v5h-1zM321 387h1v4h-1zM647 387h1v4h-1zM321 403h1v4h-1zM323 119h1v1h-1zM323 132h1v7h-1zM323 389h1v2h-1zM649 389h1v2h-1zM323 403h1v6h-1zM325 132h1v9h-1zM325 403h1v8h-1zM327 123h1v8h-1zM327 132h1v11h-1zM327 393h1v8h-1zM327 403h1v10h-1zM329 132h1v13h-1zM329 395h1v6h-1zM329 403h1v12h-1zM333 132h1v17h-1zM333 400h1v1h-1zM333 403h1v16h-1zM335 132h1v19h-1zM335 403h1v18h-1zM337 133h1v20h-1zM337 404h1v13h-1zM337 418h1v4h-1zM339 418h1v4h-1zM341 418h1v4h-1zM343 418h1v4h-1zM345 418h1v4h-1zM339 135h1v20h-1zM339 406h1v11h-1zM341 408h1v9h-1zM343 410h1v7h-1zM345 141h1v16h-1zM345 158h1v3h-1zM345 412h1v5h-1zM347 414h1v3h-1zM347 418h1v3h-1zM349 418h1v3h-1zM349 145h1v12h-1zM349 416h1v1h-1zM353 149h1v8h-1zM353 420h1v1h-1zM355 158h1v13h-1zM359 156h1v1h-1zM359 158h1v17h-1zM363 159h1v20h-1zM365 161h1v20h-1zM367 163h1v20h-1zM373 169h1v14h-1zM373 184h1v5h-1zM375 184h1v7h-1zM377 173h1v10h-1zM381 184h1v13h-1zM383 179h1v4h-1zM385 184h1v17h-1zM387 184h1v19h-1zM389 185h1v20h-1zM395 191h1v18h-1zM399 195h1v14h-1zM401 210h1v6h-1zM403 198h1v11h-1zM403 210h1v8h-1zM405 200h1v9h-1zM407 210h1v12h-1zM417 212h1v19h-1zM419 213h1v20h-1zM421 215h1v20h-1zM429 223h1v12h-1zM429 236h1v6h-1zM433 226h1v9h-1zM435 236h1v11h-1zM437 230h1v5h-1zM437 236h1v13h-1zM443 236h1v19h-1zM447 239h1v19h-1zM449 240h1v20h-1zM453 244h1v19h-1zM455 246h1v19h-1zM457 247h1v14h-1zM457 262h1v5h-1zM459 249h1v19h-1zM461 251h1v19h-1zM463 253h1v8h-1zM463 262h1v10h-1zM465 254h1v20h-1zM467 256h1v19h-1zM469 258h1v3h-1zM469 262h1v15h-1zM473 261h1v19h-1zM475 263h1v19h-1zM477 264h1v20h-1zM479 266h1v19h-1zM481 268h1v19h-1zM483 288h1v1h-1zM485 271h1v16h-1zM487 288h1v4h-1zM495 288h1v10h-1zM497 281h1v6h-1zM497 288h1v12h-1zM499 282h1v5h-1zM501 288h1v15h-1zM503 285h1v2h-1zM503 288h1v17h-1zM513 293h1v20h-1zM517 296h1v17h-1zM517 314h1v2h-1zM519 298h1v15h-1zM521 299h1v14h-1zM521 314h1v5h-1zM525 302h1v11h-1zM527 304h1v9h-1zM527 314h1v9h-1zM529 314h1v11h-1zM535 314h1v15h-1zM537 311h1v2h-1zM537 314h1v17h-1zM543 316h1v19h-1zM545 317h1v20h-1zM547 319h1v19h-1zM553 323h1v16h-1zM553 340h1v2h-1zM555 325h1v14h-1zM555 340h1v4h-1zM559 327h1v12h-1zM561 340h1v8h-1zM563 330h1v9h-1zM563 340h1v10h-1zM565 332h1v7h-1zM569 340h1v14h-1zM573 337h1v2h-1zM573 340h1v17h-1zM575 340h1v18h-1zM577 340h1v20h-1zM579 342h1v19h-1zM581 343h1v19h-1zM583 344h1v20h-1zM585 346h1v19h-1zM589 366h1v2h-1zM595 366h1v6h-1zM597 354h1v11h-1zM601 357h1v8h-1zM601 366h1v10h-1zM603 358h1v7h-1zM603 366h1v12h-1zM607 366h1v14h-1zM609 362h1v3h-1zM609 366h1v16h-1zM613 366h1v18h-1zM615 366h1v20h-1zM617 368h1v19h-1zM619 369h1v19h-1zM621 370h1v20h-1zM623 372h1v19h-1zM627 374h1v17h-1zM627 392h1v2h-1zM641 392h1v2h-1zM643 392h1v2h-1zM645 392h1v2h-1zM647 392h1v2h-1zM633 378h1v13h-1zM633 397h1v1h-1zM635 397h1v2h-1zM637 397h1v3h-1zM639 382h1v9h-1zM639 397h1v4h-1zM641 396h1v7h-1zM643 396h1v8h-1zM645 386h1v5h-1zM645 396h1v9h-1zM647 396h1v11h-1zM649 395h1v13h-1zM653 395h1v16h-1zM655 395h1v17h-1zM657 395h1v18h-1zM659 395h1v19h-1zM661 396h1v17h-1zM663 398h1v15h-1zM665 399h1v14h-1zM667 400h1v13h-1zM669 401h1v12h-1zM673 404h1v8h-1zM675 405h1v7h-1zM677 406h1v6h-1zM679 408h1v3h-1zM681 409h1v2h-1zM683 410h1v1h-1z"/>
<path fill="#ff8040" d="M1 140h1v17h-1zM363 140h1v17h-1zM1 158h1v1h-1zM363 158h1v1h-1zM3 141h1v16h-1zM3 158h1v3h-1zM365 158h1v3h-1zM5 143h1v14h-1zM5 158h1v4h-1zM7 144h1v13h-1zM367 144h1v13h-1zM7 158h1v5h-1zM367 158h1v5h-1zM9 146h1v11h-1zM369 146h1v11h-1zM9 158h1v7h-1zM369 158h1v7h-1zM13 148h1v9h-1zM13 158h1v10h-1zM15 150h1v7h-1zM373 150h1v7h-1zM15 158h1v11h-1zM373 158h1v11h-1zM17 151h1v6h-1zM17 158h1v12h-1zM19 152h1v5h-1zM375 152h1v5h-1zM19 158h1v14h-1zM21 154h1v3h-1zM377 154h1v3h-1zM21 158h1v15h-1zM377 158h1v15h-1zM23 155h1v2h-1zM23 158h1v17h-1zM379 158h1v17h-1zM25 158h1v18h-1zM27 158h1v19h-1zM381 158h1v19h-1zM29 159h1v20h-1zM33 162h1v19h-1zM385 162h1v19h-1zM35 163h1v20h-1zM387 163h1v20h-1zM37 165h1v18h-1zM389 165h1v18h-1zM39 166h1v17h-1zM39 184h1v2h-1zM41 168h1v15h-1zM41 184h1v3h-1zM43 169h1v14h-1zM393 169h1v14h-1zM43 184h1v4h-1zM45 170h1v13h-1zM45 184h1v6h-1zM47 172h1v11h-1zM47 184h1v7h-1zM395 184h1v7h-1zM49 173h1v10h-1zM397 173h1v10h-1zM49 184h1v9h-1zM397 184h1v9h-1zM53 176h1v7h-1zM53 184h1v11h-1zM399 184h1v11h-1zM55 177h1v6h-1zM401 177h1v6h-1zM55 184h1v13h-1zM401 184h1v13h-1zM57 179h1v4h-1zM403 179h1v4h-1zM57 184h1v14h-1zM403 184h1v14h-1zM59 180h1v3h-1zM59 184h1v16h-1zM405 184h1v16h-1zM61 182h1v1h-1zM61 184h1v17h-1zM63 184h1v19h-1zM65 185h1v19h-1zM409 185h1v19h-1zM67 186h1v19h-1zM69 187h1v20h-1zM73 190h1v19h-1zM415 190h1v19h-1zM75 192h1v17h-1zM417 192h1v17h-1zM75 210h1v1h-1zM77 193h1v16h-1zM77 210h1v3h-1zM419 210h1v3h-1zM79 195h1v14h-1zM79 210h1v4h-1zM81 196h1v13h-1zM421 196h1v13h-1zM81 210h1v6h-1zM83 198h1v11h-1zM423 198h1v11h-1zM83 210h1v7h-1zM423 210h1v7h-1zM85 199h1v10h-1zM425 199h1v10h-1zM85 210h1v8h-1zM87 200h1v9h-1zM87 210h1v10h-1zM89 202h1v7h-1zM89 210h1v11h-1zM427 210h1v11h-1zM93 205h1v4h-1zM93 210h1v14h-1zM95 206h1v3h-1zM95 210h1v16h-1zM433 210h1v16h-1zM97 208h1v1h-1zM435 208h1v1h-1zM97 210h1v17h-1zM99 210h1v19h-1zM101 211h1v19h-1zM103 212h1v20h-1zM439 212h1v20h-1zM105 214h1v19h-1zM441 214h1v19h-1zM107 215h1v20h-1zM109 217h1v18h-1zM445 217h1v18h-1zM113 220h1v15h-1zM113 236h1v3h-1zM447 236h1v3h-1zM115 221h1v14h-1zM449 221h1v14h-1zM115 236h1v5h-1zM117 223h1v12h-1zM117 236h1v6h-1zM119 224h1v11h-1zM453 224h1v11h-1zM119 236h1v8h-1zM453 236h1v8h-1zM121 226h1v9h-1zM455 226h1v9h-1zM121 236h1v9h-1zM123 227h1v8h-1zM123 236h1v11h-1zM457 236h1v11h-1zM125 229h1v6h-1zM125 236h1v13h-1zM459 236h1v13h-1zM127 231h1v4h-1zM461 231h1v4h-1zM127 236h1v14h-1zM129 232h1v3h-1zM129 236h1v16h-1zM133 236h1v19h-1zM135 237h1v19h-1zM137 238h1v20h-1zM469 238h1v20h-1zM139 240h1v19h-1zM141 241h1v20h-1zM473 241h1v20h-1zM143 243h1v20h-1zM145 245h1v16h-1zM145 262h1v2h-1zM147 246h1v20h-1zM479 246h1v20h-1zM149 248h1v19h-1zM153 251h1v20h-1zM485 251h1v20h-1zM155 253h1v19h-1zM157 254h1v7h-1zM157 262h1v12h-1zM159 256h1v20h-1zM161 258h1v19h-1zM163 259h1v2h-1zM163 262h1v17h-1zM165 261h1v19h-1zM167 263h1v19h-1zM499 263h1v19h-1zM169 264h1v20h-1zM501 264h1v20h-1zM173 267h1v20h-1zM505 267h1v20h-1zM175 269h1v18h-1zM507 269h1v18h-1zM175 288h1v1h-1zM177 271h1v16h-1zM177 288h1v2h-1zM509 288h1v2h-1zM179 273h1v14h-1zM179 288h1v4h-1zM181 274h1v13h-1zM513 274h1v13h-1zM181 288h1v6h-1zM183 276h1v11h-1zM183 288h1v8h-1zM517 288h1v8h-1zM185 278h1v9h-1zM519 278h1v9h-1zM185 288h1v9h-1zM187 279h1v8h-1zM187 288h1v11h-1zM521 288h1v11h-1zM189 281h1v6h-1zM523 281h1v6h-1zM189 288h1v13h-1zM523 288h1v13h-1zM193 285h1v2h-1zM193 288h1v16h-1zM527 288h1v16h-1zM195 286h1v1h-1zM529 286h1v1h-1zM195 288h1v18h-1zM197 288h1v20h-1zM199 290h1v19h-1zM201 291h1v20h-1zM203 293h1v20h-1zM539 293h1v20h-1zM205 295h1v18h-1zM541 295h1v18h-1zM205 314h1v1h-1zM207 297h1v16h-1zM207 314h1v2h-1zM543 314h1v2h-1zM209 299h1v14h-1zM547 299h1v14h-1zM209 314h1v4h-1zM213 302h1v11h-1zM213 314h1v8h-1zM215 304h1v9h-1zM553 304h1v9h-1zM215 314h1v10h-1zM217 306h1v7h-1zM557 306h1v7h-1zM217 314h1v11h-1zM555 314h1v11h-1zM219 308h1v5h-1zM559 308h1v5h-1zM219 314h1v13h-1zM559 314h1v13h-1zM221 309h1v4h-1zM561 309h1v4h-1zM221 314h1v15h-1zM561 314h1v15h-1zM223 311h1v2h-1zM563 311h1v2h-1zM223 314h1v17h-1zM225 314h1v19h-1zM567 314h1v19h-1zM227 315h1v20h-1zM569 315h1v20h-1zM229 317h1v19h-1zM233 320h1v19h-1zM235 322h1v17h-1zM579 322h1v17h-1zM235 340h1v2h-1zM579 340h1v2h-1zM237 324h1v15h-1zM237 340h1v4h-1zM583 340h1v4h-1zM239 326h1v13h-1zM585 326h1v13h-1zM239 340h1v6h-1zM585 340h1v6h-1zM241 328h1v11h-1zM587 328h1v11h-1zM241 340h1v8h-1zM243 330h1v9h-1zM243 340h1v9h-1zM589 340h1v9h-1zM245 332h1v7h-1zM593 332h1v7h-1zM245 340h1v11h-1zM593 340h1v11h-1zM247 334h1v5h-1zM597 334h1v5h-1zM247 340h1v13h-1zM595 340h1v13h-1zM249 336h1v3h-1zM599 336h1v3h-1zM249 340h1v15h-1zM599 340h1v15h-1zM253 340h1v19h-1zM605 340h1v19h-1zM255 341h1v20h-1zM607 341h1v20h-1zM257 343h1v20h-1zM259 345h1v20h-1zM613 345h1v20h-1zM261 347h1v18h-1zM615 347h1v18h-1zM261 366h1v1h-1zM263 349h1v16h-1zM619 349h1v16h-1zM263 366h1v3h-1zM619 366h1v3h-1zM265 351h1v14h-1zM621 351h1v14h-1zM265 366h1v5h-1zM267 353h1v12h-1zM625 353h1v12h-1zM267 366h1v7h-1zM625 366h1v7h-1zM269 355h1v10h-1zM627 355h1v10h-1zM269 366h1v9h-1zM629 366h1v9h-1zM273 359h1v6h-1zM273 366h1v12h-1zM633 366h1v12h-1zM275 361h1v4h-1zM637 361h1v4h-1zM275 366h1v14h-1zM277 363h1v2h-1zM277 366h1v16h-1zM639 366h1v16h-1zM279 366h1v18h-1zM281 367h1v19h-1zM283 369h1v19h-1zM285 371h1v19h-1zM287 373h1v18h-1zM655 373h1v18h-1zM289 375h1v16h-1zM659 375h1v16h-1zM289 392h1v2h-1zM293 379h1v12h-1zM665 379h1v12h-1zM293 392h1v6h-1zM295 381h1v10h-1zM295 392h1v8h-1zM297 383h1v8h-1zM297 392h1v10h-1zM299 392h1v10h-1zM301 392h1v10h-1zM303 392h1v10h-1zM305 392h1v10h-1zM299 385h1v6h-1zM301 387h1v4h-1zM301 404h1v2h-1zM303 389h1v2h-1zM303 404h1v4h-1zM705 404h1v4h-1zM305 404h1v6h-1zM307 102h1v1h-1zM307 393h1v9h-1zM307 404h1v8h-1zM309 101h1v4h-1zM313 101h1v4h-1zM315 101h1v4h-1zM317 101h1v4h-1zM319 101h1v4h-1zM321 101h1v4h-1zM323 101h1v4h-1zM325 101h1v4h-1zM309 395h1v7h-1zM309 404h1v10h-1zM313 106h1v3h-1zM313 399h1v3h-1zM313 404h1v13h-1zM315 404h1v13h-1zM315 106h1v5h-1zM315 401h1v1h-1zM315 418h1v3h-1zM317 106h1v7h-1zM317 403h1v14h-1zM317 418h1v5h-1zM319 418h1v5h-1zM321 418h1v5h-1zM323 418h1v5h-1zM319 106h1v9h-1zM319 405h1v12h-1zM321 106h1v11h-1zM321 407h1v10h-1zM323 106h1v13h-1zM323 409h1v8h-1zM325 106h1v14h-1zM327 106h1v14h-1zM329 106h1v14h-1zM325 411h1v6h-1zM325 418h1v4h-1zM327 418h1v4h-1zM329 418h1v4h-1zM327 103h1v2h-1zM327 122h1v1h-1zM327 413h1v4h-1zM329 122h1v3h-1zM329 415h1v2h-1zM333 110h1v9h-1zM333 121h1v8h-1zM333 419h1v3h-1zM335 112h1v7h-1zM335 121h1v10h-1zM337 121h1v10h-1zM339 121h1v10h-1zM341 121h1v10h-1zM343 121h1v10h-1zM335 421h1v1h-1zM337 114h1v5h-1zM337 132h1v1h-1zM339 116h1v3h-1zM339 132h1v3h-1zM341 118h1v1h-1zM341 132h1v5h-1zM343 132h1v7h-1zM345 122h1v9h-1zM345 132h1v9h-1zM347 124h1v7h-1zM347 132h1v11h-1zM349 126h1v5h-1zM349 132h1v13h-1zM353 130h1v1h-1zM353 132h1v17h-1zM355 132h1v19h-1zM357 134h1v19h-1zM359 136h1v20h-1zM361 138h1v19h-1zM365 142h1v15h-1zM375 158h1v13h-1zM379 156h1v1h-1zM383 160h1v19h-1zM389 184h1v1h-1zM393 184h1v5h-1zM395 171h1v12h-1zM399 175h1v8h-1zM405 181h1v2h-1zM407 184h1v18h-1zM413 188h1v20h-1zM417 210h1v2h-1zM419 194h1v15h-1zM421 210h1v5h-1zM425 210h1v9h-1zM427 201h1v8h-1zM429 203h1v6h-1zM429 210h1v13h-1zM433 207h1v2h-1zM435 210h1v18h-1zM437 210h1v20h-1zM443 216h1v19h-1zM445 236h1v1h-1zM447 219h1v16h-1zM449 236h1v4h-1zM455 236h1v10h-1zM457 228h1v7h-1zM459 230h1v5h-1zM461 236h1v15h-1zM463 233h1v2h-1zM463 236h1v17h-1zM465 236h1v18h-1zM467 236h1v20h-1zM475 243h1v18h-1zM475 262h1v1h-1zM477 245h1v19h-1zM481 248h1v13h-1zM481 262h1v6h-1zM483 250h1v19h-1zM487 253h1v8h-1zM487 262h1v10h-1zM489 255h1v19h-1zM493 258h1v3h-1zM493 262h1v15h-1zM495 259h1v20h-1zM497 261h1v20h-1zM503 266h1v19h-1zM509 270h1v17h-1zM513 288h1v5h-1zM515 275h1v12h-1zM515 288h1v7h-1zM517 277h1v10h-1zM519 288h1v10h-1zM521 280h1v7h-1zM525 283h1v4h-1zM525 288h1v14h-1zM527 284h1v3h-1zM529 288h1v17h-1zM533 289h1v19h-1zM535 290h1v20h-1zM537 292h1v19h-1zM543 296h1v17h-1zM545 298h1v15h-1zM545 314h1v3h-1zM547 314h1v5h-1zM549 301h1v12h-1zM549 314h1v6h-1zM553 314h1v9h-1zM555 305h1v8h-1zM557 314h1v12h-1zM563 314h1v16h-1zM565 312h1v1h-1zM565 314h1v18h-1zM573 318h1v19h-1zM575 319h1v20h-1zM577 321h1v18h-1zM581 323h1v16h-1zM581 340h1v3h-1zM583 325h1v14h-1zM587 340h1v7h-1zM589 329h1v10h-1zM595 333h1v6h-1zM597 340h1v14h-1zM601 337h1v2h-1zM601 340h1v17h-1zM603 338h1v1h-1zM603 340h1v18h-1zM609 343h1v19h-1zM617 348h1v17h-1zM617 366h1v2h-1zM621 366h1v4h-1zM623 352h1v13h-1zM623 366h1v6h-1zM627 366h1v8h-1zM629 356h1v9h-1zM633 358h1v7h-1zM635 360h1v5h-1zM635 366h1v13h-1zM637 366h1v15h-1zM639 362h1v3h-1zM641 364h1v1h-1zM641 366h1v17h-1zM643 366h1v19h-1zM645 366h1v20h-1zM647 368h1v19h-1zM649 369h1v20h-1zM653 371h1v20h-1zM657 374h1v17h-1zM657 392h1v1h-1zM659 394h1v1h-1zM661 377h1v14h-1zM661 394h1v2h-1zM663 378h1v13h-1zM663 394h1v4h-1zM665 394h1v5h-1zM667 380h1v11h-1zM667 393h1v7h-1zM669 382h1v9h-1zM669 393h1v8h-1zM673 384h1v7h-1zM673 393h1v11h-1zM675 386h1v4h-1zM675 392h1v13h-1zM677 387h1v3h-1zM677 392h1v14h-1zM679 388h1v2h-1zM679 392h1v16h-1zM681 389h1v1h-1zM681 392h1v17h-1zM683 392h1v18h-1zM685 392h1v19h-1zM687 393h1v18h-1zM689 394h1v16h-1zM693 397h1v13h-1zM695 398h1v12h-1zM697 399h1v10h-1zM699 401h1v8h-1zM701 402h1v7h-1zM703 403h1v6h-1zM707 406h1v2h-1zM709 407h1v1h-1zM715 116h1v1h-1zM717 115h1v4h-1zM719 115h1v5h-1zM721 115h1v6h-1zM723 115h1v7h-1zM725 115h1v9h-1zM727 114h1v11h-1zM729 114h1v12h-1z"/>
<path fill="#d0d0d0" d="M1 159h1v24h-1zM517 159h1v24h-1zM1 184h1v25h-1zM3 184h1v25h-1zM5 184h1v25h-1zM7 184h1v25h-1zM9 184h1v25h-1zM457 184h1v25h-1zM459 184h1v25h-1zM461 184h1v25h-1zM463 184h1v25h-1zM465 184h1v25h-1zM467 184h1v25h-1zM469 184h1v25h-1zM473 184h1v25h-1zM475 184h1v25h-1zM477 184h1v25h-1zM479 184h1v25h-1zM481 184h1v25h-1zM515 184h1v25h-1zM517 184h1v25h-1zM519 184h1v25h-1zM521 184h1v25h-1zM523 184h1v25h-1zM525 184h1v25h-1zM527 184h1v25h-1zM529 184h1v25h-1zM533 184h1v25h-1zM535 184h1v25h-1zM537 184h1v25h-1zM539 184h1v25h-1zM541 184h1v25h-1zM575 184h1v25h-1zM577 184h1v25h-1zM579 184h1v25h-1zM581 184h1v25h-1zM583 184h1v25h-1zM585 184h1v25h-1zM587 184h1v25h-1zM589 184h1v25h-1zM593 184h1v25h-1zM595 184h1v25h-1zM597 184h1v25h-1zM599 184h1v25h-1zM601 184h1v25h-1zM635 184h1v25h-1zM637 184h1v25h-1zM639 184h1v25h-1zM641 184h1v25h-1zM643 184h1v25h-1zM645 184h1v25h-1zM647 184h1v25h-1zM649 184h1v25h-1zM653 184h1v25h-1zM655 184h1v25h-1zM657 184h1v25h-1zM659 184h1v25h-1zM661 184h1v25h-1zM693 184h1v25h-1zM695 184h1v25h-1zM697 184h1v25h-1zM699 184h1v25h-1zM701 184h1v25h-1zM703 184h1v25h-1zM705 184h1v25h-1zM707 184h1v25h-1zM709 184h1v25h-1zM713 184h1v25h-1zM715 184h1v25h-1zM717 184h1v25h-1zM719 184h1v25h-1zM721 184h1v25h-1zM1 210h1v25h-1zM3 210h1v25h-1zM5 210h1v25h-1zM7 210h1v25h-1zM9 210h1v25h-1zM43 210h1v25h-1zM45 210h1v25h-1zM47 210h1v25h-1zM49 210h1v25h-1zM53 210h1v25h-1zM55 210h1v25h-1zM57 210h1v25h-1zM59 210h1v25h-1zM61 210h1v25h-1zM63 210h1v25h-1zM65 210h1v25h-1zM67 210h1v25h-1zM465 210h1v25h-1zM467 210h1v25h-1zM469 210h1v25h-1zM473 210h1v25h-1zM475 210h1v25h-1zM477 210h1v25h-1zM479 210h1v25h-1zM513 210h1v25h-1zM515 210h1v25h-1zM517 210h1v25h-1zM519 210h1v25h-1zM521 210h1v25h-1zM523 210h1v25h-1zM525 210h1v25h-1zM527 210h1v25h-1zM529 210h1v25h-1zM533 210h1v25h-1zM535 210h1v25h-1zM537 210h1v25h-1zM539 210h1v25h-1zM573 210h1v25h-1zM575 210h1v25h-1zM577 210h1v25h-1zM579 210h1v25h-1zM581 210h1v25h-1zM583 210h1v25h-1zM585 210h1v25h-1zM587 210h1v25h-1zM589 210h1v25h-1zM593 210h1v25h-1zM595 210h1v25h-1zM597 210h1v25h-1zM599 210h1v25h-1zM633 210h1v25h-1zM635 210h1v25h-1zM637 210h1v25h-1zM639 210h1v25h-1zM641 210h1v25h-1zM643 210h1v25h-1zM645 210h1v25h-1zM647 210h1v25h-1zM649 210h1v25h-1zM653 210h1v25h-1zM655 210h1v25h-1zM657 210h1v25h-1zM659 210h1v25h-1zM693 210h1v25h-1zM695 210h1v25h-1zM697 210h1v25h-1zM699 210h1v25h-1zM701 210h1v25h-1zM703 210h1v25h-1zM705 210h1v25h-1zM707 210h1v25h-1zM709 210h1v25h-1zM713 210h1v25h-1zM715 210h1v25h-1zM717 210h1v25h-1zM719 210h1v25h-1zM1 236h1v25h-1zM7 236h1v25h-1zM43 236h1v25h-1zM49 236h1v25h-1zM55 236h1v25h-1zM61 236h1v25h-1zM103 236h1v25h-1zM109 236h1v25h-1zM517 236h1v25h-1zM523 236h1v25h-1zM529 236h1v25h-1zM535 236h1v25h-1zM577 236h1v25h-1zM583 236h1v25h-1zM589 236h1v25h-1zM595 236h1v25h-1zM637 236h1v25h-1zM643 236h1v25h-1zM649 236h1v25h-1zM655 236h1v25h-1zM697 236h1v25h-1zM703 236h1v25h-1zM709 236h1v25h-1zM715 236h1v25h-1zM1 262h1v25h-1zM37 262h1v25h-1zM43 262h1v25h-1zM49 262h1v25h-1zM55 262h1v25h-1zM61 262h1v25h-1zM97 262h1v25h-1zM103 262h1v25h-1zM109 262h1v25h-1zM115 262h1v25h-1zM121 262h1v25h-1zM577 262h1v25h-1zM583 262h1v25h-1zM589 262h1v25h-1zM637 262h1v25h-1zM643 262h1v25h-1zM649 262h1v25h-1zM685 262h1v25h-1zM697 262h1v25h-1zM703 262h1v25h-1zM709 262h1v25h-1zM1 288h1v25h-1zM35 288h1v25h-1zM37 288h1v25h-1zM39 288h1v25h-1zM41 288h1v25h-1zM43 288h1v25h-1zM45 288h1v25h-1zM47 288h1v25h-1zM49 288h1v25h-1zM53 288h1v25h-1zM55 288h1v25h-1zM57 288h1v25h-1zM59 288h1v25h-1zM61 288h1v25h-1zM93 288h1v25h-1zM95 288h1v25h-1zM97 288h1v25h-1zM99 288h1v25h-1zM101 288h1v25h-1zM103 288h1v25h-1zM105 288h1v25h-1zM107 288h1v25h-1zM109 288h1v25h-1zM113 288h1v25h-1zM115 288h1v25h-1zM117 288h1v25h-1zM119 288h1v25h-1zM153 288h1v25h-1zM155 288h1v25h-1zM157 288h1v25h-1zM159 288h1v25h-1zM161 288h1v25h-1zM163 288h1v25h-1zM165 288h1v25h-1zM167 288h1v25h-1zM169 288h1v25h-1zM173 288h1v25h-1zM567 288h1v25h-1zM569 288h1v25h-1zM573 288h1v25h-1zM575 288h1v25h-1zM577 288h1v25h-1zM579 288h1v25h-1zM581 288h1v25h-1zM583 288h1v25h-1zM585 288h1v25h-1zM587 288h1v25h-1zM589 288h1v25h-1zM625 288h1v25h-1zM627 288h1v25h-1zM629 288h1v25h-1zM633 288h1v25h-1zM635 288h1v25h-1zM637 288h1v25h-1zM639 288h1v25h-1zM641 288h1v25h-1zM643 288h1v25h-1zM645 288h1v25h-1zM647 288h1v25h-1zM649 288h1v25h-1zM683 288h1v25h-1zM685 288h1v25h-1zM687 288h1v25h-1zM689 288h1v25h-1zM693 288h1v25h-1zM695 288h1v25h-1zM697 288h1v25h-1zM699 288h1v25h-1zM701 288h1v25h-1zM703 288h1v25h-1zM705 288h1v25h-1zM707 288h1v25h-1zM709 288h1v25h-1zM1 314h1v12h-1zM585 314h1v12h-1zM3 161h1v22h-1zM3 236h1v51h-1zM5 236h1v51h-1zM39 236h1v51h-1zM41 236h1v51h-1zM45 236h1v51h-1zM47 236h1v51h-1zM53 236h1v51h-1zM57 236h1v51h-1zM59 236h1v51h-1zM63 236h1v51h-1zM99 236h1v51h-1zM101 236h1v51h-1zM105 236h1v51h-1zM107 236h1v51h-1zM533 236h1v51h-1zM569 236h1v51h-1zM573 236h1v51h-1zM575 236h1v51h-1zM579 236h1v51h-1zM581 236h1v51h-1zM585 236h1v51h-1zM587 236h1v51h-1zM593 236h1v51h-1zM629 236h1v51h-1zM633 236h1v51h-1zM635 236h1v51h-1zM639 236h1v51h-1zM641 236h1v51h-1zM645 236h1v51h-1zM647 236h1v51h-1zM653 236h1v51h-1zM689 236h1v51h-1zM693 236h1v51h-1zM695 236h1v51h-1zM699 236h1v51h-1zM701 236h1v51h-1zM705 236h1v51h-1zM707 236h1v51h-1zM713 236h1v51h-1zM3 288h1v20h-1zM5 162h1v21h-1zM5 288h1v2h-1zM7 163h1v20h-1zM7 262h1v8h-1zM9 165h1v18h-1zM9 236h1v13h-1zM13 168h1v15h-1zM13 184h1v19h-1zM15 169h1v8h-1zM23 389h1v2h-1zM113 389h1v2h-1zM699 389h1v2h-1zM701 389h1v2h-1zM23 392h1v12h-1zM25 392h1v12h-1zM27 392h1v12h-1zM29 392h1v12h-1zM33 392h1v12h-1zM35 392h1v12h-1zM37 392h1v12h-1zM39 392h1v12h-1zM41 392h1v12h-1zM43 392h1v12h-1zM45 392h1v12h-1zM47 392h1v12h-1zM49 392h1v12h-1zM25 367h1v16h-1zM25 385h1v6h-1zM27 385h1v6h-1zM29 385h1v6h-1zM33 385h1v6h-1zM35 385h1v6h-1zM37 385h1v6h-1zM39 385h1v6h-1zM41 385h1v6h-1zM43 385h1v6h-1zM45 385h1v6h-1zM47 385h1v6h-1zM49 385h1v6h-1zM53 385h1v6h-1zM27 346h1v19h-1zM27 366h1v17h-1zM29 366h1v17h-1zM33 366h1v17h-1zM35 366h1v17h-1zM37 366h1v17h-1zM39 366h1v17h-1zM41 366h1v17h-1zM43 366h1v17h-1zM45 366h1v17h-1zM47 366h1v17h-1zM49 366h1v17h-1zM53 366h1v17h-1zM703 366h1v17h-1zM29 327h1v12h-1zM219 327h1v12h-1zM29 340h1v25h-1zM33 340h1v25h-1zM35 340h1v25h-1zM37 340h1v25h-1zM39 340h1v25h-1zM41 340h1v25h-1zM43 340h1v25h-1zM45 340h1v25h-1zM47 340h1v25h-1zM49 340h1v25h-1zM53 340h1v25h-1zM55 340h1v25h-1zM89 340h1v25h-1zM93 340h1v25h-1zM95 340h1v25h-1zM97 340h1v25h-1zM99 340h1v25h-1zM101 340h1v25h-1zM103 340h1v25h-1zM105 340h1v25h-1zM107 340h1v25h-1zM109 340h1v25h-1zM113 340h1v25h-1zM115 340h1v25h-1zM149 340h1v25h-1zM153 340h1v25h-1zM155 340h1v25h-1zM157 340h1v25h-1zM159 340h1v25h-1zM161 340h1v25h-1zM163 340h1v25h-1zM165 340h1v25h-1zM167 340h1v25h-1zM169 340h1v25h-1zM173 340h1v25h-1zM175 340h1v25h-1zM207 340h1v25h-1zM209 340h1v25h-1zM213 340h1v25h-1zM215 340h1v25h-1zM217 340h1v25h-1zM219 340h1v25h-1zM221 340h1v25h-1zM223 340h1v25h-1zM225 340h1v25h-1zM227 340h1v25h-1zM229 340h1v25h-1zM233 340h1v25h-1zM643 340h1v25h-1zM645 340h1v25h-1zM679 340h1v25h-1zM681 340h1v25h-1zM683 340h1v25h-1zM685 340h1v25h-1zM687 340h1v25h-1zM689 340h1v25h-1zM693 340h1v25h-1zM695 340h1v25h-1zM697 340h1v25h-1zM699 340h1v25h-1zM701 340h1v25h-1zM703 340h1v25h-1zM33 290h1v23h-1zM177 290h1v23h-1zM33 314h1v25h-1zM35 314h1v25h-1zM37 314h1v25h-1zM39 314h1v25h-1zM41 314h1v25h-1zM43 314h1v25h-1zM45 314h1v25h-1zM47 314h1v25h-1zM49 314h1v25h-1zM53 314h1v25h-1zM55 314h1v25h-1zM57 314h1v25h-1zM59 314h1v25h-1zM93 314h1v25h-1zM95 314h1v25h-1zM97 314h1v25h-1zM99 314h1v25h-1zM101 314h1v25h-1zM103 314h1v25h-1zM105 314h1v25h-1zM107 314h1v25h-1zM109 314h1v25h-1zM113 314h1v25h-1zM115 314h1v25h-1zM117 314h1v25h-1zM153 314h1v25h-1zM155 314h1v25h-1zM157 314h1v25h-1zM159 314h1v25h-1zM161 314h1v25h-1zM163 314h1v25h-1zM165 314h1v25h-1zM167 314h1v25h-1zM169 314h1v25h-1zM173 314h1v25h-1zM175 314h1v25h-1zM177 314h1v25h-1zM621 314h1v25h-1zM623 314h1v25h-1zM625 314h1v25h-1zM627 314h1v25h-1zM629 314h1v25h-1zM633 314h1v25h-1zM635 314h1v25h-1zM637 314h1v25h-1zM639 314h1v25h-1zM641 314h1v25h-1zM643 314h1v25h-1zM645 314h1v25h-1zM647 314h1v25h-1zM681 314h1v25h-1zM683 314h1v25h-1zM685 314h1v25h-1zM687 314h1v25h-1zM689 314h1v25h-1zM693 314h1v25h-1zM695 314h1v25h-1zM697 314h1v25h-1zM699 314h1v25h-1zM701 314h1v25h-1zM703 314h1v25h-1zM705 314h1v25h-1zM707 314h1v25h-1zM35 271h1v16h-1zM37 253h1v8h-1zM39 233h1v2h-1zM105 233h1v2h-1zM41 213h1v22h-1zM43 193h1v16h-1zM49 193h1v16h-1zM573 193h1v16h-1zM45 190h1v19h-1zM47 191h1v18h-1zM53 195h1v14h-1zM53 392h1v5h-1zM693 392h1v5h-1zM55 197h1v12h-1zM55 366h1v13h-1zM57 198h1v11h-1zM57 340h1v20h-1zM635 340h1v20h-1zM59 200h1v9h-1zM59 340h1v2h-1zM61 201h1v8h-1zM61 314h1v9h-1zM581 314h1v9h-1zM63 203h1v6h-1zM63 288h1v15h-1zM65 204h1v5h-1zM65 236h1v45h-1zM67 205h1v4h-1zM513 205h1v4h-1zM67 236h1v22h-1zM69 207h1v2h-1zM69 210h1v24h-1zM81 403h1v1h-1zM83 383h1v1h-1zM83 386h1v5h-1zM85 386h1v5h-1zM87 386h1v5h-1zM281 386h1v5h-1zM83 392h1v13h-1zM85 392h1v13h-1zM87 392h1v13h-1zM89 392h1v13h-1zM93 392h1v13h-1zM95 392h1v13h-1zM97 392h1v13h-1zM85 364h1v1h-1zM85 366h1v18h-1zM87 366h1v18h-1zM87 345h1v20h-1zM677 345h1v20h-1zM89 326h1v13h-1zM89 366h1v19h-1zM93 366h1v19h-1zM95 366h1v19h-1zM97 366h1v19h-1zM89 387h1v4h-1zM93 387h1v4h-1zM95 387h1v4h-1zM97 387h1v4h-1zM95 268h1v19h-1zM97 248h1v13h-1zM99 229h1v6h-1zM99 366h1v20h-1zM101 366h1v20h-1zM103 366h1v20h-1zM105 366h1v20h-1zM107 366h1v20h-1zM109 366h1v20h-1zM99 388h1v3h-1zM101 388h1v3h-1zM103 388h1v3h-1zM105 388h1v3h-1zM107 388h1v3h-1zM109 388h1v3h-1zM283 388h1v3h-1zM99 392h1v14h-1zM101 392h1v14h-1zM103 392h1v14h-1zM105 392h1v14h-1zM107 392h1v14h-1zM109 392h1v14h-1zM101 230h1v5h-1zM103 232h1v3h-1zM113 239h1v48h-1zM687 239h1v48h-1zM113 366h1v21h-1zM677 366h1v21h-1zM699 366h1v21h-1zM701 366h1v21h-1zM113 392h1v3h-1zM115 241h1v20h-1zM115 366h1v9h-1zM117 242h1v45h-1zM117 340h1v15h-1zM627 340h1v15h-1zM119 244h1v43h-1zM119 314h1v20h-1zM121 245h1v16h-1zM121 288h1v24h-1zM565 288h1v24h-1zM123 247h1v40h-1zM125 249h1v14h-1zM141 400h1v10h-1zM143 381h1v9h-1zM143 392h1v18h-1zM145 362h1v3h-1zM145 366h1v25h-1zM147 366h1v25h-1zM149 366h1v25h-1zM153 366h1v25h-1zM155 366h1v25h-1zM157 366h1v25h-1zM159 366h1v25h-1zM161 366h1v25h-1zM163 366h1v25h-1zM165 366h1v25h-1zM167 366h1v25h-1zM169 366h1v25h-1zM205 366h1v25h-1zM207 366h1v25h-1zM209 366h1v25h-1zM213 366h1v25h-1zM215 366h1v25h-1zM217 366h1v25h-1zM219 366h1v25h-1zM221 366h1v25h-1zM223 366h1v25h-1zM225 366h1v25h-1zM227 366h1v25h-1zM229 366h1v25h-1zM145 393h1v17h-1zM147 343h1v22h-1zM147 393h1v18h-1zM149 393h1v18h-1zM149 323h1v16h-1zM153 282h1v5h-1zM167 282h1v5h-1zM153 394h1v17h-1zM155 272h1v15h-1zM155 394h1v18h-1zM157 394h1v18h-1zM159 394h1v18h-1zM157 274h1v13h-1zM159 276h1v11h-1zM161 277h1v10h-1zM161 392h1v1h-1zM163 392h1v1h-1zM165 392h1v1h-1zM167 392h1v1h-1zM687 392h1v1h-1zM161 395h1v17h-1zM163 279h1v8h-1zM163 395h1v18h-1zM165 395h1v18h-1zM167 395h1v18h-1zM165 280h1v7h-1zM169 284h1v3h-1zM169 392h1v2h-1zM689 392h1v2h-1zM169 396h1v17h-1zM173 366h1v23h-1zM681 366h1v23h-1zM683 366h1v23h-1zM685 366h1v23h-1zM687 366h1v23h-1zM689 366h1v23h-1zM175 289h1v24h-1zM623 289h1v24h-1zM177 340h1v3h-1zM179 292h1v21h-1zM179 314h1v3h-1zM201 399h1v18h-1zM203 378h1v13h-1zM273 378h1v13h-1zM203 392h1v6h-1zM205 392h1v6h-1zM207 392h1v6h-1zM209 392h1v6h-1zM695 392h1v6h-1zM203 400h1v17h-1zM205 400h1v17h-1zM207 400h1v17h-1zM209 400h1v17h-1zM205 358h1v7h-1zM207 337h1v2h-1zM209 318h1v21h-1zM213 322h1v17h-1zM679 322h1v17h-1zM213 392h1v7h-1zM215 392h1v7h-1zM217 392h1v7h-1zM219 392h1v7h-1zM221 392h1v7h-1zM223 392h1v7h-1zM697 392h1v7h-1zM213 401h1v18h-1zM215 401h1v18h-1zM215 324h1v15h-1zM217 325h1v14h-1zM217 401h1v16h-1zM219 401h1v16h-1zM221 401h1v16h-1zM223 401h1v16h-1zM217 418h1v1h-1zM219 418h1v1h-1zM221 418h1v1h-1zM221 329h1v10h-1zM223 331h1v8h-1zM223 418h1v2h-1zM225 418h1v2h-1zM227 418h1v2h-1zM229 418h1v2h-1zM225 333h1v6h-1zM225 392h1v8h-1zM227 392h1v8h-1zM229 392h1v8h-1zM225 402h1v15h-1zM227 402h1v15h-1zM229 402h1v15h-1zM227 335h1v4h-1zM229 336h1v3h-1zM233 366h1v8h-1zM235 342h1v6h-1zM259 412h1v10h-1zM261 392h1v10h-1zM263 392h1v10h-1zM265 392h1v10h-1zM267 392h1v10h-1zM269 392h1v10h-1zM273 392h1v10h-1zM275 392h1v10h-1zM277 392h1v10h-1zM279 392h1v10h-1zM281 392h1v10h-1zM283 392h1v10h-1zM285 392h1v10h-1zM287 392h1v10h-1zM701 392h1v10h-1zM261 404h1v18h-1zM263 404h1v18h-1zM263 371h1v20h-1zM265 371h1v20h-1zM265 404h1v13h-1zM267 404h1v13h-1zM269 404h1v13h-1zM273 404h1v13h-1zM275 404h1v13h-1zM277 404h1v13h-1zM279 404h1v13h-1zM281 404h1v13h-1zM265 418h1v4h-1zM267 418h1v4h-1zM267 373h1v18h-1zM269 375h1v16h-1zM269 418h1v5h-1zM273 418h1v5h-1zM275 418h1v5h-1zM277 418h1v5h-1zM279 418h1v5h-1zM281 418h1v5h-1zM275 380h1v11h-1zM277 382h1v9h-1zM279 384h1v7h-1zM283 404h1v19h-1zM285 404h1v19h-1zM287 404h1v19h-1zM285 390h1v1h-1zM693 390h1v1h-1zM695 390h1v1h-1zM697 390h1v1h-1zM289 394h1v8h-1zM289 404h1v3h-1zM345 106h1v13h-1zM347 106h1v13h-1zM349 106h1v13h-1zM353 106h1v13h-1zM345 121h1v1h-1zM347 99h1v6h-1zM349 99h1v6h-1zM353 99h1v6h-1zM361 99h1v6h-1zM363 99h1v6h-1zM365 99h1v6h-1zM367 99h1v6h-1zM369 99h1v6h-1zM373 99h1v6h-1zM409 99h1v6h-1zM413 99h1v6h-1zM415 99h1v6h-1zM417 99h1v6h-1zM419 99h1v6h-1zM347 121h1v3h-1zM349 121h1v5h-1zM353 121h1v9h-1zM355 99h1v19h-1zM357 99h1v19h-1zM359 99h1v19h-1zM405 99h1v19h-1zM407 99h1v19h-1zM355 120h1v11h-1zM357 120h1v11h-1zM359 120h1v11h-1zM361 120h1v11h-1zM363 120h1v11h-1zM365 120h1v11h-1zM367 120h1v11h-1zM369 120h1v11h-1zM403 120h1v11h-1zM405 120h1v11h-1zM407 120h1v11h-1zM409 120h1v11h-1zM413 120h1v11h-1zM415 120h1v11h-1zM417 120h1v11h-1zM419 120h1v11h-1zM421 120h1v11h-1zM423 120h1v11h-1zM425 120h1v11h-1zM427 120h1v11h-1zM429 120h1v11h-1zM605 120h1v11h-1zM607 120h1v11h-1zM609 120h1v11h-1zM653 120h1v11h-1zM655 120h1v11h-1zM657 120h1v11h-1zM659 120h1v11h-1zM661 120h1v11h-1zM663 120h1v11h-1zM665 120h1v11h-1zM667 120h1v11h-1zM669 120h1v11h-1zM719 120h1v11h-1zM357 132h1v2h-1zM669 132h1v2h-1zM723 132h1v2h-1zM725 132h1v2h-1zM727 132h1v2h-1zM359 132h1v4h-1zM581 132h1v4h-1zM583 132h1v4h-1zM585 132h1v4h-1zM587 132h1v4h-1zM589 132h1v4h-1zM707 132h1v4h-1zM709 132h1v4h-1zM713 132h1v4h-1zM361 106h1v12h-1zM363 106h1v12h-1zM365 106h1v12h-1zM367 106h1v12h-1zM369 106h1v12h-1zM373 106h1v12h-1zM409 106h1v12h-1zM413 106h1v12h-1zM415 106h1v12h-1zM417 106h1v12h-1zM419 106h1v12h-1zM421 106h1v12h-1zM423 106h1v12h-1zM425 106h1v12h-1zM361 132h1v6h-1zM601 132h1v6h-1zM603 132h1v6h-1zM605 132h1v6h-1zM607 132h1v6h-1zM609 132h1v6h-1zM363 132h1v8h-1zM639 132h1v8h-1zM641 132h1v8h-1zM643 132h1v8h-1zM645 132h1v8h-1zM647 132h1v8h-1zM649 132h1v8h-1zM653 132h1v8h-1zM655 132h1v8h-1zM657 132h1v8h-1zM659 132h1v8h-1zM661 132h1v8h-1zM365 132h1v10h-1zM367 132h1v12h-1zM369 132h1v14h-1zM399 167h1v8h-1zM401 140h1v17h-1zM601 140h1v17h-1zM603 140h1v17h-1zM605 140h1v17h-1zM607 140h1v17h-1zM401 158h1v19h-1zM403 114h1v4h-1zM403 132h1v25h-1zM405 132h1v25h-1zM407 132h1v25h-1zM409 132h1v25h-1zM413 132h1v25h-1zM415 132h1v25h-1zM417 132h1v25h-1zM419 132h1v25h-1zM421 132h1v25h-1zM423 132h1v25h-1zM425 132h1v25h-1zM427 132h1v25h-1zM461 132h1v25h-1zM463 132h1v25h-1zM465 132h1v25h-1zM467 132h1v25h-1zM469 132h1v25h-1zM473 132h1v25h-1zM475 132h1v25h-1zM477 132h1v25h-1zM479 132h1v25h-1zM481 132h1v25h-1zM483 132h1v25h-1zM485 132h1v25h-1zM487 132h1v25h-1zM521 132h1v25h-1zM523 132h1v25h-1zM525 132h1v25h-1zM527 132h1v25h-1zM529 132h1v25h-1zM533 132h1v25h-1zM535 132h1v25h-1zM537 132h1v25h-1zM539 132h1v25h-1zM403 158h1v21h-1zM405 158h1v23h-1zM407 158h1v25h-1zM409 158h1v25h-1zM413 158h1v25h-1zM415 158h1v25h-1zM417 158h1v25h-1zM419 158h1v25h-1zM421 158h1v25h-1zM423 158h1v25h-1zM425 158h1v25h-1zM459 158h1v25h-1zM461 158h1v25h-1zM463 158h1v25h-1zM465 158h1v25h-1zM467 158h1v25h-1zM469 158h1v25h-1zM473 158h1v25h-1zM475 158h1v25h-1zM477 158h1v25h-1zM479 158h1v25h-1zM481 158h1v25h-1zM483 158h1v25h-1zM485 158h1v25h-1zM519 158h1v25h-1zM521 158h1v25h-1zM523 158h1v25h-1zM525 158h1v25h-1zM527 158h1v25h-1zM529 158h1v25h-1zM533 158h1v25h-1zM535 158h1v25h-1zM537 158h1v25h-1zM539 158h1v25h-1zM541 158h1v25h-1zM543 158h1v25h-1zM545 158h1v25h-1zM577 158h1v25h-1zM579 158h1v25h-1zM581 158h1v25h-1zM583 158h1v25h-1zM585 158h1v25h-1zM587 158h1v25h-1zM589 158h1v25h-1zM593 158h1v25h-1zM595 158h1v25h-1zM597 158h1v25h-1zM599 158h1v25h-1zM601 158h1v25h-1zM603 158h1v25h-1zM605 158h1v25h-1zM637 158h1v25h-1zM639 158h1v25h-1zM641 158h1v25h-1zM643 158h1v25h-1zM645 158h1v25h-1zM647 158h1v25h-1zM649 158h1v25h-1zM653 158h1v25h-1zM655 158h1v25h-1zM657 158h1v25h-1zM659 158h1v25h-1zM661 158h1v25h-1zM663 158h1v25h-1zM697 158h1v25h-1zM699 158h1v25h-1zM701 158h1v25h-1zM703 158h1v25h-1zM705 158h1v25h-1zM707 158h1v25h-1zM709 158h1v25h-1zM713 158h1v25h-1zM715 158h1v25h-1zM717 158h1v25h-1zM719 158h1v25h-1zM721 158h1v25h-1zM723 158h1v25h-1zM409 184h1v1h-1zM485 184h1v1h-1zM413 184h1v4h-1zM415 184h1v6h-1zM417 184h1v8h-1zM425 184h1v8h-1zM419 184h1v10h-1zM421 100h1v5h-1zM423 100h1v5h-1zM425 100h1v5h-1zM433 100h1v5h-1zM421 184h1v12h-1zM423 184h1v14h-1zM427 100h1v18h-1zM429 100h1v18h-1zM427 158h1v13h-1zM429 132h1v19h-1zM433 106h1v6h-1zM455 199h1v10h-1zM455 210h1v16h-1zM457 173h1v10h-1zM457 210h1v18h-1zM459 148h1v9h-1zM459 210h1v20h-1zM461 125h1v6h-1zM479 125h1v6h-1zM481 125h1v6h-1zM483 125h1v6h-1zM485 125h1v6h-1zM487 125h1v6h-1zM727 125h1v6h-1zM461 210h1v21h-1zM463 103h1v2h-1zM465 103h1v2h-1zM467 103h1v2h-1zM463 106h1v15h-1zM465 106h1v15h-1zM467 106h1v15h-1zM463 123h1v8h-1zM465 123h1v8h-1zM467 123h1v8h-1zM463 210h1v23h-1zM469 104h1v1h-1zM473 104h1v1h-1zM469 106h1v16h-1zM473 106h1v16h-1zM469 124h1v7h-1zM473 124h1v7h-1zM475 124h1v7h-1zM477 124h1v7h-1zM725 124h1v7h-1zM469 236h1v2h-1zM599 236h1v2h-1zM473 236h1v5h-1zM475 104h1v18h-1zM477 104h1v18h-1zM475 236h1v7h-1zM477 236h1v9h-1zM479 105h1v18h-1zM479 236h1v10h-1zM481 106h1v17h-1zM483 106h1v17h-1zM485 106h1v17h-1zM487 106h1v17h-1zM481 210h1v15h-1zM483 184h1v21h-1zM487 158h1v8h-1zM489 106h1v18h-1zM489 126h1v5h-1zM489 132h1v15h-1zM493 106h1v5h-1zM509 254h1v16h-1zM513 236h1v38h-1zM515 181h1v2h-1zM515 236h1v39h-1zM517 262h1v15h-1zM519 138h1v19h-1zM581 138h1v19h-1zM583 138h1v19h-1zM585 138h1v19h-1zM587 138h1v19h-1zM589 138h1v19h-1zM707 138h1v19h-1zM709 138h1v19h-1zM713 138h1v19h-1zM519 236h1v42h-1zM521 118h1v10h-1zM521 130h1v1h-1zM523 130h1v1h-1zM525 130h1v1h-1zM521 236h1v44h-1zM523 110h1v18h-1zM523 262h1v19h-1zM525 111h1v17h-1zM525 236h1v47h-1zM527 111h1v18h-1zM529 111h1v18h-1zM527 236h1v48h-1zM529 262h1v24h-1zM533 112h1v18h-1zM535 112h1v18h-1zM537 112h1v18h-1zM533 288h1v1h-1zM535 262h1v18h-1zM537 236h1v24h-1zM539 113h1v17h-1zM539 236h1v4h-1zM541 113h1v18h-1zM543 113h1v18h-1zM545 113h1v18h-1zM541 133h1v24h-1zM543 133h1v24h-1zM545 133h1v24h-1zM547 133h1v24h-1zM541 210h1v11h-1zM543 184h1v18h-1zM603 184h1v18h-1zM547 114h1v17h-1zM549 114h1v17h-1zM547 158h1v7h-1zM549 134h1v13h-1zM563 308h1v3h-1zM565 283h1v4h-1zM567 259h1v28h-1zM569 314h1v1h-1zM573 314h1v4h-1zM575 172h1v11h-1zM575 314h1v5h-1zM577 153h1v4h-1zM577 314h1v7h-1zM579 133h1v2h-1zM579 137h1v20h-1zM715 137h1v20h-1zM717 137h1v20h-1zM719 137h1v20h-1zM721 137h1v20h-1zM579 314h1v8h-1zM581 118h1v13h-1zM583 118h1v13h-1zM585 118h1v13h-1zM587 118h1v13h-1zM589 118h1v13h-1zM699 118h1v13h-1zM583 314h1v11h-1zM587 314h1v14h-1zM589 314h1v15h-1zM649 314h1v15h-1zM593 119h1v12h-1zM595 119h1v12h-1zM597 119h1v12h-1zM599 119h1v12h-1zM601 119h1v12h-1zM603 119h1v12h-1zM717 119h1v12h-1zM593 132h1v5h-1zM595 132h1v5h-1zM597 132h1v5h-1zM599 132h1v5h-1zM699 132h1v5h-1zM701 132h1v5h-1zM703 132h1v5h-1zM705 132h1v5h-1zM593 139h1v18h-1zM595 139h1v18h-1zM597 139h1v18h-1zM599 139h1v18h-1zM697 139h1v18h-1zM699 139h1v18h-1zM701 139h1v18h-1zM703 139h1v18h-1zM705 139h1v18h-1zM593 288h1v7h-1zM595 262h1v13h-1zM715 262h1v13h-1zM597 236h1v20h-1zM717 236h1v20h-1zM601 210h1v10h-1zM661 210h1v10h-1zM607 158h1v6h-1zM609 140h1v4h-1zM619 338h1v1h-1zM619 340h1v9h-1zM647 340h1v9h-1zM621 340h1v11h-1zM623 340h1v12h-1zM625 267h1v20h-1zM625 340h1v13h-1zM627 245h1v42h-1zM629 225h1v10h-1zM629 340h1v16h-1zM633 186h1v23h-1zM633 340h1v18h-1zM635 167h1v16h-1zM637 147h1v10h-1zM637 340h1v21h-1zM639 127h1v4h-1zM639 142h1v15h-1zM641 142h1v15h-1zM643 142h1v15h-1zM645 142h1v15h-1zM647 142h1v15h-1zM649 142h1v15h-1zM653 142h1v15h-1zM655 142h1v15h-1zM657 142h1v15h-1zM659 142h1v15h-1zM661 142h1v15h-1zM639 340h1v22h-1zM641 121h1v10h-1zM643 121h1v10h-1zM645 121h1v10h-1zM647 121h1v10h-1zM649 121h1v10h-1zM721 121h1v10h-1zM641 340h1v24h-1zM705 340h1v24h-1zM653 288h1v4h-1zM713 288h1v4h-1zM655 262h1v12h-1zM657 236h1v21h-1zM659 236h1v3h-1zM663 132h1v7h-1zM665 132h1v7h-1zM667 132h1v7h-1zM663 141h1v16h-1zM665 141h1v16h-1zM667 141h1v16h-1zM663 184h1v17h-1zM665 158h1v22h-1zM675 371h1v15h-1zM679 366h1v22h-1zM693 366h1v22h-1zM695 366h1v22h-1zM697 366h1v22h-1zM681 299h1v14h-1zM683 278h1v9h-1zM685 258h1v3h-1zM689 219h1v16h-1zM693 180h1v3h-1zM695 160h1v23h-1zM699 392h1v9h-1zM701 117h1v14h-1zM703 117h1v14h-1zM705 117h1v14h-1zM707 117h1v14h-1zM715 117h1v14h-1zM707 340h1v5h-1zM709 116h1v15h-1zM713 116h1v15h-1zM709 314h1v13h-1zM715 132h1v3h-1zM717 132h1v3h-1zM719 132h1v3h-1zM721 132h1v3h-1zM719 236h1v1h-1zM721 210h1v6h-1zM723 122h1v9h-1zM723 136h1v21h-1zM725 136h1v21h-1zM723 184h1v9h-1zM725 158h1v10h-1zM727 136h1v6h-1z"/>
<path fill="#404040" d="M15 11h1v3h-1zM23 11h1v3h-1zM74 11h1v3h-1zM82 11h1v3h-1zM133 11h1v3h-1zM141 11h1v3h-1zM192 11h1v3h-1zM200 11h1v3h-1zM252 11h1v3h-1zM260 11h1v3h-1zM311 11h1v3h-1zM319 11h1v3h-1zM370 11h1v3h-1zM378 11h1v3h-1zM429 11h1v3h-1zM437 11h1v3h-1zM488 11h1v3h-1zM496 11h1v3h-1zM548 11h1v3h-1zM556 11h1v3h-1zM607 11h1v3h-1zM615 11h1v3h-1zM666 11h1v3h-1zM674 11h1v3h-1zM724 11h1v3h-1zM15 508h1v3h-1zM23 508h1v3h-1zM74 508h1v3h-1zM82 508h1v3h-1zM133 508h1v3h-1zM141 508h1v3h-1zM192 508h1v3h-1zM200 508h1v3h-1zM252 508h1v3h-1zM260 508h1v3h-1zM311 508h1v3h-1zM319 508h1v3h-1zM370 508h1v3h-1zM378 508h1v3h-1zM429 508h1v3h-1zM437 508h1v3h-1zM488 508h1v3h-1zM496 508h1v3h-1zM548 508h1v3h-1zM556 508h1v3h-1zM607 508h1v3h-1zM615 508h1v3h-1zM666 508h1v3h-1zM674 508h1v3h-1zM724 508h1v3h-1zM16 9h2v7h-2zM21 9h2v7h-2zM75 9h2v7h-2zM80 9h2v7h-2zM134 9h2v7h-2zM139 9h2v7h-2zM193 9h2v7h-2zM198 9h2v7h-2zM253 9h2v7h-2zM258 9h2v7h-2zM312 9h2v7h-2zM317 9h2v7h-2zM371 9h2v7h-2zM376 9h2v7h-2zM430 9h2v7h-2zM435 9h2v7h-2zM489 9h2v7h-2zM494 9h2v7h-2zM549 9h2v7h-2zM554 9h2v7h-2zM608 9h2v7h-2zM613 9h2v7h-2zM667 9h2v7h-2zM672 9h2v7h-2zM725 9h2v7h-2zM16 506h2v7h-2zM21 506h2v7h-2zM75 506h2v7h-2zM80 506h2v7h-2zM134 506h2v7h-2zM139 506h2v7h-2zM193 506h2v7h-2zM198 506h2v7h-2zM253 506h2v7h-2zM258 506h2v7h-2zM312 506h2v7h-2zM317 506h2v7h-2zM371 506h2v7h-2zM376 506h2v7h-2zM430 506h2v7h-2zM435 506h2v7h-2zM489 506h2v7h-2zM494 506h2v7h-2zM549 506h2v7h-2zM554 506h2v7h-2zM608 506h2v7h-2zM613 506h2v7h-2zM667 506h2v7h-2zM672 506h2v7h-2zM725 506h2v7h-2zM18 8h3v9h-3zM77 8h3v9h-3zM136 8h3v9h-3zM195 8h3v9h-3zM255 8h3v9h-3zM314 8h3v9h-3zM373 8h3v9h-3zM432 8h3v9h-3zM491 8h3v9h-3zM551 8h3v9h-3zM610 8h3v9h-3zM669 8h3v9h-3zM727 8h3v9h-3zM18 505h3v9h-3zM77 505h3v9h-3zM136 505h3v9h-3zM195 505h3v9h-3zM255 505h3v9h-3zM314 505h3v9h-3zM373 505h3v9h-3zM432 505h3v9h-3zM491 505h3v9h-3zM551 505h3v9h-3zM610 505h3v9h-3zM669 505h3v9h-3zM727 505h3v9h-3z"/>
<path fill="#6cd0c4" d="M17 112h1v1h-1zM19 112h1v2h-1zM21 111h1v4h-1zM23 111h1v6h-1zM25 111h1v7h-1zM27 111h1v9h-1zM29 111h1v10h-1zM33 110h1v14h-1zM35 110h1v15h-1zM37 110h1v16h-1zM39 109h1v19h-1zM41 110h1v18h-1zM43 111h1v17h-1zM43 130h1v1h-1zM45 130h1v1h-1zM47 130h1v1h-1zM49 130h1v1h-1zM69 130h1v1h-1zM295 130h1v1h-1zM45 113h1v15h-1zM47 114h1v14h-1zM47 132h1v1h-1zM49 116h1v12h-1zM49 132h1v3h-1zM53 118h1v9h-1zM53 129h1v2h-1zM55 129h1v2h-1zM57 129h1v2h-1zM53 132h1v6h-1zM283 132h1v6h-1zM55 120h1v7h-1zM55 132h1v7h-1zM57 121h1v6h-1zM57 132h1v8h-1zM285 132h1v8h-1zM59 123h1v3h-1zM59 128h1v3h-1zM61 128h1v3h-1zM63 128h1v3h-1zM65 128h1v3h-1zM67 128h1v3h-1zM293 128h1v3h-1zM59 132h1v10h-1zM287 132h1v10h-1zM61 124h1v2h-1zM61 132h1v11h-1zM63 125h1v1h-1zM63 132h1v13h-1zM65 132h1v14h-1zM67 132h1v16h-1zM293 132h1v16h-1zM69 132h1v17h-1zM73 132h1v20h-1zM297 132h1v20h-1zM75 134h1v19h-1zM77 135h1v20h-1zM79 137h1v19h-1zM81 138h1v19h-1zM303 138h1v19h-1zM83 140h1v17h-1zM305 140h1v17h-1zM83 158h1v1h-1zM85 141h1v16h-1zM85 158h1v2h-1zM305 158h1v2h-1zM87 143h1v14h-1zM87 158h1v4h-1zM307 158h1v4h-1zM89 144h1v13h-1zM309 144h1v13h-1zM89 158h1v5h-1zM93 147h1v10h-1zM93 158h1v8h-1zM95 148h1v9h-1zM313 148h1v9h-1zM95 158h1v10h-1zM313 158h1v10h-1zM97 150h1v7h-1zM315 150h1v7h-1zM97 158h1v11h-1zM99 151h1v6h-1zM99 158h1v13h-1zM101 153h1v4h-1zM101 158h1v14h-1zM317 158h1v14h-1zM103 154h1v3h-1zM319 154h1v3h-1zM103 158h1v16h-1zM319 158h1v16h-1zM105 156h1v1h-1zM321 156h1v1h-1zM105 158h1v17h-1zM107 158h1v19h-1zM109 159h1v19h-1zM113 162h1v19h-1zM115 163h1v20h-1zM117 165h1v18h-1zM119 166h1v17h-1zM119 184h1v2h-1zM121 168h1v15h-1zM333 168h1v15h-1zM121 184h1v3h-1zM123 169h1v14h-1zM123 184h1v5h-1zM125 171h1v12h-1zM125 184h1v6h-1zM335 184h1v6h-1zM127 172h1v11h-1zM337 172h1v11h-1zM127 184h1v8h-1zM337 184h1v8h-1zM129 174h1v9h-1zM339 174h1v9h-1zM129 184h1v9h-1zM133 177h1v6h-1zM133 184h1v13h-1zM135 179h1v4h-1zM135 184h1v14h-1zM343 184h1v14h-1zM137 180h1v3h-1zM345 180h1v3h-1zM137 184h1v16h-1zM345 184h1v16h-1zM139 182h1v1h-1zM347 182h1v1h-1zM139 184h1v17h-1zM141 184h1v19h-1zM143 185h1v19h-1zM145 187h1v19h-1zM147 188h1v20h-1zM353 188h1v20h-1zM149 190h1v19h-1zM355 190h1v19h-1zM153 193h1v16h-1zM153 210h1v2h-1zM357 210h1v2h-1zM155 194h1v15h-1zM359 194h1v15h-1zM155 210h1v4h-1zM359 210h1v4h-1zM157 196h1v13h-1zM361 196h1v13h-1zM157 210h1v6h-1zM361 210h1v6h-1zM159 198h1v11h-1zM363 198h1v11h-1zM159 210h1v7h-1zM161 199h1v10h-1zM161 210h1v9h-1zM163 201h1v8h-1zM163 210h1v10h-1zM365 210h1v10h-1zM165 203h1v6h-1zM165 210h1v12h-1zM367 210h1v12h-1zM167 204h1v5h-1zM369 204h1v5h-1zM167 210h1v14h-1zM369 210h1v14h-1zM169 206h1v3h-1zM169 210h1v15h-1zM173 210h1v19h-1zM175 211h1v19h-1zM177 213h1v19h-1zM179 214h1v20h-1zM379 214h1v20h-1zM181 216h1v19h-1zM381 216h1v19h-1zM183 218h1v17h-1zM383 218h1v17h-1zM183 236h1v1h-1zM185 219h1v16h-1zM185 236h1v3h-1zM187 221h1v14h-1zM187 236h1v5h-1zM189 223h1v12h-1zM189 236h1v6h-1zM387 236h1v6h-1zM193 226h1v9h-1zM193 236h1v10h-1zM195 228h1v7h-1zM393 228h1v7h-1zM195 236h1v11h-1zM393 236h1v11h-1zM197 230h1v5h-1zM395 230h1v5h-1zM197 236h1v13h-1zM395 236h1v13h-1zM199 231h1v4h-1zM199 236h1v15h-1zM397 236h1v15h-1zM201 233h1v2h-1zM201 236h1v17h-1zM399 236h1v17h-1zM203 236h1v18h-1zM205 237h1v19h-1zM207 238h1v20h-1zM209 240h1v20h-1zM213 244h1v19h-1zM215 246h1v19h-1zM217 247h1v14h-1zM217 262h1v5h-1zM219 249h1v20h-1zM221 251h1v19h-1zM223 253h1v8h-1zM223 262h1v10h-1zM225 255h1v19h-1zM227 256h1v20h-1zM229 258h1v3h-1zM229 262h1v16h-1zM233 262h1v20h-1zM235 264h1v19h-1zM237 266h1v19h-1zM239 267h1v20h-1zM241 269h1v18h-1zM437 269h1v18h-1zM241 288h1v1h-1zM243 271h1v16h-1zM243 288h1v3h-1zM245 273h1v14h-1zM245 288h1v5h-1zM443 288h1v5h-1zM247 275h1v12h-1zM247 288h1v7h-1zM445 288h1v7h-1zM249 277h1v10h-1zM447 277h1v10h-1zM249 288h1v9h-1zM447 288h1v9h-1zM253 104h1v1h-1zM255 104h1v1h-1zM257 104h1v1h-1zM265 104h1v1h-1zM267 104h1v1h-1zM269 104h1v1h-1zM253 106h1v2h-1zM253 281h1v6h-1zM253 288h1v12h-1zM255 106h1v4h-1zM255 283h1v4h-1zM453 283h1v4h-1zM255 288h1v14h-1zM453 288h1v14h-1zM257 106h1v6h-1zM257 285h1v2h-1zM257 288h1v16h-1zM455 288h1v16h-1zM259 104h1v10h-1zM259 286h1v1h-1zM457 286h1v1h-1zM259 288h1v18h-1zM457 288h1v18h-1zM261 104h1v12h-1zM261 288h1v20h-1zM263 104h1v14h-1zM263 290h1v20h-1zM265 106h1v14h-1zM265 292h1v20h-1zM267 106h1v16h-1zM269 106h1v16h-1zM267 294h1v19h-1zM269 296h1v17h-1zM469 296h1v17h-1zM269 314h1v2h-1zM469 314h1v2h-1zM273 108h1v14h-1zM273 124h1v4h-1zM273 300h1v13h-1zM473 300h1v13h-1zM273 314h1v6h-1zM275 110h1v12h-1zM275 124h1v6h-1zM275 302h1v11h-1zM275 314h1v8h-1zM477 314h1v8h-1zM277 112h1v10h-1zM277 124h1v7h-1zM279 124h1v7h-1zM281 124h1v7h-1zM283 124h1v7h-1zM285 124h1v7h-1zM287 124h1v7h-1zM289 124h1v7h-1zM277 304h1v9h-1zM277 314h1v10h-1zM479 314h1v10h-1zM279 114h1v8h-1zM279 132h1v2h-1zM279 306h1v7h-1zM481 306h1v7h-1zM279 314h1v12h-1zM481 314h1v12h-1zM281 116h1v6h-1zM281 132h1v4h-1zM281 308h1v5h-1zM483 308h1v5h-1zM281 314h1v14h-1zM283 118h1v4h-1zM283 310h1v3h-1zM485 310h1v3h-1zM283 314h1v16h-1zM285 120h1v2h-1zM285 312h1v1h-1zM285 314h1v18h-1zM489 314h1v18h-1zM287 314h1v20h-1zM289 132h1v12h-1zM289 316h1v20h-1zM293 320h1v19h-1zM295 132h1v18h-1zM295 322h1v17h-1zM501 322h1v17h-1zM295 340h1v2h-1zM501 340h1v2h-1zM297 324h1v15h-1zM503 324h1v15h-1zM297 340h1v4h-1zM299 134h1v20h-1zM299 326h1v13h-1zM505 326h1v13h-1zM299 340h1v6h-1zM301 136h1v20h-1zM301 328h1v11h-1zM301 340h1v8h-1zM509 340h1v8h-1zM303 330h1v9h-1zM303 340h1v10h-1zM305 332h1v7h-1zM513 332h1v7h-1zM305 340h1v12h-1zM307 142h1v15h-1zM307 334h1v5h-1zM307 340h1v14h-1zM517 340h1v14h-1zM309 158h1v6h-1zM309 336h1v3h-1zM519 336h1v3h-1zM309 340h1v16h-1zM519 340h1v16h-1zM313 340h1v20h-1zM315 158h1v12h-1zM315 342h1v20h-1zM317 152h1v5h-1zM317 344h1v20h-1zM529 344h1v20h-1zM319 346h1v19h-1zM321 158h1v18h-1zM321 348h1v17h-1zM321 366h1v2h-1zM535 366h1v2h-1zM323 158h1v20h-1zM323 350h1v15h-1zM537 350h1v15h-1zM323 366h1v4h-1zM537 366h1v4h-1zM325 160h1v20h-1zM325 352h1v13h-1zM539 352h1v13h-1zM325 366h1v6h-1zM327 162h1v20h-1zM327 354h1v11h-1zM327 366h1v8h-1zM543 366h1v8h-1zM329 164h1v19h-1zM329 356h1v9h-1zM545 356h1v9h-1zM329 366h1v10h-1zM333 184h1v4h-1zM333 360h1v5h-1zM333 366h1v14h-1zM335 170h1v13h-1zM335 362h1v3h-1zM553 362h1v3h-1zM335 366h1v16h-1zM337 364h1v1h-1zM337 366h1v18h-1zM557 366h1v18h-1zM339 184h1v10h-1zM339 366h1v20h-1zM559 366h1v20h-1zM341 176h1v7h-1zM341 184h1v12h-1zM341 369h1v19h-1zM343 178h1v5h-1zM343 371h1v19h-1zM345 373h1v18h-1zM569 373h1v18h-1zM347 184h1v18h-1zM347 375h1v16h-1zM347 392h1v2h-1zM349 184h1v20h-1zM349 377h1v14h-1zM349 392h1v4h-1zM573 392h1v4h-1zM353 381h1v10h-1zM353 392h1v8h-1zM355 392h1v8h-1zM357 392h1v8h-1zM359 392h1v8h-1zM355 383h1v8h-1zM583 383h1v8h-1zM357 192h1v17h-1zM357 385h1v6h-1zM585 385h1v6h-1zM357 402h1v2h-1zM359 387h1v4h-1zM589 387h1v4h-1zM359 402h1v4h-1zM361 389h1v2h-1zM361 392h1v7h-1zM363 392h1v7h-1zM361 401h1v7h-1zM363 210h1v8h-1zM363 401h1v9h-1zM365 200h1v9h-1zM365 393h1v6h-1zM365 401h1v11h-1zM367 202h1v7h-1zM367 395h1v4h-1zM367 401h1v13h-1zM369 397h1v2h-1zM369 401h1v15h-1zM373 208h1v1h-1zM373 210h1v18h-1zM373 401h1v16h-1zM609 401h1v16h-1zM373 418h1v2h-1zM375 418h1v2h-1zM377 418h1v2h-1zM375 210h1v20h-1zM375 403h1v14h-1zM377 212h1v20h-1zM377 405h1v12h-1zM615 405h1v12h-1zM379 406h1v14h-1zM381 408h1v12h-1zM383 236h1v2h-1zM383 410h1v10h-1zM385 220h1v15h-1zM385 236h1v4h-1zM385 412h1v5h-1zM625 412h1v5h-1zM385 418h1v1h-1zM387 418h1v1h-1zM389 418h1v1h-1zM387 222h1v13h-1zM387 414h1v3h-1zM389 224h1v11h-1zM389 236h1v7h-1zM389 416h1v1h-1zM397 232h1v3h-1zM399 234h1v1h-1zM401 236h1v19h-1zM403 237h1v20h-1zM405 239h1v20h-1zM407 241h1v20h-1zM409 243h1v18h-1zM413 247h1v19h-1zM415 249h1v12h-1zM415 262h1v6h-1zM417 250h1v20h-1zM419 252h1v20h-1zM421 254h1v7h-1zM421 262h1v12h-1zM423 256h1v19h-1zM425 258h1v19h-1zM427 260h1v1h-1zM427 262h1v17h-1zM429 261h1v20h-1zM433 265h1v19h-1zM435 267h1v19h-1zM439 270h1v17h-1zM439 288h1v2h-1zM441 272h1v15h-1zM441 288h1v4h-1zM443 274h1v13h-1zM445 276h1v11h-1zM449 279h1v8h-1zM449 288h1v11h-1zM455 284h1v3h-1zM459 288h1v19h-1zM461 290h1v19h-1zM463 291h1v20h-1zM465 293h1v19h-1zM467 295h1v18h-1zM473 314h1v5h-1zM475 301h1v12h-1zM475 314h1v7h-1zM477 303h1v10h-1zM479 305h1v8h-1zM483 314h1v13h-1zM485 314h1v15h-1zM487 311h1v2h-1zM487 314h1v17h-1zM493 316h1v19h-1zM495 318h1v19h-1zM497 319h1v20h-1zM499 321h1v18h-1zM503 340h1v3h-1zM505 340h1v5h-1zM507 327h1v12h-1zM507 340h1v7h-1zM509 329h1v10h-1zM513 340h1v11h-1zM515 333h1v6h-1zM515 340h1v13h-1zM517 335h1v4h-1zM521 338h1v1h-1zM521 340h1v17h-1zM523 340h1v19h-1zM525 341h1v20h-1zM527 343h1v19h-1zM533 347h1v18h-1zM533 366h1v1h-1zM535 349h1v16h-1zM539 366h1v5h-1zM541 353h1v12h-1zM541 366h1v7h-1zM543 355h1v10h-1zM545 366h1v9h-1zM547 357h1v8h-1zM547 366h1v11h-1zM549 359h1v6h-1zM549 366h1v12h-1zM553 366h1v15h-1zM555 363h1v2h-1zM555 366h1v17h-1zM561 368h1v19h-1zM563 369h1v20h-1zM565 370h1v20h-1zM567 372h1v19h-1zM569 392h1v1h-1zM573 376h1v15h-1zM575 378h1v13h-1zM575 392h1v5h-1zM577 379h1v12h-1zM577 392h1v6h-1zM579 392h1v6h-1zM581 392h1v6h-1zM583 392h1v6h-1zM585 392h1v6h-1zM587 392h1v6h-1zM589 392h1v6h-1zM593 392h1v6h-1zM595 392h1v6h-1zM579 380h1v11h-1zM581 382h1v9h-1zM581 400h1v1h-1zM583 400h1v3h-1zM585 400h1v4h-1zM587 386h1v5h-1zM587 400h1v5h-1zM589 400h1v7h-1zM593 390h1v1h-1zM593 400h1v10h-1zM595 400h1v11h-1zM597 393h1v5h-1zM597 400h1v12h-1zM599 394h1v4h-1zM599 400h1v14h-1zM601 396h1v2h-1zM601 400h1v15h-1zM603 399h1v17h-1zM605 399h1v18h-1zM607 400h1v17h-1zM613 404h1v13h-1zM617 406h1v11h-1zM619 408h1v9h-1zM621 409h1v8h-1zM623 410h1v7h-1zM627 413h1v3h-1zM629 414h1v2h-1z"/>
<path fill="#8080ff" d="M41 109h1v1h-1zM43 109h1v2h-1zM45 109h1v4h-1zM47 109h1v5h-1zM49 109h1v7h-1zM53 108h1v10h-1zM55 108h1v12h-1zM57 108h1v13h-1zM59 108h1v15h-1zM253 108h1v15h-1zM61 108h1v16h-1zM63 107h1v18h-1zM65 107h1v19h-1zM67 109h1v17h-1zM69 110h1v16h-1zM69 128h1v2h-1zM73 113h1v12h-1zM73 127h1v4h-1zM75 127h1v4h-1zM77 127h1v4h-1zM79 127h1v4h-1zM81 127h1v4h-1zM93 127h1v4h-1zM75 114h1v11h-1zM75 132h1v2h-1zM259 132h1v2h-1zM77 116h1v9h-1zM77 132h1v3h-1zM79 117h1v8h-1zM79 132h1v5h-1zM81 119h1v6h-1zM81 132h1v6h-1zM263 132h1v6h-1zM83 120h1v4h-1zM83 126h1v5h-1zM85 126h1v5h-1zM87 126h1v5h-1zM89 126h1v5h-1zM83 132h1v8h-1zM265 132h1v8h-1zM85 121h1v3h-1zM85 132h1v9h-1zM87 123h1v1h-1zM87 132h1v11h-1zM89 132h1v12h-1zM269 132h1v12h-1zM93 132h1v15h-1zM95 129h1v2h-1zM95 132h1v16h-1zM273 132h1v16h-1zM97 130h1v1h-1zM275 130h1v1h-1zM97 132h1v18h-1zM275 132h1v18h-1zM99 132h1v19h-1zM101 133h1v20h-1zM103 135h1v19h-1zM105 136h1v20h-1zM281 136h1v20h-1zM107 138h1v19h-1zM283 138h1v19h-1zM109 139h1v18h-1zM109 158h1v1h-1zM113 142h1v15h-1zM287 142h1v15h-1zM113 158h1v4h-1zM287 158h1v4h-1zM115 144h1v13h-1zM289 144h1v13h-1zM115 158h1v5h-1zM117 145h1v12h-1zM117 158h1v7h-1zM119 147h1v10h-1zM119 158h1v8h-1zM121 148h1v9h-1zM293 148h1v9h-1zM121 158h1v10h-1zM293 158h1v10h-1zM123 150h1v7h-1zM295 150h1v7h-1zM123 158h1v11h-1zM125 151h1v6h-1zM125 158h1v13h-1zM127 153h1v4h-1zM127 158h1v14h-1zM297 158h1v14h-1zM129 154h1v3h-1zM299 154h1v3h-1zM129 158h1v16h-1zM299 158h1v16h-1zM133 158h1v19h-1zM135 159h1v20h-1zM137 160h1v20h-1zM305 160h1v20h-1zM139 162h1v20h-1zM307 162h1v20h-1zM141 164h1v19h-1zM309 164h1v19h-1zM143 165h1v18h-1zM143 184h1v1h-1zM145 167h1v16h-1zM145 184h1v3h-1zM147 168h1v15h-1zM313 168h1v15h-1zM147 184h1v4h-1zM313 184h1v4h-1zM149 170h1v13h-1zM315 170h1v13h-1zM149 184h1v6h-1zM315 184h1v6h-1zM153 173h1v10h-1zM153 184h1v9h-1zM155 175h1v8h-1zM155 184h1v10h-1zM319 184h1v10h-1zM157 176h1v7h-1zM321 176h1v7h-1zM157 184h1v12h-1zM321 184h1v12h-1zM159 178h1v5h-1zM323 178h1v5h-1zM159 184h1v14h-1zM323 184h1v14h-1zM161 179h1v4h-1zM161 184h1v15h-1zM163 181h1v2h-1zM163 184h1v17h-1zM165 184h1v19h-1zM167 184h1v20h-1zM329 184h1v20h-1zM169 186h1v20h-1zM173 189h1v20h-1zM175 191h1v18h-1zM175 210h1v1h-1zM177 193h1v16h-1zM177 210h1v3h-1zM179 194h1v15h-1zM339 194h1v15h-1zM179 210h1v4h-1zM339 210h1v4h-1zM181 196h1v13h-1zM341 196h1v13h-1zM181 210h1v6h-1zM341 210h1v6h-1zM183 198h1v11h-1zM343 198h1v11h-1zM183 210h1v8h-1zM343 210h1v8h-1zM185 199h1v10h-1zM185 210h1v9h-1zM187 201h1v8h-1zM187 210h1v11h-1zM189 203h1v6h-1zM189 210h1v13h-1zM193 206h1v3h-1zM193 210h1v16h-1zM195 208h1v1h-1zM353 208h1v1h-1zM195 210h1v18h-1zM353 210h1v18h-1zM197 210h1v20h-1zM355 210h1v20h-1zM199 211h1v20h-1zM201 213h1v20h-1zM203 215h1v20h-1zM205 217h1v18h-1zM205 236h1v1h-1zM207 218h1v17h-1zM363 218h1v17h-1zM207 236h1v2h-1zM363 236h1v2h-1zM209 220h1v15h-1zM365 220h1v15h-1zM209 236h1v4h-1zM365 236h1v4h-1zM213 224h1v11h-1zM369 224h1v11h-1zM213 236h1v8h-1zM369 236h1v8h-1zM215 226h1v9h-1zM215 236h1v10h-1zM217 227h1v8h-1zM217 236h1v11h-1zM219 229h1v6h-1zM219 236h1v13h-1zM221 231h1v4h-1zM221 236h1v15h-1zM223 233h1v2h-1zM223 236h1v17h-1zM225 236h1v19h-1zM227 236h1v20h-1zM381 236h1v20h-1zM229 238h1v20h-1zM383 238h1v20h-1zM233 106h1v3h-1zM233 242h1v20h-1zM387 242h1v20h-1zM235 105h1v6h-1zM235 244h1v17h-1zM235 262h1v2h-1zM237 105h1v8h-1zM237 246h1v20h-1zM239 105h1v10h-1zM239 247h1v20h-1zM393 247h1v20h-1zM241 104h1v1h-1zM243 104h1v1h-1zM245 104h1v1h-1zM247 104h1v1h-1zM249 104h1v1h-1zM241 106h1v11h-1zM241 249h1v12h-1zM241 262h1v7h-1zM243 106h1v13h-1zM243 251h1v20h-1zM245 106h1v15h-1zM245 253h1v20h-1zM399 253h1v20h-1zM247 106h1v16h-1zM247 255h1v6h-1zM247 262h1v13h-1zM249 106h1v17h-1zM249 257h1v20h-1zM253 125h1v3h-1zM253 262h1v19h-1zM255 110h1v13h-1zM255 125h1v5h-1zM255 263h1v20h-1zM257 112h1v11h-1zM257 125h1v6h-1zM259 125h1v6h-1zM257 264h1v21h-1zM259 114h1v9h-1zM259 266h1v20h-1zM413 266h1v20h-1zM261 116h1v6h-1zM261 124h1v7h-1zM263 124h1v7h-1zM265 124h1v7h-1zM267 124h1v7h-1zM269 124h1v7h-1zM261 132h1v4h-1zM261 268h1v19h-1zM415 268h1v19h-1zM263 118h1v4h-1zM263 270h1v17h-1zM417 270h1v17h-1zM263 288h1v2h-1zM417 288h1v2h-1zM265 120h1v2h-1zM265 272h1v15h-1zM419 272h1v15h-1zM265 288h1v4h-1zM419 288h1v4h-1zM267 132h1v10h-1zM267 274h1v13h-1zM421 274h1v13h-1zM267 288h1v6h-1zM421 288h1v6h-1zM269 276h1v11h-1zM269 288h1v8h-1zM273 128h1v3h-1zM273 280h1v7h-1zM273 288h1v12h-1zM275 282h1v5h-1zM275 288h1v14h-1zM277 132h1v20h-1zM277 284h1v3h-1zM433 284h1v3h-1zM277 288h1v16h-1zM433 288h1v16h-1zM279 134h1v20h-1zM279 286h1v1h-1zM435 286h1v1h-1zM279 288h1v18h-1zM435 288h1v18h-1zM281 288h1v20h-1zM437 288h1v20h-1zM283 290h1v20h-1zM439 290h1v20h-1zM285 140h1v17h-1zM285 158h1v2h-1zM285 292h1v20h-1zM441 292h1v20h-1zM287 294h1v19h-1zM289 158h1v6h-1zM289 296h1v17h-1zM289 314h1v2h-1zM293 300h1v13h-1zM293 314h1v6h-1zM295 158h1v12h-1zM295 302h1v11h-1zM453 302h1v11h-1zM295 314h1v8h-1zM453 314h1v8h-1zM297 152h1v5h-1zM297 304h1v9h-1zM455 304h1v9h-1zM297 314h1v10h-1zM455 314h1v10h-1zM299 306h1v7h-1zM457 306h1v7h-1zM299 314h1v12h-1zM301 156h1v1h-1zM301 158h1v18h-1zM301 308h1v5h-1zM301 314h1v14h-1zM303 158h1v20h-1zM303 310h1v3h-1zM303 314h1v16h-1zM305 312h1v1h-1zM465 312h1v1h-1zM305 314h1v18h-1zM465 314h1v18h-1zM307 314h1v20h-1zM467 314h1v20h-1zM309 316h1v20h-1zM469 316h1v20h-1zM313 320h1v19h-1zM315 322h1v17h-1zM477 322h1v17h-1zM315 340h1v2h-1zM477 340h1v2h-1zM317 172h1v11h-1zM317 184h1v8h-1zM317 324h1v15h-1zM479 324h1v15h-1zM317 340h1v4h-1zM479 340h1v4h-1zM319 174h1v9h-1zM319 326h1v13h-1zM481 326h1v13h-1zM319 340h1v6h-1zM481 340h1v6h-1zM321 328h1v11h-1zM321 340h1v8h-1zM323 330h1v9h-1zM323 340h1v10h-1zM487 340h1v10h-1zM325 180h1v3h-1zM325 184h1v16h-1zM325 332h1v7h-1zM489 332h1v7h-1zM325 340h1v12h-1zM489 340h1v12h-1zM327 182h1v1h-1zM327 184h1v18h-1zM327 334h1v5h-1zM327 340h1v14h-1zM329 336h1v3h-1zM329 340h1v16h-1zM333 188h1v20h-1zM333 340h1v20h-1zM499 340h1v20h-1zM335 190h1v19h-1zM335 342h1v20h-1zM501 342h1v20h-1zM337 192h1v17h-1zM337 210h1v2h-1zM337 344h1v20h-1zM339 346h1v19h-1zM341 348h1v17h-1zM509 348h1v17h-1zM341 366h1v3h-1zM343 350h1v15h-1zM343 366h1v5h-1zM513 366h1v5h-1zM345 200h1v9h-1zM345 210h1v10h-1zM345 352h1v13h-1zM345 366h1v7h-1zM515 366h1v7h-1zM347 202h1v7h-1zM347 210h1v12h-1zM347 354h1v11h-1zM517 354h1v11h-1zM347 366h1v9h-1zM349 204h1v5h-1zM349 210h1v14h-1zM349 357h1v8h-1zM521 357h1v8h-1zM349 366h1v11h-1zM521 366h1v11h-1zM353 361h1v4h-1zM525 361h1v4h-1zM353 366h1v15h-1zM355 363h1v2h-1zM355 366h1v17h-1zM529 366h1v17h-1zM357 212h1v20h-1zM357 366h1v19h-1zM359 214h1v20h-1zM359 367h1v20h-1zM361 216h1v19h-1zM361 369h1v20h-1zM363 371h1v20h-1zM539 371h1v20h-1zM365 373h1v18h-1zM541 373h1v18h-1zM365 392h1v1h-1zM367 222h1v13h-1zM367 236h1v6h-1zM367 375h1v16h-1zM545 375h1v16h-1zM367 392h1v3h-1zM545 392h1v3h-1zM369 377h1v14h-1zM547 377h1v14h-1zM369 392h1v5h-1zM547 392h1v5h-1zM373 228h1v7h-1zM373 236h1v12h-1zM373 381h1v10h-1zM553 381h1v10h-1zM373 392h1v7h-1zM375 392h1v7h-1zM377 392h1v7h-1zM379 392h1v7h-1zM381 392h1v7h-1zM553 392h1v7h-1zM555 392h1v7h-1zM557 392h1v7h-1zM559 392h1v7h-1zM561 392h1v7h-1zM563 392h1v7h-1zM565 392h1v7h-1zM567 392h1v7h-1zM375 230h1v5h-1zM375 236h1v14h-1zM375 383h1v8h-1zM555 383h1v8h-1zM375 401h1v2h-1zM555 401h1v2h-1zM377 232h1v3h-1zM377 236h1v16h-1zM377 385h1v6h-1zM377 401h1v4h-1zM379 234h1v1h-1zM379 236h1v18h-1zM379 386h1v5h-1zM559 386h1v5h-1zM379 401h1v5h-1zM559 401h1v5h-1zM381 388h1v3h-1zM381 401h1v7h-1zM563 401h1v7h-1zM383 390h1v1h-1zM565 390h1v1h-1zM383 392h1v6h-1zM385 392h1v6h-1zM549 392h1v6h-1zM383 400h1v10h-1zM385 240h1v20h-1zM385 400h1v12h-1zM387 394h1v4h-1zM387 400h1v14h-1zM389 243h1v20h-1zM389 396h1v2h-1zM389 400h1v16h-1zM393 400h1v17h-1zM579 400h1v17h-1zM393 418h1v1h-1zM395 418h1v1h-1zM397 418h1v1h-1zM399 418h1v1h-1zM401 418h1v1h-1zM395 249h1v20h-1zM395 402h1v15h-1zM397 251h1v10h-1zM397 262h1v9h-1zM397 404h1v13h-1zM585 404h1v13h-1zM399 406h1v11h-1zM401 255h1v20h-1zM401 408h1v9h-1zM403 257h1v4h-1zM403 262h1v15h-1zM403 410h1v9h-1zM405 259h1v20h-1zM405 412h1v7h-1zM407 261h1v20h-1zM407 414h1v4h-1zM599 414h1v4h-1zM409 262h1v20h-1zM409 415h1v2h-1zM601 415h1v2h-1zM423 275h1v12h-1zM423 288h1v7h-1zM425 277h1v10h-1zM425 288h1v9h-1zM427 279h1v8h-1zM427 288h1v11h-1zM429 281h1v6h-1zM429 288h1v13h-1zM443 293h1v20h-1zM445 295h1v18h-1zM445 314h1v1h-1zM447 297h1v16h-1zM447 314h1v3h-1zM449 299h1v14h-1zM449 314h1v5h-1zM457 314h1v11h-1zM459 307h1v6h-1zM459 314h1v13h-1zM461 309h1v4h-1zM461 314h1v15h-1zM463 311h1v2h-1zM463 314h1v17h-1zM473 319h1v20h-1zM475 321h1v18h-1zM475 340h1v1h-1zM483 327h1v12h-1zM483 340h1v7h-1zM485 329h1v10h-1zM485 340h1v9h-1zM487 331h1v8h-1zM493 335h1v4h-1zM493 340h1v15h-1zM495 337h1v2h-1zM495 340h1v17h-1zM497 340h1v19h-1zM503 343h1v20h-1zM505 345h1v20h-1zM507 347h1v18h-1zM509 366h1v2h-1zM513 351h1v14h-1zM515 353h1v12h-1zM517 366h1v8h-1zM519 356h1v9h-1zM519 366h1v10h-1zM523 359h1v6h-1zM523 366h1v13h-1zM525 366h1v14h-1zM527 362h1v3h-1zM527 366h1v16h-1zM529 364h1v1h-1zM533 367h1v19h-1zM535 368h1v20h-1zM537 370h1v19h-1zM543 374h1v17h-1zM543 392h1v2h-1zM549 378h1v13h-1zM557 384h1v7h-1zM557 401h1v3h-1zM561 387h1v4h-1zM561 401h1v6h-1zM563 389h1v2h-1zM565 401h1v9h-1zM567 401h1v10h-1zM569 393h1v6h-1zM569 401h1v12h-1zM573 396h1v3h-1zM573 401h1v15h-1zM575 397h1v2h-1zM575 401h1v16h-1zM577 401h1v16h-1zM581 401h1v16h-1zM577 398h1v1h-1zM583 403h1v14h-1zM587 405h1v12h-1zM589 407h1v10h-1zM593 410h1v7h-1zM595 411h1v7h-1zM597 412h1v6h-1zM603 416h1v1h-1z"/>
<path fill="#ffffff" d="M46 11h1v3h-1zM54 11h1v3h-1zM105 11h1v3h-1zM113 11h1v3h-1zM164 11h1v3h-1zM172 11h1v3h-1zM223 11h1v3h-1zM231 11h1v3h-1zM282 11h1v3h-1zM290 11h1v3h-1zM340 11h1v3h-1zM348 11h1v3h-1zM399 11h1v3h-1zM407 11h1v3h-1zM458 11h1v3h-1zM466 11h1v3h-1zM516 11h1v3h-1zM524 11h1v3h-1zM575 11h1v3h-1zM583 11h1v3h-1zM635 11h1v3h-1zM643 11h1v3h-1zM694 11h1v3h-1zM702 11h1v3h-1zM46 508h1v3h-1zM54 508h1v3h-1zM105 508h1v3h-1zM113 508h1v3h-1zM164 508h1v3h-1zM172 508h1v3h-1zM223 508h1v3h-1zM231 508h1v3h-1zM282 508h1v3h-1zM290 508h1v3h-1zM340 508h1v3h-1zM348 508h1v3h-1zM399 508h1v3h-1zM407 508h1v3h-1zM458 508h1v3h-1zM466 508h1v3h-1zM516 508h1v3h-1zM524 508h1v3h-1zM575 508h1v3h-1zM583 508h1v3h-1zM635 508h1v3h-1zM643 508h1v3h-1zM694 508h1v3h-1zM702 508h1v3h-1zM47 9h2v7h-2zM52 9h2v7h-2zM106 9h2v7h-2zM111 9h2v7h-2zM165 9h2v7h-2zM170 9h2v7h-2zM224 9h2v7h-2zM229 9h2v7h-2zM283 9h2v7h-2zM288 9h2v7h-2zM341 9h2v7h-2zM346 9h2v7h-2zM400 9h2v7h-2zM405 9h2v7h-2zM459 9h2v7h-2zM464 9h2v7h-2zM517 9h2v7h-2zM522 9h2v7h-2zM576 9h2v7h-2zM581 9h2v7h-2zM636 9h2v7h-2zM641 9h2v7h-2zM695 9h2v7h-2zM700 9h2v7h-2zM47 506h2v7h-2zM52 506h2v7h-2zM106 506h2v7h-2zM111 506h2v7h-2zM165 506h2v7h-2zM170 506h2v7h-2zM224 506h2v7h-2zM229 506h2v7h-2zM283 506h2v7h-2zM288 506h2v7h-2zM341 506h2v7h-2zM346 506h2v7h-2zM400 506h2v7h-2zM405 506h2v7h-2zM459 506h2v7h-2zM464 506h2v7h-2zM517 506h2v7h-2zM522 506h2v7h-2zM576 506h2v7h-2zM581 506h2v7h-2zM636 506h2v7h-2zM641 506h2v7h-2zM695 506h2v7h-2zM700 506h2v7h-2zM49 8h3v9h-3zM108 8h3v9h-3zM167 8h3v9h-3zM226 8h3v9h-3zM285 8h3v9h-3zM343 8h3v9h-3zM402 8h3v9h-3zM461 8h3v9h-3zM519 8h3v9h-3zM578 8h3v9h-3zM638 8h3v9h-3zM697 8h3v9h-3zM49 505h3v9h-3zM108 505h3v9h-3zM167 505h3v9h-3zM226 505h3v9h-3zM285 505h3v9h-3zM343 505h3v9h-3zM402 505h3v9h-3zM461 505h3v9h-3zM519 505h3v9h-3zM578 505h3v9h-3zM638 505h3v9h-3zM697 505h3v9h-3z"/>
<path fill="#ff8080" d="M67 107h1v2h-1zM69 107h1v3h-1zM73 107h1v6h-1zM75 107h1v7h-1zM77 106h1v10h-1zM217 106h1v10h-1zM79 106h1v11h-1zM81 106h1v13h-1zM221 106h1v13h-1zM83 106h1v14h-1zM85 106h1v15h-1zM223 106h1v15h-1zM87 106h1v17h-1zM225 106h1v17h-1zM227 106h1v17h-1zM229 106h1v17h-1zM89 106h1v18h-1zM93 106h1v18h-1zM93 126h1v1h-1zM95 108h1v16h-1zM95 126h1v3h-1zM97 109h1v15h-1zM97 126h1v4h-1zM99 111h1v13h-1zM99 126h1v5h-1zM119 126h1v5h-1zM101 112h1v11h-1zM101 125h1v6h-1zM103 125h1v6h-1zM105 125h1v6h-1zM107 125h1v6h-1zM109 125h1v6h-1zM113 125h1v6h-1zM115 125h1v6h-1zM117 125h1v6h-1zM233 125h1v6h-1zM235 125h1v6h-1zM237 125h1v6h-1zM239 125h1v6h-1zM241 125h1v6h-1zM243 125h1v6h-1zM245 125h1v6h-1zM247 125h1v6h-1zM249 125h1v6h-1zM101 132h1v1h-1zM103 114h1v9h-1zM103 132h1v3h-1zM105 115h1v8h-1zM239 115h1v8h-1zM105 132h1v4h-1zM239 132h1v4h-1zM107 117h1v6h-1zM241 117h1v6h-1zM107 132h1v6h-1zM241 132h1v6h-1zM109 118h1v5h-1zM109 132h1v7h-1zM113 121h1v2h-1zM245 121h1v2h-1zM113 132h1v10h-1zM245 132h1v10h-1zM115 132h1v12h-1zM247 132h1v12h-1zM117 132h1v13h-1zM119 132h1v15h-1zM121 127h1v4h-1zM121 132h1v16h-1zM123 129h1v2h-1zM123 132h1v18h-1zM253 132h1v18h-1zM125 130h1v1h-1zM255 130h1v1h-1zM125 132h1v19h-1zM255 132h1v19h-1zM127 132h1v21h-1zM257 132h1v21h-1zM129 133h1v21h-1zM133 136h1v21h-1zM261 136h1v21h-1zM135 138h1v19h-1zM263 138h1v19h-1zM135 158h1v1h-1zM263 158h1v1h-1zM137 139h1v18h-1zM137 158h1v2h-1zM139 141h1v16h-1zM139 158h1v4h-1zM141 143h1v14h-1zM141 158h1v6h-1zM143 144h1v13h-1zM269 144h1v13h-1zM143 158h1v7h-1zM269 158h1v7h-1zM145 146h1v11h-1zM145 158h1v9h-1zM147 147h1v10h-1zM147 158h1v10h-1zM149 149h1v8h-1zM149 158h1v12h-1zM153 152h1v5h-1zM277 152h1v5h-1zM153 158h1v15h-1zM277 158h1v15h-1zM155 154h1v3h-1zM279 154h1v3h-1zM155 158h1v17h-1zM279 158h1v17h-1zM157 155h1v2h-1zM157 158h1v18h-1zM159 158h1v20h-1zM161 158h1v21h-1zM283 158h1v21h-1zM163 160h1v21h-1zM285 160h1v21h-1zM165 162h1v21h-1zM287 162h1v21h-1zM167 163h1v20h-1zM169 165h1v18h-1zM169 184h1v2h-1zM173 168h1v15h-1zM293 168h1v15h-1zM173 184h1v5h-1zM293 184h1v5h-1zM175 170h1v13h-1zM295 170h1v13h-1zM175 184h1v7h-1zM295 184h1v7h-1zM177 172h1v11h-1zM297 172h1v11h-1zM177 184h1v9h-1zM297 184h1v9h-1zM179 173h1v10h-1zM179 184h1v10h-1zM181 175h1v8h-1zM181 184h1v12h-1zM183 177h1v6h-1zM183 184h1v14h-1zM185 178h1v5h-1zM303 178h1v5h-1zM185 184h1v15h-1zM303 184h1v15h-1zM187 180h1v3h-1zM305 180h1v3h-1zM187 184h1v17h-1zM305 184h1v17h-1zM189 182h1v1h-1zM307 182h1v1h-1zM189 184h1v19h-1zM307 184h1v19h-1zM193 185h1v21h-1zM195 187h1v21h-1zM197 189h1v20h-1zM199 190h1v19h-1zM315 190h1v19h-1zM199 210h1v1h-1zM315 210h1v1h-1zM201 192h1v17h-1zM317 192h1v17h-1zM201 210h1v3h-1zM317 210h1v3h-1zM203 194h1v15h-1zM319 194h1v15h-1zM203 210h1v5h-1zM319 210h1v5h-1zM205 195h1v14h-1zM205 210h1v7h-1zM321 210h1v7h-1zM207 106h1v1h-1zM207 197h1v12h-1zM207 210h1v8h-1zM209 106h1v2h-1zM209 199h1v10h-1zM209 210h1v10h-1zM213 105h1v7h-1zM213 203h1v6h-1zM213 210h1v14h-1zM215 105h1v9h-1zM215 204h1v5h-1zM329 204h1v5h-1zM215 210h1v16h-1zM217 206h1v3h-1zM217 210h1v17h-1zM219 106h1v12h-1zM219 208h1v1h-1zM333 208h1v1h-1zM219 210h1v19h-1zM333 210h1v19h-1zM221 210h1v21h-1zM335 210h1v21h-1zM223 212h1v21h-1zM337 212h1v21h-1zM225 213h1v22h-1zM227 215h1v20h-1zM229 125h1v2h-1zM229 217h1v18h-1zM229 236h1v2h-1zM233 109h1v14h-1zM233 221h1v14h-1zM233 236h1v6h-1zM235 111h1v12h-1zM235 222h1v13h-1zM347 222h1v13h-1zM235 236h1v8h-1zM237 113h1v10h-1zM237 132h1v2h-1zM237 224h1v11h-1zM349 224h1v11h-1zM237 236h1v10h-1zM239 226h1v9h-1zM239 236h1v11h-1zM241 228h1v7h-1zM353 228h1v7h-1zM241 236h1v13h-1zM353 236h1v13h-1zM243 119h1v4h-1zM243 132h1v8h-1zM243 230h1v5h-1zM355 230h1v5h-1zM243 236h1v15h-1zM355 236h1v15h-1zM245 232h1v3h-1zM357 232h1v3h-1zM245 236h1v17h-1zM357 236h1v17h-1zM247 122h1v1h-1zM247 234h1v1h-1zM359 234h1v1h-1zM247 236h1v19h-1zM359 236h1v19h-1zM249 132h1v14h-1zM249 236h1v21h-1zM361 236h1v21h-1zM253 128h1v3h-1zM253 239h1v22h-1zM255 241h1v22h-1zM257 243h1v21h-1zM259 134h1v21h-1zM259 245h1v16h-1zM259 262h1v4h-1zM261 247h1v21h-1zM263 249h1v21h-1zM265 140h1v17h-1zM265 158h1v3h-1zM265 251h1v10h-1zM265 262h1v10h-1zM267 142h1v15h-1zM267 158h1v5h-1zM267 253h1v21h-1zM269 255h1v21h-1zM273 148h1v9h-1zM273 158h1v11h-1zM273 259h1v21h-1zM275 150h1v7h-1zM275 158h1v13h-1zM275 261h1v21h-1zM277 263h1v21h-1zM279 265h1v21h-1zM281 156h1v1h-1zM281 158h1v19h-1zM281 267h1v20h-1zM393 267h1v20h-1zM283 269h1v18h-1zM395 269h1v18h-1zM283 288h1v2h-1zM395 288h1v2h-1zM285 270h1v17h-1zM285 288h1v4h-1zM397 288h1v4h-1zM287 272h1v15h-1zM287 288h1v6h-1zM399 288h1v6h-1zM289 164h1v19h-1zM289 184h1v1h-1zM289 274h1v13h-1zM289 288h1v8h-1zM401 288h1v8h-1zM293 278h1v9h-1zM293 288h1v12h-1zM405 288h1v12h-1zM295 280h1v7h-1zM295 288h1v14h-1zM407 288h1v14h-1zM297 282h1v5h-1zM409 282h1v5h-1zM297 288h1v16h-1zM409 288h1v16h-1zM299 174h1v9h-1zM299 184h1v11h-1zM299 284h1v3h-1zM299 288h1v18h-1zM301 176h1v7h-1zM301 184h1v13h-1zM301 286h1v1h-1zM413 286h1v1h-1zM301 288h1v20h-1zM303 289h1v21h-1zM305 291h1v21h-1zM307 293h1v20h-1zM309 184h1v21h-1zM309 295h1v18h-1zM423 295h1v18h-1zM309 314h1v2h-1zM423 314h1v2h-1zM313 188h1v21h-1zM313 299h1v14h-1zM427 299h1v14h-1zM313 314h1v6h-1zM427 314h1v6h-1zM315 301h1v12h-1zM429 301h1v12h-1zM315 314h1v8h-1zM429 314h1v8h-1zM317 303h1v10h-1zM317 314h1v10h-1zM319 305h1v8h-1zM319 314h1v12h-1zM321 196h1v13h-1zM321 307h1v6h-1zM321 314h1v14h-1zM323 198h1v11h-1zM323 210h1v9h-1zM323 309h1v4h-1zM323 314h1v16h-1zM325 200h1v9h-1zM325 210h1v11h-1zM325 311h1v2h-1zM325 314h1v18h-1zM441 314h1v18h-1zM327 202h1v7h-1zM327 210h1v13h-1zM327 314h1v20h-1zM443 314h1v20h-1zM329 210h1v15h-1zM329 315h1v21h-1zM445 315h1v21h-1zM333 319h1v20h-1zM449 319h1v20h-1zM335 321h1v18h-1zM335 340h1v2h-1zM337 323h1v16h-1zM337 340h1v4h-1zM339 214h1v21h-1zM339 325h1v14h-1zM457 325h1v14h-1zM339 340h1v6h-1zM457 340h1v6h-1zM341 216h1v19h-1zM341 236h1v1h-1zM341 327h1v12h-1zM459 327h1v12h-1zM341 340h1v8h-1zM459 340h1v8h-1zM343 218h1v17h-1zM343 236h1v3h-1zM343 329h1v10h-1zM461 329h1v10h-1zM343 340h1v10h-1zM461 340h1v10h-1zM345 220h1v15h-1zM345 236h1v5h-1zM345 331h1v8h-1zM463 331h1v8h-1zM345 340h1v12h-1zM347 236h1v7h-1zM347 333h1v6h-1zM347 340h1v14h-1zM349 236h1v9h-1zM349 335h1v4h-1zM349 340h1v17h-1zM469 340h1v17h-1zM353 340h1v21h-1zM355 341h1v22h-1zM357 343h1v22h-1zM359 345h1v20h-1zM359 366h1v1h-1zM361 347h1v18h-1zM483 347h1v18h-1zM361 366h1v3h-1zM363 238h1v21h-1zM363 349h1v16h-1zM485 349h1v16h-1zM363 366h1v5h-1zM487 366h1v5h-1zM365 240h1v21h-1zM365 351h1v14h-1zM365 366h1v7h-1zM489 366h1v7h-1zM367 242h1v19h-1zM367 262h1v1h-1zM367 353h1v12h-1zM367 366h1v9h-1zM369 244h1v21h-1zM369 355h1v10h-1zM493 355h1v10h-1zM369 366h1v11h-1zM373 248h1v13h-1zM373 262h1v7h-1zM373 359h1v6h-1zM497 359h1v6h-1zM373 366h1v15h-1zM499 366h1v15h-1zM375 250h1v21h-1zM375 361h1v4h-1zM375 366h1v17h-1zM501 366h1v17h-1zM377 252h1v21h-1zM377 363h1v2h-1zM503 363h1v2h-1zM377 366h1v19h-1zM379 254h1v7h-1zM379 262h1v13h-1zM379 366h1v20h-1zM505 366h1v20h-1zM381 256h1v21h-1zM381 367h1v21h-1zM383 258h1v21h-1zM383 369h1v21h-1zM385 260h1v1h-1zM385 262h1v19h-1zM385 371h1v20h-1zM513 371h1v20h-1zM387 262h1v21h-1zM387 373h1v18h-1zM515 373h1v18h-1zM387 392h1v2h-1zM515 392h1v2h-1zM389 263h1v22h-1zM389 375h1v16h-1zM389 392h1v4h-1zM393 379h1v12h-1zM523 379h1v12h-1zM393 392h1v6h-1zM395 392h1v6h-1zM397 392h1v6h-1zM399 392h1v6h-1zM401 392h1v6h-1zM403 392h1v6h-1zM405 392h1v6h-1zM407 392h1v6h-1zM521 392h1v6h-1zM395 381h1v10h-1zM395 400h1v2h-1zM397 271h1v16h-1zM397 383h1v8h-1zM529 383h1v8h-1zM397 400h1v4h-1zM399 273h1v14h-1zM399 385h1v6h-1zM399 400h1v6h-1zM401 275h1v12h-1zM401 387h1v4h-1zM401 400h1v8h-1zM403 277h1v10h-1zM403 288h1v10h-1zM403 389h1v2h-1zM537 389h1v2h-1zM403 400h1v10h-1zM405 279h1v8h-1zM405 400h1v12h-1zM407 281h1v6h-1zM407 400h1v14h-1zM409 394h1v4h-1zM409 400h1v15h-1zM413 288h1v19h-1zM413 400h1v17h-1zM415 400h1v17h-1zM415 288h1v21h-1zM417 290h1v21h-1zM417 402h1v15h-1zM419 292h1v21h-1zM419 404h1v13h-1zM557 404h1v13h-1zM421 294h1v19h-1zM421 314h1v1h-1zM421 406h1v11h-1zM559 406h1v11h-1zM423 407h1v10h-1zM561 407h1v10h-1zM425 297h1v16h-1zM425 314h1v4h-1zM425 409h1v8h-1zM427 411h1v7h-1zM429 413h1v5h-1zM433 304h1v9h-1zM433 314h1v11h-1zM435 306h1v7h-1zM435 314h1v13h-1zM437 308h1v5h-1zM437 314h1v15h-1zM439 310h1v3h-1zM439 314h1v17h-1zM441 312h1v1h-1zM447 317h1v21h-1zM453 322h1v17h-1zM453 340h1v3h-1zM455 324h1v15h-1zM455 340h1v5h-1zM463 340h1v11h-1zM465 332h1v7h-1zM465 340h1v13h-1zM467 334h1v5h-1zM467 340h1v15h-1zM469 336h1v3h-1zM473 340h1v20h-1zM475 341h1v21h-1zM477 342h1v21h-1zM479 344h1v21h-1zM481 346h1v19h-1zM483 366h1v2h-1zM485 366h1v4h-1zM487 350h1v15h-1zM489 352h1v13h-1zM493 366h1v10h-1zM495 357h1v8h-1zM495 366h1v12h-1zM497 366h1v13h-1zM499 360h1v5h-1zM501 362h1v3h-1zM503 366h1v18h-1zM507 366h1v21h-1zM509 368h1v21h-1zM517 374h1v17h-1zM517 392h1v3h-1zM519 376h1v15h-1zM519 392h1v5h-1zM521 377h1v14h-1zM523 392h1v7h-1zM525 392h1v7h-1zM527 392h1v7h-1zM529 392h1v7h-1zM533 392h1v7h-1zM535 392h1v7h-1zM537 392h1v7h-1zM539 392h1v7h-1zM541 392h1v7h-1zM525 380h1v11h-1zM527 382h1v9h-1zM527 401h1v2h-1zM529 401h1v3h-1zM533 386h1v5h-1zM533 401h1v6h-1zM535 388h1v3h-1zM535 401h1v8h-1zM537 401h1v9h-1zM539 401h1v11h-1zM541 401h1v12h-1zM543 394h1v5h-1zM543 401h1v14h-1zM545 395h1v4h-1zM545 401h1v15h-1zM547 397h1v2h-1zM547 401h1v17h-1zM549 398h1v1h-1zM549 401h1v18h-1zM553 401h1v16h-1zM553 418h1v1h-1zM555 418h1v1h-1zM557 418h1v1h-1zM559 418h1v1h-1zM561 418h1v1h-1zM563 418h1v1h-1zM565 418h1v1h-1zM567 418h1v1h-1zM569 418h1v1h-1zM555 403h1v14h-1zM563 408h1v9h-1zM565 410h1v7h-1zM567 411h1v6h-1zM569 413h1v4h-1zM573 416h1v3h-1zM575 417h1v2h-1z"/>
<path fill="#ff0000" d="M95 106h1v2h-1zM179 106h1v2h-1zM97 106h1v3h-1zM99 106h1v5h-1zM183 106h1v5h-1zM101 106h1v6h-1zM103 106h1v8h-1zM105 106h1v9h-1zM107 106h1v11h-1zM109 106h1v12h-1zM113 106h1v15h-1zM115 105h1v18h-1zM117 105h1v18h-1zM119 105h1v18h-1zM119 125h1v1h-1zM199 125h1v1h-1zM121 106h1v17h-1zM123 106h1v17h-1zM125 106h1v17h-1zM197 106h1v17h-1zM199 106h1v17h-1zM201 106h1v17h-1zM203 106h1v17h-1zM205 106h1v17h-1zM121 125h1v2h-1zM201 125h1v2h-1zM123 125h1v4h-1zM203 125h1v4h-1zM125 125h1v5h-1zM127 107h1v16h-1zM207 107h1v16h-1zM127 125h1v6h-1zM129 125h1v6h-1zM133 125h1v6h-1zM205 125h1v6h-1zM207 125h1v6h-1zM209 125h1v6h-1zM213 125h1v6h-1zM215 125h1v6h-1zM217 125h1v6h-1zM219 125h1v6h-1zM221 125h1v6h-1zM223 125h1v6h-1zM225 125h1v6h-1zM227 125h1v6h-1zM129 108h1v15h-1zM209 108h1v15h-1zM129 132h1v1h-1zM207 132h1v1h-1zM133 111h1v12h-1zM133 132h1v4h-1zM135 113h1v9h-1zM135 124h1v7h-1zM137 124h1v7h-1zM139 124h1v7h-1zM141 124h1v7h-1zM143 124h1v7h-1zM145 124h1v7h-1zM147 124h1v7h-1zM149 124h1v7h-1zM135 132h1v6h-1zM213 132h1v6h-1zM137 114h1v8h-1zM137 132h1v7h-1zM139 116h1v6h-1zM139 132h1v9h-1zM141 117h1v5h-1zM141 132h1v11h-1zM143 119h1v3h-1zM143 132h1v12h-1zM219 132h1v12h-1zM145 121h1v1h-1zM145 132h1v14h-1zM221 132h1v14h-1zM147 132h1v15h-1zM149 132h1v17h-1zM225 132h1v17h-1zM153 106h1v1h-1zM153 127h1v4h-1zM229 127h1v4h-1zM153 132h1v20h-1zM155 108h1v1h-1zM155 128h1v3h-1zM155 132h1v22h-1zM157 110h1v1h-1zM157 130h1v1h-1zM157 132h1v23h-1zM159 111h1v1h-1zM159 132h1v25h-1zM233 132h1v25h-1zM235 132h1v25h-1zM161 113h1v1h-1zM161 133h1v24h-1zM163 114h1v1h-1zM163 135h1v22h-1zM163 158h1v2h-1zM165 116h1v1h-1zM165 136h1v21h-1zM239 136h1v21h-1zM165 158h1v4h-1zM167 118h1v1h-1zM167 138h1v19h-1zM241 138h1v19h-1zM167 158h1v5h-1zM239 158h1v5h-1zM169 119h1v1h-1zM169 139h1v18h-1zM169 158h1v7h-1zM241 158h1v7h-1zM173 143h1v14h-1zM173 158h1v10h-1zM245 158h1v10h-1zM175 144h1v13h-1zM247 144h1v13h-1zM175 158h1v12h-1zM247 158h1v12h-1zM177 126h1v1h-1zM177 146h1v11h-1zM249 146h1v11h-1zM177 158h1v14h-1zM249 158h1v14h-1zM179 128h1v1h-1zM179 148h1v9h-1zM179 158h1v15h-1zM181 106h1v4h-1zM181 129h1v1h-1zM181 149h1v8h-1zM181 158h1v17h-1zM183 151h1v6h-1zM255 151h1v6h-1zM183 158h1v19h-1zM185 106h1v7h-1zM185 133h1v1h-1zM185 153h1v4h-1zM257 153h1v4h-1zM185 158h1v20h-1zM255 158h1v20h-1zM187 105h1v10h-1zM187 135h1v1h-1zM187 154h1v3h-1zM187 158h1v22h-1zM257 158h1v22h-1zM189 105h1v12h-1zM189 136h1v1h-1zM189 156h1v1h-1zM189 158h1v24h-1zM259 158h1v24h-1zM193 106h1v14h-1zM193 140h1v1h-1zM193 159h1v24h-1zM263 159h1v24h-1zM193 184h1v1h-1zM195 106h1v16h-1zM195 141h1v1h-1zM195 161h1v22h-1zM265 161h1v22h-1zM195 184h1v3h-1zM197 143h1v1h-1zM197 163h1v20h-1zM267 163h1v20h-1zM197 184h1v5h-1zM199 145h1v1h-1zM199 164h1v19h-1zM199 184h1v6h-1zM267 184h1v6h-1zM201 147h1v1h-1zM201 166h1v17h-1zM201 184h1v8h-1zM269 184h1v8h-1zM203 148h1v1h-1zM203 168h1v15h-1zM203 184h1v10h-1zM205 150h1v1h-1zM205 169h1v14h-1zM273 169h1v14h-1zM205 184h1v11h-1zM207 152h1v1h-1zM207 171h1v12h-1zM275 171h1v12h-1zM207 184h1v13h-1zM209 132h1v3h-1zM209 154h1v1h-1zM209 173h1v10h-1zM277 173h1v10h-1zM209 184h1v15h-1zM213 112h1v11h-1zM213 176h1v7h-1zM213 184h1v19h-1zM215 114h1v9h-1zM215 132h1v8h-1zM215 159h1v1h-1zM215 178h1v5h-1zM215 184h1v20h-1zM281 184h1v20h-1zM217 116h1v7h-1zM217 132h1v10h-1zM217 161h1v1h-1zM217 180h1v3h-1zM217 184h1v22h-1zM283 184h1v22h-1zM219 118h1v5h-1zM219 163h1v1h-1zM219 182h1v1h-1zM219 184h1v24h-1zM285 184h1v24h-1zM221 119h1v4h-1zM221 165h1v1h-1zM221 184h1v25h-1zM287 184h1v25h-1zM223 121h1v2h-1zM223 132h1v16h-1zM223 166h1v1h-1zM223 185h1v24h-1zM289 185h1v24h-1zM223 210h1v2h-1zM289 210h1v2h-1zM225 168h1v1h-1zM225 187h1v22h-1zM225 210h1v3h-1zM227 132h1v19h-1zM227 170h1v1h-1zM227 189h1v20h-1zM293 189h1v20h-1zM227 210h1v5h-1zM229 132h1v21h-1zM229 172h1v1h-1zM229 191h1v18h-1zM295 191h1v18h-1zM229 210h1v7h-1zM233 176h1v1h-1zM233 194h1v15h-1zM233 210h1v11h-1zM235 158h1v1h-1zM235 177h1v1h-1zM235 196h1v13h-1zM235 210h1v12h-1zM299 210h1v12h-1zM237 134h1v23h-1zM237 158h1v3h-1zM237 179h1v1h-1zM237 198h1v11h-1zM237 210h1v14h-1zM301 210h1v14h-1zM239 181h1v1h-1zM239 200h1v9h-1zM239 210h1v16h-1zM303 210h1v16h-1zM241 202h1v7h-1zM241 210h1v18h-1zM305 210h1v18h-1zM243 140h1v17h-1zM243 158h1v9h-1zM243 185h1v1h-1zM243 203h1v6h-1zM307 203h1v6h-1zM243 210h1v20h-1zM307 210h1v20h-1zM245 142h1v15h-1zM245 187h1v1h-1zM245 205h1v4h-1zM309 205h1v4h-1zM245 210h1v22h-1zM309 210h1v22h-1zM247 189h1v1h-1zM247 207h1v2h-1zM247 210h1v24h-1zM249 191h1v1h-1zM249 210h1v25h-1zM313 210h1v25h-1zM253 150h1v7h-1zM253 158h1v18h-1zM253 194h1v1h-1zM253 213h1v22h-1zM317 213h1v22h-1zM253 236h1v3h-1zM255 196h1v1h-1zM255 215h1v20h-1zM319 215h1v20h-1zM255 236h1v5h-1zM257 198h1v1h-1zM257 216h1v19h-1zM257 236h1v7h-1zM259 155h1v2h-1zM259 200h1v1h-1zM259 218h1v17h-1zM259 236h1v9h-1zM261 158h1v25h-1zM261 202h1v1h-1zM261 220h1v15h-1zM261 236h1v11h-1zM263 184h1v2h-1zM263 204h1v1h-1zM263 222h1v13h-1zM263 236h1v13h-1zM265 184h1v4h-1zM265 206h1v1h-1zM265 224h1v11h-1zM265 236h1v15h-1zM267 208h1v1h-1zM267 226h1v9h-1zM267 236h1v17h-1zM269 165h1v18h-1zM269 210h1v1h-1zM269 228h1v7h-1zM269 236h1v19h-1zM273 184h1v12h-1zM273 214h1v1h-1zM273 232h1v3h-1zM273 236h1v23h-1zM275 184h1v14h-1zM275 216h1v1h-1zM275 234h1v1h-1zM293 234h1v1h-1zM275 236h1v25h-1zM277 236h1v25h-1zM277 184h1v16h-1zM277 218h1v1h-1zM277 262h1v1h-1zM321 262h1v1h-1zM279 175h1v8h-1zM279 184h1v18h-1zM279 220h1v1h-1zM279 238h1v27h-1zM281 177h1v6h-1zM281 222h1v1h-1zM281 240h1v27h-1zM283 179h1v4h-1zM283 224h1v1h-1zM283 242h1v19h-1zM283 262h1v7h-1zM285 181h1v2h-1zM285 226h1v1h-1zM285 244h1v26h-1zM287 228h1v1h-1zM287 246h1v26h-1zM289 230h1v1h-1zM289 247h1v14h-1zM289 262h1v12h-1zM293 210h1v6h-1zM293 251h1v27h-1zM295 210h1v8h-1zM295 236h1v1h-1zM295 253h1v8h-1zM295 262h1v18h-1zM297 193h1v16h-1zM297 210h1v10h-1zM297 238h1v1h-1zM297 255h1v27h-1zM359 255h1v27h-1zM299 195h1v14h-1zM299 240h1v1h-1zM299 257h1v27h-1zM301 197h1v12h-1zM301 242h1v1h-1zM301 259h1v2h-1zM301 262h1v24h-1zM303 199h1v10h-1zM303 244h1v1h-1zM303 261h1v26h-1zM365 261h1v26h-1zM303 288h1v1h-1zM347 288h1v1h-1zM305 201h1v8h-1zM305 246h1v1h-1zM305 264h1v23h-1zM305 288h1v3h-1zM307 248h1v1h-1zM307 266h1v21h-1zM307 288h1v5h-1zM309 250h1v1h-1zM309 268h1v19h-1zM309 288h1v7h-1zM313 254h1v1h-1zM313 272h1v15h-1zM313 288h1v11h-1zM377 288h1v11h-1zM315 211h1v24h-1zM315 236h1v2h-1zM315 256h1v1h-1zM315 274h1v13h-1zM315 288h1v13h-1zM379 288h1v13h-1zM317 236h1v4h-1zM317 258h1v1h-1zM317 276h1v11h-1zM317 288h1v15h-1zM381 288h1v15h-1zM319 236h1v6h-1zM319 260h1v1h-1zM319 278h1v9h-1zM319 288h1v17h-1zM383 288h1v17h-1zM321 217h1v18h-1zM321 236h1v8h-1zM321 280h1v7h-1zM321 288h1v19h-1zM385 288h1v19h-1zM323 219h1v16h-1zM323 236h1v10h-1zM323 264h1v1h-1zM323 282h1v5h-1zM323 288h1v21h-1zM387 288h1v21h-1zM325 221h1v14h-1zM325 236h1v12h-1zM325 266h1v1h-1zM325 284h1v3h-1zM325 288h1v23h-1zM389 288h1v23h-1zM327 223h1v12h-1zM327 236h1v14h-1zM327 268h1v1h-1zM327 286h1v1h-1zM345 286h1v1h-1zM327 288h1v25h-1zM329 288h1v25h-1zM393 288h1v25h-1zM329 225h1v10h-1zM329 236h1v16h-1zM329 270h1v1h-1zM329 314h1v1h-1zM373 314h1v1h-1zM393 314h1v1h-1zM333 229h1v6h-1zM333 236h1v20h-1zM333 274h1v1h-1zM333 292h1v21h-1zM397 292h1v21h-1zM333 314h1v5h-1zM335 231h1v4h-1zM335 236h1v22h-1zM335 276h1v1h-1zM335 294h1v19h-1zM399 294h1v19h-1zM335 314h1v7h-1zM337 233h1v2h-1zM337 236h1v24h-1zM337 278h1v1h-1zM337 296h1v17h-1zM401 296h1v17h-1zM337 314h1v9h-1zM339 236h1v26h-1zM339 280h1v1h-1zM339 298h1v15h-1zM403 298h1v15h-1zM339 314h1v11h-1zM341 237h1v27h-1zM341 282h1v1h-1zM341 300h1v13h-1zM405 300h1v13h-1zM341 314h1v13h-1zM343 239h1v22h-1zM343 262h1v4h-1zM343 284h1v1h-1zM343 302h1v11h-1zM407 302h1v11h-1zM343 314h1v15h-1zM409 314h1v15h-1zM345 241h1v27h-1zM345 304h1v9h-1zM409 304h1v9h-1zM345 314h1v17h-1zM347 243h1v27h-1zM347 306h1v7h-1zM347 314h1v19h-1zM413 314h1v19h-1zM349 245h1v16h-1zM349 262h1v10h-1zM349 290h1v1h-1zM349 308h1v5h-1zM349 314h1v21h-1zM415 314h1v21h-1zM353 249h1v27h-1zM353 294h1v1h-1zM353 314h1v25h-1zM355 251h1v10h-1zM355 262h1v16h-1zM355 296h1v1h-1zM355 315h1v24h-1zM421 315h1v24h-1zM355 340h1v1h-1zM357 253h1v27h-1zM357 298h1v1h-1zM357 317h1v22h-1zM357 340h1v3h-1zM359 300h1v1h-1zM359 319h1v20h-1zM359 340h1v5h-1zM361 257h1v4h-1zM361 262h1v22h-1zM361 302h1v1h-1zM361 321h1v18h-1zM361 340h1v7h-1zM429 340h1v7h-1zM363 259h1v27h-1zM363 304h1v1h-1zM363 323h1v16h-1zM363 340h1v9h-1zM365 306h1v1h-1zM365 325h1v14h-1zM433 325h1v14h-1zM365 340h1v11h-1zM433 340h1v11h-1zM367 263h1v24h-1zM367 288h1v2h-1zM367 308h1v1h-1zM367 327h1v12h-1zM435 327h1v12h-1zM367 340h1v13h-1zM435 340h1v13h-1zM369 265h1v22h-1zM369 288h1v4h-1zM369 310h1v1h-1zM369 329h1v10h-1zM437 329h1v10h-1zM369 340h1v15h-1zM373 269h1v18h-1zM373 288h1v8h-1zM373 333h1v6h-1zM373 340h1v19h-1zM375 271h1v16h-1zM375 288h1v9h-1zM375 316h1v1h-1zM375 335h1v4h-1zM375 340h1v21h-1zM445 340h1v21h-1zM377 273h1v14h-1zM377 318h1v1h-1zM377 337h1v2h-1zM377 340h1v23h-1zM447 340h1v23h-1zM379 275h1v12h-1zM379 320h1v1h-1zM379 340h1v25h-1zM449 340h1v25h-1zM381 277h1v10h-1zM381 322h1v1h-1zM381 341h1v24h-1zM381 366h1v1h-1zM427 366h1v1h-1zM383 279h1v8h-1zM383 324h1v1h-1zM383 343h1v22h-1zM453 343h1v22h-1zM383 366h1v3h-1zM385 281h1v6h-1zM385 326h1v1h-1zM385 345h1v20h-1zM455 345h1v20h-1zM385 366h1v5h-1zM387 283h1v4h-1zM387 328h1v1h-1zM387 347h1v18h-1zM387 366h1v7h-1zM459 366h1v7h-1zM389 285h1v2h-1zM389 330h1v1h-1zM389 349h1v16h-1zM389 366h1v9h-1zM461 366h1v9h-1zM393 334h1v1h-1zM393 353h1v12h-1zM465 353h1v12h-1zM393 366h1v13h-1zM395 290h1v23h-1zM395 314h1v2h-1zM395 336h1v1h-1zM395 355h1v10h-1zM467 355h1v10h-1zM395 366h1v15h-1zM397 314h1v4h-1zM397 338h1v1h-1zM447 338h1v1h-1zM397 357h1v8h-1zM469 357h1v8h-1zM397 366h1v17h-1zM399 314h1v6h-1zM399 359h1v6h-1zM399 366h1v19h-1zM473 366h1v19h-1zM401 314h1v8h-1zM401 341h1v1h-1zM401 361h1v4h-1zM401 366h1v21h-1zM475 366h1v21h-1zM403 314h1v10h-1zM403 343h1v1h-1zM403 363h1v2h-1zM477 363h1v2h-1zM403 366h1v23h-1zM405 314h1v12h-1zM405 345h1v1h-1zM405 366h1v25h-1zM481 366h1v25h-1zM407 314h1v14h-1zM407 347h1v1h-1zM407 367h1v24h-1zM409 349h1v1h-1zM409 368h1v23h-1zM483 368h1v23h-1zM409 392h1v2h-1zM413 307h1v6h-1zM413 353h1v1h-1zM413 372h1v19h-1zM413 392h1v6h-1zM489 392h1v6h-1zM493 392h1v6h-1zM495 392h1v6h-1zM497 392h1v6h-1zM499 392h1v6h-1zM501 392h1v6h-1zM503 392h1v6h-1zM505 392h1v6h-1zM507 392h1v6h-1zM509 392h1v6h-1zM513 392h1v6h-1zM415 309h1v4h-1zM415 355h1v1h-1zM415 374h1v17h-1zM415 392h1v5h-1zM417 392h1v5h-1zM419 392h1v5h-1zM421 392h1v5h-1zM423 392h1v5h-1zM425 392h1v5h-1zM427 392h1v5h-1zM429 392h1v5h-1zM433 392h1v5h-1zM487 392h1v5h-1zM415 399h1v1h-1zM465 399h1v1h-1zM417 311h1v2h-1zM417 314h1v23h-1zM417 356h1v1h-1zM417 376h1v15h-1zM493 376h1v15h-1zM417 399h1v3h-1zM419 314h1v24h-1zM419 358h1v1h-1zM419 378h1v13h-1zM495 378h1v13h-1zM419 399h1v5h-1zM421 360h1v1h-1zM421 380h1v11h-1zM421 399h1v7h-1zM423 316h1v23h-1zM423 340h1v2h-1zM423 362h1v1h-1zM423 382h1v9h-1zM423 399h1v8h-1zM425 318h1v21h-1zM425 340h1v4h-1zM425 364h1v1h-1zM425 384h1v7h-1zM503 384h1v7h-1zM425 399h1v10h-1zM427 320h1v19h-1zM427 340h1v6h-1zM427 386h1v5h-1zM505 386h1v5h-1zM427 399h1v12h-1zM429 322h1v17h-1zM429 367h1v1h-1zM429 387h1v4h-1zM507 387h1v4h-1zM429 399h1v14h-1zM433 371h1v1h-1zM433 399h1v18h-1zM435 399h1v18h-1zM437 399h1v18h-1zM439 399h1v18h-1zM441 399h1v18h-1zM435 373h1v1h-1zM435 393h1v4h-1zM437 340h1v14h-1zM437 375h1v1h-1zM437 395h1v2h-1zM439 331h1v8h-1zM439 340h1v16h-1zM439 376h1v1h-1zM441 332h1v7h-1zM441 340h1v18h-1zM441 378h1v1h-1zM443 334h1v5h-1zM443 340h1v20h-1zM443 380h1v1h-1zM443 400h1v17h-1zM513 400h1v17h-1zM515 400h1v17h-1zM517 400h1v17h-1zM519 400h1v17h-1zM521 400h1v17h-1zM445 336h1v3h-1zM445 382h1v1h-1zM445 402h1v15h-1zM447 383h1v1h-1zM447 404h1v13h-1zM529 404h1v13h-1zM449 385h1v1h-1zM449 406h1v11h-1zM453 366h1v2h-1zM453 389h1v1h-1zM453 409h1v8h-1zM535 409h1v8h-1zM455 366h1v4h-1zM455 390h1v1h-1zM455 411h1v6h-1zM457 346h1v19h-1zM457 366h1v6h-1zM457 392h1v1h-1zM483 392h1v1h-1zM457 413h1v4h-1zM541 413h1v4h-1zM459 348h1v17h-1zM459 394h1v1h-1zM459 414h1v3h-1zM461 350h1v15h-1zM461 396h1v1h-1zM461 416h1v1h-1zM485 416h1v1h-1zM545 416h1v1h-1zM463 351h1v14h-1zM463 366h1v11h-1zM465 366h1v12h-1zM467 366h1v14h-1zM467 401h1v1h-1zM469 366h1v16h-1zM469 402h1v1h-1zM473 360h1v5h-1zM473 406h1v1h-1zM475 362h1v3h-1zM475 407h1v1h-1zM477 366h1v22h-1zM477 409h1v1h-1zM479 366h1v24h-1zM479 411h1v1h-1zM481 412h1v1h-1zM483 414h1v1h-1zM485 370h1v21h-1zM485 392h1v3h-1zM487 371h1v20h-1zM489 373h1v18h-1zM493 400h1v1h-1zM495 400h1v3h-1zM497 379h1v12h-1zM497 400h1v5h-1zM499 381h1v10h-1zM499 400h1v6h-1zM501 383h1v8h-1zM501 400h1v8h-1zM503 400h1v9h-1zM505 400h1v11h-1zM507 400h1v13h-1zM509 389h1v2h-1zM509 400h1v14h-1zM515 394h1v4h-1zM517 395h1v3h-1zM519 397h1v1h-1zM523 401h1v17h-1zM525 401h1v17h-1zM527 403h1v15h-1zM533 407h1v10h-1zM537 410h1v7h-1zM539 412h1v5h-1zM543 415h1v2h-1zM547 418h1v1h-1z"/>
<path fill="#ff00ff" d="M127 106h1v1h-1zM129 106h1v2h-1zM155 106h1v2h-1zM133 106h1v5h-1zM159 106h1v5h-1zM135 106h1v7h-1zM161 106h1v7h-1zM137 106h1v8h-1zM139 105h1v11h-1zM165 105h1v11h-1zM141 105h1v12h-1zM143 105h1v14h-1zM145 106h1v15h-1zM147 106h1v16h-1zM149 106h1v16h-1zM153 107h1v15h-1zM153 124h1v3h-1zM155 109h1v13h-1zM155 124h1v4h-1zM157 106h1v4h-1zM157 111h1v11h-1zM157 124h1v6h-1zM159 112h1v10h-1zM159 124h1v7h-1zM161 124h1v7h-1zM163 124h1v7h-1zM165 124h1v7h-1zM167 124h1v7h-1zM169 124h1v7h-1zM161 114h1v8h-1zM161 132h1v1h-1zM185 132h1v1h-1zM163 105h1v9h-1zM163 115h1v7h-1zM163 132h1v3h-1zM187 132h1v3h-1zM165 117h1v5h-1zM165 132h1v4h-1zM189 132h1v4h-1zM167 105h1v13h-1zM167 119h1v3h-1zM167 132h1v6h-1zM169 106h1v13h-1zM169 120h1v2h-1zM169 132h1v7h-1zM173 106h1v17h-1zM175 106h1v17h-1zM177 106h1v17h-1zM173 125h1v6h-1zM175 125h1v6h-1zM183 125h1v6h-1zM185 125h1v6h-1zM187 125h1v6h-1zM189 125h1v6h-1zM193 125h1v6h-1zM195 125h1v6h-1zM197 125h1v6h-1zM173 132h1v11h-1zM197 132h1v11h-1zM175 132h1v12h-1zM177 125h1v1h-1zM177 127h1v4h-1zM201 127h1v4h-1zM177 132h1v14h-1zM179 108h1v15h-1zM179 125h1v3h-1zM179 129h1v2h-1zM203 129h1v2h-1zM179 132h1v16h-1zM203 132h1v16h-1zM181 110h1v13h-1zM181 125h1v4h-1zM181 130h1v1h-1zM181 132h1v17h-1zM183 111h1v12h-1zM183 132h1v19h-1zM185 113h1v10h-1zM185 134h1v19h-1zM187 115h1v8h-1zM187 136h1v18h-1zM189 117h1v6h-1zM189 137h1v19h-1zM193 120h1v3h-1zM193 132h1v8h-1zM193 141h1v16h-1zM193 158h1v1h-1zM215 158h1v1h-1zM195 122h1v1h-1zM195 132h1v9h-1zM195 142h1v15h-1zM217 142h1v15h-1zM195 158h1v3h-1zM217 158h1v3h-1zM197 144h1v13h-1zM219 144h1v13h-1zM197 158h1v5h-1zM219 158h1v5h-1zM199 126h1v5h-1zM199 132h1v13h-1zM199 146h1v11h-1zM221 146h1v11h-1zM199 158h1v6h-1zM201 132h1v15h-1zM201 148h1v9h-1zM223 148h1v9h-1zM201 158h1v8h-1zM223 158h1v8h-1zM203 149h1v8h-1zM225 149h1v8h-1zM203 158h1v10h-1zM225 158h1v10h-1zM205 132h1v18h-1zM205 151h1v6h-1zM227 151h1v6h-1zM205 158h1v11h-1zM207 133h1v19h-1zM207 153h1v4h-1zM229 153h1v4h-1zM207 158h1v13h-1zM209 135h1v19h-1zM209 155h1v2h-1zM209 158h1v15h-1zM213 138h1v19h-1zM213 158h1v18h-1zM233 158h1v18h-1zM215 140h1v17h-1zM215 160h1v18h-1zM217 162h1v18h-1zM219 164h1v18h-1zM221 158h1v7h-1zM221 166h1v17h-1zM223 167h1v16h-1zM243 167h1v16h-1zM223 184h1v1h-1zM243 184h1v1h-1zM225 169h1v14h-1zM225 184h1v3h-1zM245 184h1v3h-1zM227 158h1v12h-1zM227 171h1v12h-1zM227 184h1v5h-1zM247 184h1v5h-1zM229 158h1v14h-1zM229 173h1v10h-1zM229 184h1v7h-1zM249 184h1v7h-1zM233 177h1v6h-1zM233 184h1v10h-1zM253 184h1v10h-1zM235 159h1v18h-1zM235 178h1v5h-1zM255 178h1v5h-1zM235 184h1v12h-1zM255 184h1v12h-1zM237 161h1v18h-1zM237 180h1v3h-1zM257 180h1v3h-1zM237 184h1v14h-1zM257 184h1v14h-1zM239 163h1v18h-1zM239 182h1v1h-1zM259 182h1v1h-1zM239 184h1v16h-1zM259 184h1v16h-1zM241 165h1v18h-1zM241 184h1v18h-1zM261 184h1v18h-1zM243 186h1v17h-1zM245 168h1v15h-1zM245 188h1v17h-1zM247 170h1v13h-1zM247 190h1v17h-1zM249 172h1v11h-1zM249 192h1v17h-1zM269 192h1v17h-1zM253 176h1v7h-1zM253 195h1v14h-1zM253 210h1v3h-1zM255 197h1v12h-1zM255 210h1v5h-1zM257 199h1v10h-1zM257 210h1v6h-1zM275 210h1v6h-1zM259 201h1v8h-1zM259 210h1v8h-1zM277 210h1v8h-1zM261 203h1v6h-1zM261 210h1v10h-1zM279 210h1v10h-1zM263 186h1v18h-1zM263 205h1v4h-1zM263 210h1v12h-1zM281 210h1v12h-1zM265 188h1v18h-1zM265 207h1v2h-1zM265 210h1v14h-1zM283 210h1v14h-1zM267 190h1v18h-1zM267 210h1v16h-1zM285 210h1v16h-1zM269 211h1v17h-1zM273 196h1v13h-1zM273 210h1v4h-1zM273 215h1v17h-1zM275 198h1v11h-1zM275 217h1v17h-1zM277 200h1v9h-1zM277 219h1v16h-1zM279 202h1v7h-1zM279 221h1v14h-1zM279 236h1v2h-1zM297 236h1v2h-1zM281 204h1v5h-1zM281 223h1v12h-1zM281 236h1v4h-1zM299 236h1v4h-1zM283 206h1v3h-1zM283 225h1v10h-1zM283 236h1v6h-1zM301 236h1v6h-1zM285 208h1v1h-1zM285 227h1v8h-1zM285 236h1v8h-1zM303 236h1v8h-1zM287 210h1v18h-1zM287 229h1v6h-1zM287 236h1v10h-1zM305 236h1v10h-1zM289 212h1v18h-1zM289 231h1v4h-1zM289 236h1v11h-1zM293 216h1v18h-1zM293 236h1v15h-1zM295 218h1v17h-1zM295 237h1v16h-1zM297 220h1v15h-1zM297 239h1v16h-1zM299 222h1v13h-1zM299 241h1v16h-1zM301 224h1v11h-1zM301 243h1v16h-1zM303 226h1v9h-1zM303 245h1v16h-1zM305 228h1v7h-1zM305 247h1v17h-1zM307 230h1v5h-1zM307 236h1v12h-1zM307 249h1v12h-1zM307 262h1v4h-1zM325 262h1v4h-1zM309 232h1v3h-1zM309 236h1v14h-1zM309 251h1v17h-1zM313 236h1v18h-1zM313 255h1v6h-1zM313 262h1v10h-1zM315 238h1v18h-1zM315 257h1v17h-1zM317 240h1v18h-1zM317 259h1v17h-1zM319 242h1v18h-1zM319 262h1v16h-1zM337 262h1v16h-1zM321 244h1v18h-1zM321 263h1v17h-1zM323 246h1v18h-1zM323 265h1v17h-1zM325 248h1v13h-1zM325 267h1v17h-1zM327 250h1v18h-1zM327 269h1v17h-1zM329 252h1v18h-1zM329 271h1v16h-1zM333 256h1v18h-1zM333 275h1v12h-1zM333 288h1v4h-1zM335 258h1v18h-1zM335 277h1v10h-1zM335 288h1v6h-1zM353 288h1v6h-1zM337 260h1v1h-1zM337 279h1v8h-1zM337 288h1v8h-1zM355 288h1v8h-1zM339 262h1v18h-1zM339 281h1v6h-1zM339 288h1v10h-1zM357 288h1v10h-1zM341 264h1v18h-1zM341 283h1v4h-1zM341 288h1v12h-1zM359 288h1v12h-1zM343 266h1v18h-1zM343 285h1v2h-1zM343 288h1v14h-1zM361 288h1v14h-1zM345 268h1v18h-1zM345 288h1v16h-1zM363 288h1v16h-1zM347 270h1v17h-1zM347 289h1v17h-1zM349 272h1v15h-1zM349 288h1v2h-1zM349 291h1v17h-1zM353 276h1v11h-1zM353 295h1v18h-1zM355 278h1v9h-1zM355 297h1v16h-1zM375 297h1v16h-1zM355 314h1v1h-1zM357 280h1v7h-1zM357 299h1v14h-1zM377 299h1v14h-1zM357 314h1v3h-1zM359 282h1v5h-1zM359 301h1v12h-1zM379 301h1v12h-1zM359 314h1v5h-1zM361 284h1v3h-1zM361 303h1v10h-1zM381 303h1v10h-1zM361 314h1v7h-1zM363 286h1v1h-1zM363 305h1v8h-1zM383 305h1v8h-1zM363 314h1v9h-1zM365 288h1v18h-1zM365 307h1v6h-1zM385 307h1v6h-1zM365 314h1v11h-1zM367 290h1v18h-1zM367 309h1v4h-1zM387 309h1v4h-1zM367 314h1v13h-1zM369 292h1v18h-1zM369 311h1v2h-1zM389 311h1v2h-1zM369 314h1v15h-1zM373 296h1v17h-1zM373 315h1v18h-1zM375 314h1v2h-1zM375 317h1v18h-1zM377 314h1v4h-1zM377 319h1v18h-1zM379 314h1v6h-1zM379 321h1v18h-1zM381 314h1v8h-1zM381 323h1v16h-1zM381 340h1v1h-1zM401 340h1v1h-1zM383 314h1v10h-1zM383 325h1v14h-1zM383 340h1v3h-1zM403 340h1v3h-1zM385 314h1v12h-1zM385 327h1v12h-1zM385 340h1v5h-1zM405 340h1v5h-1zM387 314h1v14h-1zM387 329h1v10h-1zM409 329h1v10h-1zM387 340h1v7h-1zM407 340h1v7h-1zM389 314h1v16h-1zM389 331h1v8h-1zM389 340h1v9h-1zM409 340h1v9h-1zM393 315h1v19h-1zM393 335h1v4h-1zM415 335h1v4h-1zM393 340h1v13h-1zM413 340h1v13h-1zM395 316h1v20h-1zM395 337h1v2h-1zM417 337h1v2h-1zM395 340h1v15h-1zM415 340h1v15h-1zM397 318h1v20h-1zM397 340h1v17h-1zM399 320h1v19h-1zM399 340h1v19h-1zM401 322h1v17h-1zM401 342h1v19h-1zM403 324h1v15h-1zM403 344h1v19h-1zM405 326h1v13h-1zM405 346h1v19h-1zM427 346h1v19h-1zM407 328h1v11h-1zM407 348h1v17h-1zM407 366h1v1h-1zM429 366h1v1h-1zM409 350h1v15h-1zM409 366h1v2h-1zM413 333h1v6h-1zM413 354h1v11h-1zM437 354h1v11h-1zM413 366h1v6h-1zM415 356h1v9h-1zM439 356h1v9h-1zM415 366h1v8h-1zM417 340h1v16h-1zM417 357h1v8h-1zM417 366h1v10h-1zM439 366h1v10h-1zM419 338h1v1h-1zM419 340h1v18h-1zM419 359h1v6h-1zM419 366h1v12h-1zM441 366h1v12h-1zM421 340h1v20h-1zM421 361h1v4h-1zM445 361h1v4h-1zM421 366h1v14h-1zM443 366h1v14h-1zM423 342h1v20h-1zM423 363h1v2h-1zM447 363h1v2h-1zM423 366h1v16h-1zM445 366h1v16h-1zM425 344h1v20h-1zM425 366h1v18h-1zM427 367h1v19h-1zM429 347h1v18h-1zM429 368h1v19h-1zM433 351h1v14h-1zM433 366h1v5h-1zM433 372h1v19h-1zM457 372h1v19h-1zM435 353h1v12h-1zM435 366h1v7h-1zM435 374h1v17h-1zM435 392h1v1h-1zM437 366h1v9h-1zM437 376h1v15h-1zM437 392h1v3h-1zM439 377h1v14h-1zM463 377h1v14h-1zM439 392h1v5h-1zM441 392h1v5h-1zM443 392h1v5h-1zM445 392h1v5h-1zM447 392h1v5h-1zM449 392h1v5h-1zM453 392h1v5h-1zM455 392h1v5h-1zM463 392h1v5h-1zM465 392h1v5h-1zM467 392h1v5h-1zM469 392h1v5h-1zM473 392h1v5h-1zM441 358h1v7h-1zM441 379h1v12h-1zM443 360h1v5h-1zM443 381h1v10h-1zM443 399h1v1h-1zM445 383h1v8h-1zM445 399h1v3h-1zM469 399h1v3h-1zM447 366h1v17h-1zM447 384h1v7h-1zM447 399h1v5h-1zM449 366h1v19h-1zM449 386h1v5h-1zM449 399h1v7h-1zM473 399h1v7h-1zM453 368h1v21h-1zM453 390h1v1h-1zM479 390h1v1h-1zM453 399h1v10h-1zM455 370h1v20h-1zM455 399h1v12h-1zM457 393h1v4h-1zM457 399h1v14h-1zM459 373h1v18h-1zM459 392h1v2h-1zM459 395h1v2h-1zM459 399h1v15h-1zM461 375h1v16h-1zM461 392h1v4h-1zM461 399h1v17h-1zM463 399h1v18h-1zM465 378h1v13h-1zM465 400h1v17h-1zM487 400h1v17h-1zM489 400h1v17h-1zM467 380h1v11h-1zM467 399h1v2h-1zM467 402h1v15h-1zM469 382h1v9h-1zM469 403h1v14h-1zM495 403h1v14h-1zM473 385h1v6h-1zM473 407h1v10h-1zM475 387h1v4h-1zM475 392h1v6h-1zM477 392h1v6h-1zM479 392h1v6h-1zM481 392h1v6h-1zM475 400h1v7h-1zM475 408h1v9h-1zM477 388h1v3h-1zM477 400h1v9h-1zM477 410h1v7h-1zM479 400h1v11h-1zM479 412h1v5h-1zM481 400h1v12h-1zM481 413h1v4h-1zM507 413h1v4h-1zM483 393h1v5h-1zM483 400h1v14h-1zM483 415h1v2h-1zM485 395h1v3h-1zM485 400h1v16h-1zM487 397h1v1h-1zM493 401h1v16h-1zM497 405h1v12h-1zM499 406h1v12h-1zM501 408h1v10h-1zM503 409h1v9h-1zM505 411h1v6h-1zM509 414h1v3h-1z"/><path d="M0.5 0.5h730v520h-730z" fill="none" stroke="#000"/></svg><div class="t c" style="left:134px;top:130px">6299</div><div class="t c" style="left:154px;top:117px">6309</div><div class="t c" style="left:174px;top:130px">6319</div><div class="t c" style="left:194px;top:117px">6329</div><div class="t c" style="left:214px;top:130px">6339</div><div class="t c" style="left:234px;top:117px">6349</div><div class="t c" style="left:254px;top:130px">6359</div><div class="t c" style="left:274px;top:117px">6369</div><div class="t c" style="left:294px;top:130px">6379</div><div class="t c" style="left:314px;top:117px">6389</div><div class="t c" style="left:334px;top:130px">6399</div><div class="t c" style="left:354px;top:117px">6409</div><div class="t c" style="left:374px;top:130px">6419</div><div class="t c" style="left:394px;top:117px">6429</div><div class="t c" style="left:414px;top:130px">6439</div><div class="t c" style="left:434px;top:117px">6449</div><div class="t c" style="left:454px;top:130px">6459</div><div class="t c" style="left:474px;top:117px">6469</div><div class="t c" style="left:494px;top:130px">6479</div><div class="t c" style="left:514px;top:117px">6489</div><div class="t c" style="left:534px;top:130px">6499</div><div class="t c" style="left:554px;top:117px">6509</div><div class="t c" style="left:574px;top:130px">6519</div><div class="t c" style="left:594px;top:117px">6529</div><div class="t c" style="left:614px;top:130px">6539</div><div class="t c" style="left:634px;top:117px">6549</div><div class="t c" style="left:654px;top:130px">6559</div><div class="t c" style="left:674px;top:117px">6569</div><div class="t c" style="left:694px;top:130px">6579</div><div class="t c" style="left:714px;top:117px">6589</div><div class="t c" style="left:734px;top:130px">6599</div><div class="t c" style="left:754px;top:117px">6609</div><div class="t c" style="left:774px;top:130px">6619</div><div class="t c" style="left:794px;top:117px">6629</div><div class="t c" style="left:814px;top:130px">6639</div><div class="t c" style="left:834px;top:117px">6649</div><div class="t c" style="left:854px;top:130px">6659</div><div class="t c" style="left:112.5px;top:142px">10</div><div class="t c" style="left:866px;top:142px">10</div><div class="t c" style="left:112.5px;top:169px">9</div><div class="t c" style="left:866px;top:169px">9</div><div class="t c" style="left:112.5px;top:195px">8</div><div class="t c" style="left:866px;top:195px">8</div><div class="t c" style="left:112.5px;top:221px">7</div><div class="t c" style="left:866px;top:221px">7</div><div class="t c" style="left:112.5px;top:247px">6</div><div class="t c" style="left:866px;top:247px">6</div><div class="t c" style="left:112.5px;top:273px">5</div><div class="t c" style="left:866px;top:273px">5</div><div class="t c" style="left:112.5px;top:299px">4</div><div class="t c" style="left:866px;top:299px">4</div><div class="t c" style="left:112.5px;top:325px">3</div><div class="t c" style="left:866px;top:325px">3</div><div class="t c" style="left:112.5px;top:351px">2</div><div class="t c" style="left:866px;top:351px">2</div><div class="t c" style="left:112.5px;top:377px">1</div><div class="t c" style="left:866px;top:377px">1</div><div class="t c" style="left:112.5px;top:403px">0</div><div class="t c" style="left:866px;top:403px">0</div><div class="t c" style="left:112.5px;top:429px">23</div><div class="t c" style="left:866px;top:429px">23</div><div class="t c" style="left:112.5px;top:455px">22</div><div class="t c" style="left:866px;top:455px">22</div><div class="t c" style="left:112.5px;top:481px">21</div><div class="t c" style="left:866px;top:481px">21</div><div class="t c" style="left:112.5px;top:507px">20</div><div class="t c" style="left:866px;top:507px">20</div><div class="t c" style="left:112.5px;top:533px">19</div><div class="t c" style="left:866px;top:533px">19</div><div class="t c" style="left:112.5px;top:559px">18</div><div class="t c" style="left:866px;top:559px">18</div><div class="t c" style="left:112.5px;top:585px">17</div><div class="t c" style="left:866px;top:585px">17</div><div class="t c" style="left:112.5px;top:611px">16</div><div class="t c" style="left:866px;top:611px">16</div><div class="t c" style="left:112.5px;top:637px">15</div><div class="t c" style="left:866px;top:637px">15</div><div class="t c" style="left:112.5px;top:662px">14</div><div class="t c" style="left:866px;top:662px">14</div><div class="t c" style="left:133px;top:675px">Jn06</div><div class="t c" style="left:153px;top:688px">Jn16</div><div class="t c" style="left:173px;top:675px">Jn26</div><div class="t c" style="left:193px;top:688px">Fb05</div><div class="t c" style="left:213px;top:675px">Fb15</div><div class="t c" style="left:233px;top:688px">Fb25</div><div class="t c" style="left:253px;top:675px">Mr07</div><div class="t c" style="left:273px;top:688px">Mr17</div><div class="t c" style="left:293px;top:675px">Mr27</div><div class="t c" style="left:313px;top:688px">Ar06</div><div class="t c" style="left:333px;top:675px">Ar16</div><div class="t c" style="left:353px;top:688px">Ar26</div><div class="t c" style="left:373px;top:675px">My06</div><div class="t c" style="left:393px;top:688px">My16</div><div class="t c" style="left:413px;top:675px">My26</div><div class="t c" style="left:433px;top:688px">Jn05</div><div class="t c" style="left:453px;top:675px">Jn15</div><div class="t c" style="left:473px;top:688px">Jn25</div><div class="t c" style="left:493px;top:675px">Jl05</div><div class="t c" style="left:513px;top:688px">Jl15</div><div class="t c" style="left:533px;top:675px">Jl25</div><div class="t c" style="left:553px;top:688px">Ag04</div><div class="t c" style="left:573px;top:675px">Ag14</div><div class="t c" style="left:593px;top:688px">Ag24</div><div class="t c" style="left:613px;top:675px">Sp03</div><div class="t c" style="left:633px;top:688px">Sp13</div><div class="t c" style="left:653px;top:675px">Sp23</div><div class="t c" style="left:673px;top:688px">Ot03</div><div class="t c" style="left:693px;top:675px">Ot13</div><div class="t c" style="left:713px;top:688px">Ot23</div><div class="t c" style="left:733px;top:675px">Nv02</div><div class="t c" style="left:753px;top:688px">Nv12</div><div class="t c" style="left:773px;top:675px">Nv22</div><div class="t c" style="left:793px;top:688px">Dc02</div><div class="t c" style="left:813px;top:675px">Dc12</div><div class="t c" style="left:833px;top:688px">Dc22</div><div class="t c" style="left:853px;top:675px">Jn01</div><div class="t c" style="left:111px;top:688px">2013</div><div class="t c" style="left:873px;top:688px">2014</div><div class="t" style="left:903px;top:675px">rf</div><div class="t c" style="left:98px;top:278px">L</div><div class="t c" style="left:98px;top:304px">O</div><div class="t c" style="left:98px;top:330px">C</div><div class="t c" style="left:98px;top:356px">A</div><div class="t c" style="left:98px;top:382px">L</div><div class="t c" style="left:98px;top:434px">T</div><div class="t c" style="left:98px;top:460px">I</div><div class="t c" style="left:98px;top:486px">M</div><div class="t c" style="left:98px;top:512px">E</div><div class="t c" style="left:883px;top:226px">U</div><div class="t c" style="left:883px;top:252px">N</div><div class="t c" style="left:883px;top:278px">I</div><div class="t c" style="left:883px;top:304px">V</div><div class="t c" style="left:883px;top:330px">E</div><div class="t c" style="left:883px;top:356px">R</div><div class="t c" style="left:883px;top:382px">S</div><div class="t c" style="left:883px;top:408px">A</div><div class="t c" style="left:883px;top:434px">L</div><div class="t c" style="left:883px;top:486px">T</div><div class="t c" style="left:883px;top:512px">I</div><div class="t c" style="left:883px;top:538px">M</div><div class="t c" style="left:883px;top:564px">E</div><div style="position:absolute;left:5px;top:706px;width:934px;height:1px;background:#d4d0c8;"></div><div style="position:absolute;left:5px;top:707px;width:934px;height:1px;background:#ffffff;"></div><div style="position:absolute;left:5px;top:708px;width:934px;height:12px;background:#d4d0c8;"></div><div style="position:absolute;left:5px;top:707px;width:15px;height:13px;background:#d4d0c8;"></div><div style="position:absolute;left:5px;top:707px;width:15px;height:1px;background:#ffffff;"></div><div style="position:absolute;left:5px;top:707px;width:1px;height:13px;background:#ffffff;"></div><div style="position:absolute;left:6px;top:708px;width:13px;height:1px;background:#d4d0c8;"></div><div style="position:absolute;left:6px;top:708px;width:1px;height:11px;background:#d4d0c8;"></div><div style="position:absolute;left:5px;top:719px;width:15px;height:1px;background:#404040;"></div><div style="position:absolute;left:19px;top:707px;width:1px;height:13px;background:#404040;"></div><div style="position:absolute;left:6px;top:718px;width:13px;height:1px;background:#808080;"></div><div style="position:absolute;left:18px;top:708px;width:1px;height:11px;background:#808080;"></div><div style="position:absolute;left:20px;top:707px;width:919px;height:2px;background:#ffffff;"></div><div style="position:absolute;left:20px;top:707px;width:2px;height:12px;background:#ffffff;"></div><svg style="position:absolute;left:9px;top:709px" width="6" height="9"><path d="M4.5 0.5v8L0.8 4.5z" fill="#d4d0c8" stroke="#000" stroke-width="1"/></svg><div style="position:absolute;left:4px;top:720px;width:935px;height:1px;background:#000;"></div><div style="position:absolute;left:4px;top:721px;width:935px;height:13px;background:#fdf5d3;"></div><div style="position:absolute;left:4px;top:734px;width:935px;height:1px;background:#000;"></div><div style="position:absolute;left:4px;top:735px;width:935px;height:2px;background:#ffffff;"></div><div style="position:absolute;left:4px;top:737px;width:935px;height:4px;background:#d4d0c8;"></div><div class="t" style="left:10px;top:723px;font-size:11px;color:#000;font-weight:normal;">Mask:&nbsp; Ten degrees</div><div class="t" style="left:428px;top:723px;font-size:11px;color:#000;font-weight:normal;">Night when Sun below -12 degrees</div>
</body></html>
